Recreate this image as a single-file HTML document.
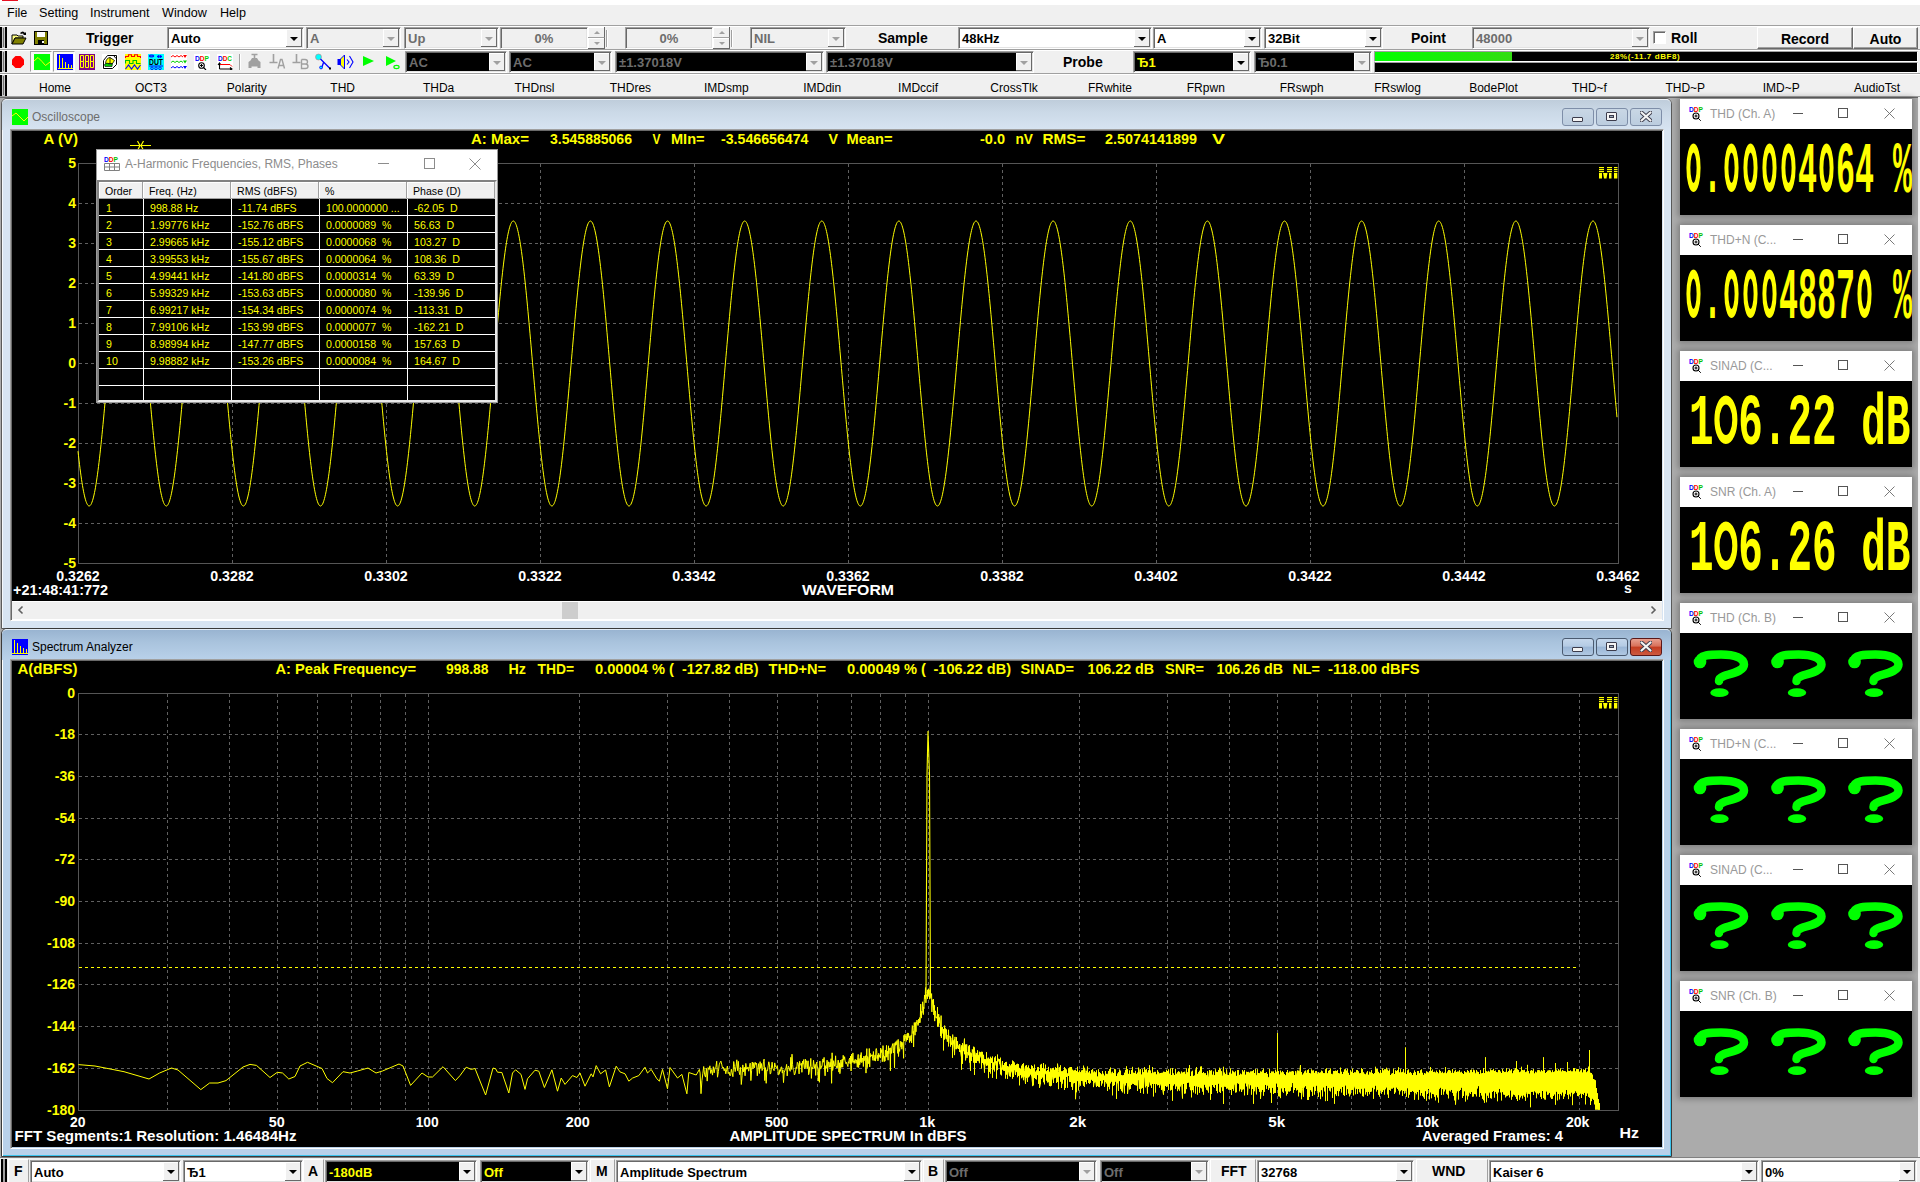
<!DOCTYPE html>
<html><head><meta charset="utf-8">
<style>
*{margin:0;padding:0;box-sizing:border-box}
html,body{width:1920px;height:1182px;overflow:hidden;background:#ababab;font-family:"Liberation Sans",sans-serif;}
.a{position:absolute}
.t{position:absolute;white-space:nowrap;line-height:1}
.tb{background:#f0f0f0}
.cb{position:absolute;background:#fff;border-top:1px solid #a0a0a0;border-left:1px solid #a0a0a0;border-right:1px solid #fff;border-bottom:1px solid #fff;box-shadow:inset 1px 1px 0 #696969, inset -1px -1px 0 #e3e3e3}
.cb .v{position:absolute;left:3px;top:3px;font-size:13px;font-weight:bold;color:#000;white-space:nowrap;line-height:1}
.cb .ar{position:absolute;top:1px;right:1px;bottom:1px;width:16px;background:#f0f0f0;border-right:1px solid #696969;border-bottom:1px solid #696969;box-shadow:inset 1px 1px 0 #fff}
.cb .ar:after{content:"";position:absolute;left:4px;top:8px;border-left:4px solid transparent;border-right:4px solid transparent;border-top:4px solid #000}
.cb.dis{background:#f0f0f0}
.cb.dis .v{color:#6d6d6d}
.cb.dis .ar:after{border-top-color:#a0a0a0}
.cb.blk{background:#000}
.cb.blk .v{color:#6d6d6d}
.cb.yel .v{color:#ffff00}
.cb.blk .ar:after{border-top-color:#a0a0a0}
.cb.blk.en .ar:after{border-top-color:#000}
.lbl{position:absolute;font-size:14px;font-weight:bold;color:#000;white-space:nowrap;line-height:1}
.tab{position:absolute;top:82px;font-size:12px;color:#000;white-space:nowrap;line-height:1;transform:translateX(-50%)}
.grip{position:absolute;left:1px;width:5px;border-left:2px solid #000;border-right:2px solid #000;background:#a0a0a0}
</style></head><body>
<div class="a" style="left:0;top:0;width:1920px;height:5px;background:#fff"></div>
<div class="a" style="left:2px;top:0;width:16px;height:1px;background:#e81123"></div>
<div class="a tb" style="left:0;top:5px;width:1920px;height:92px"></div>
<div class="t" style="left:7px;top:7px;font-size:12.6px;color:#000">File</div>
<div class="t" style="left:39px;top:7px;font-size:12.6px;color:#000">Setting</div>
<div class="t" style="left:90px;top:7px;font-size:12.6px;color:#000">Instrument</div>
<div class="t" style="left:162px;top:7px;font-size:12.6px;color:#000">Window</div>
<div class="t" style="left:220px;top:7px;font-size:12.6px;color:#000">Help</div>
<div class="a" style="left:0;top:25px;width:1920px;height:1px;background:#a0a0a0"></div>
<div class="a" style="left:0;top:26px;width:1920px;height:1px;background:#fff"></div>
<div class="a" style="left:0;top:49px;width:1920px;height:1px;background:#a0a0a0"></div>
<div class="a" style="left:0;top:50px;width:1920px;height:1px;background:#fff"></div>
<div class="a" style="left:0;top:73px;width:1920px;height:1px;background:#a0a0a0"></div>
<div class="a" style="left:0;top:74px;width:1920px;height:1px;background:#fff"></div>
<div class="a" style="left:0;top:96px;width:1920px;height:1px;background:#a0a0a0"></div>
<div class="a" style="left:0;top:97px;width:1920px;height:1px;background:#696969"></div>
<div class="a" style="left:0;top:27px;width:2px;height:21px;background:#000"></div>
<div class="a" style="left:2px;top:27px;width:3px;height:21px;background:#c8c8c8"></div>
<div class="a" style="left:3px;top:28px;width:1px;height:19px;background:#707070"></div>
<div class="a" style="left:5px;top:27px;width:2px;height:21px;background:#000"></div>
<div class="a" style="left:0;top:51px;width:2px;height:21px;background:#000"></div>
<div class="a" style="left:2px;top:51px;width:3px;height:21px;background:#c8c8c8"></div>
<div class="a" style="left:3px;top:52px;width:1px;height:19px;background:#707070"></div>
<div class="a" style="left:5px;top:51px;width:2px;height:21px;background:#000"></div>
<div class="a" style="left:0;top:75px;width:2px;height:21px;background:#000"></div>
<div class="a" style="left:2px;top:75px;width:3px;height:21px;background:#c8c8c8"></div>
<div class="a" style="left:3px;top:76px;width:1px;height:19px;background:#707070"></div>
<div class="a" style="left:5px;top:75px;width:2px;height:21px;background:#000"></div><svg class="a" style="left:11px;top:30px" width="16" height="16" viewBox="0 0 16 16"><path d="M1 5h5l1 1h5v2H4L1 14z" fill="#ffff80" stroke="#000" stroke-width="1"/><path d="M1 14l3-6h11l-3 6z" fill="#808000" stroke="#000"/><path d="M9 3q3-3 5 0l1-1v3h-3l1-1q-2-1-3 0" fill="#000"/></svg>
<svg class="a" style="left:34px;top:31px" width="15" height="15" viewBox="0 0 15 15"><rect x="0.5" y="0.5" width="13" height="13" fill="#808000" stroke="#000"/><rect x="3" y="1" width="8" height="5" fill="#fff"/><rect x="4" y="9" width="6" height="4" fill="#000"/><rect x="8" y="10" width="2" height="2" fill="#fff"/></svg>
<svg class="a" style="left:12px;top:56px" width="12" height="12" viewBox="0 0 12 12"><polygon points="3.5,0 8.5,0 12,3.5 12,8.5 8.5,12 3.5,12 0,8.5 0,3.5" fill="#ff0000"/></svg>
<div class="a" style="left:30px;top:51px;width:22px;height:21px;border-left:1px solid #a0a0a0;border-top:1px solid #a0a0a0;border-right:1px solid #fff;border-bottom:1px solid #fff;background:#f8f8f8"></div>
<div class="a" style="left:53px;top:51px;width:22px;height:21px;border-left:1px solid #a0a0a0;border-top:1px solid #a0a0a0;border-right:1px solid #fff;border-bottom:1px solid #fff;background:#f8f8f8"></div>
<svg class="a" style="left:34px;top:54px" width="16" height="16" viewBox="0 0 16 16"><rect width="16" height="16" fill="#00ff00"/><path d="M0 7L4 3.5L8 7.5L11.5 11.5L16 8" fill="none" stroke="#ffff00" stroke-width="1"/></svg>
<svg class="a" style="left:57px;top:54px" width="16" height="16" viewBox="0 0 16 16"><rect width="16" height="16" fill="#0000ff"/><path d="M1 14.5h15M2.5 1v14M5.5 4v11M8.5 8v7M11.5 10v5M14.5 11v4" stroke="#ffff00" stroke-width="1"/></svg>
<svg class="a" style="left:79px;top:54px" width="16" height="16" viewBox="0 0 16 16"><rect width="16" height="16" fill="#800080"/><path d="M1.5 1.5h3v6h-3zM1.5 7.5h3v6h-3z" fill="none" stroke="#ffff00" stroke-width="1"/><path d="M6.5 1.5h3v6h-3zM6.5 7.5h3v6h-3z" fill="none" stroke="#ffff00" stroke-width="1"/><path d="M11.5 1.5h3v6h-3zM11.5 7.5h3v6h-3z" fill="none" stroke="#ffff00" stroke-width="1"/></svg>
<svg class="a" style="left:102px;top:54px" width="16" height="16" viewBox="0 0 16 16"><rect width="16" height="16" fill="#fff"/><path d="M1.5 6.5L5.5 1.5H14.5V10.5L10.5 14.5H1.5z" fill="#fff" stroke="#000"/><path d="M12 2l2 2.5" stroke="#000"/><path d="M3.5 9.5Q4 4 8 3.5L12.5 6.5L10.5 9.5z" fill="#ffff00" stroke="#000" stroke-width="0.8"/><path d="M2.5 10.5L5 9L8 10.5L10.5 9.5L10 12.5H3z" fill="#00d000" stroke="#000" stroke-width="0.6"/><path d="M8 3.5V9.5" stroke="#000" stroke-width="0.8"/></svg>
<svg class="a" style="left:125px;top:54px" width="16" height="16" viewBox="0 0 16 16"><rect width="16" height="16" fill="#ffff00"/><path d="M0.5 4V2.5H3.5V0.8H6.5V2.5H9.5V0.8H12.5V2.5H15.5V4" stroke="#ff0000" fill="none" stroke-width="1.1"/><path d="M0.5 9.5V6.5H4.5V9.5H8V6.5H11.5V9.5H15.5" stroke="#00c000" fill="none" stroke-width="1.1"/><path d="M0.5 15L3.5 11L6.5 15L9.5 11L12.5 15L15.5 11" stroke="#0000ff" fill="none" stroke-width="1.1"/></svg>
<svg class="a" style="left:148px;top:54px" width="16" height="16" viewBox="0 0 16 16"><rect width="16" height="16" fill="#00ffff"/><path d="M1 2h5M11 1.5l-2 1 2 1zM12 1.5l2 1-2 1z" stroke="#0000ff" fill="#0000ff" stroke-width="1"/><ellipse cx="3.5" cy="2" rx="2.5" ry="1" fill="none" stroke="#0000ff"/><text x="1" y="10.5" font-family="Liberation Sans" font-weight="bold" font-size="8.5" fill="#000" textLength="14" lengthAdjust="spacingAndGlyphs">DUT</text><path d="M1 12h14" stroke="#0000ff"/><circle cx="4" cy="14.3" r="1.3" fill="none" stroke="#0000ff" stroke-width="0.9"/><circle cx="8" cy="14.3" r="1.3" fill="none" stroke="#0000ff" stroke-width="0.9"/><circle cx="12" cy="14.3" r="1.3" fill="none" stroke="#0000ff" stroke-width="0.9"/></svg>
<svg class="a" style="left:171px;top:54px" width="16" height="16" viewBox="0 0 16 16"><rect width="16" height="16" fill="#fff"/><path d="M0 3l2-1.5 2 1.5 2-1.5 2 1.5 2-1.5 2 1.5" stroke="#ff0000" fill="none"/><path d="M12 1h4l-2 3z" fill="#ff0000"/><path d="M0 8.5l2-1.5 2 1.5 2-1.5 2 1.5 2-1.5 2 1.5" stroke="#00d000" fill="none"/><path d="M12 6.5h4l-2 3z" fill="#00d000"/><path d="M0 14l2-1.5 2 1.5 2-1.5 2 1.5 2-1.5 2 1.5" stroke="#0000ff" fill="none"/><path d="M12 12h4l-2 3z" fill="#0000ff"/></svg>
<svg class="a" style="left:194px;top:54px" width="16" height="16" viewBox="0 0 16 16"><rect width="16" height="16" fill="#fff"/><text x="1" y="7" font-family="Liberation Sans" font-weight="bold" font-size="7.5" textLength="14" lengthAdjust="spacingAndGlyphs"><tspan fill="#0000ff">D</tspan><tspan fill="#ff0000">D</tspan><tspan fill="#00d000">P</tspan></text><circle cx="7.5" cy="11.5" r="2.8" fill="none" stroke="#000" stroke-width="1.1"/><path d="M6 11.5h3M7.5 10v3M9.5 13.5l2.5 2.5" stroke="#000" stroke-width="1.1"/></svg>
<svg class="a" style="left:217px;top:54px" width="16" height="16" viewBox="0 0 16 16"><rect width="16" height="16" fill="#fff"/><text x="1" y="7" font-family="Liberation Sans" font-weight="bold" font-size="7.5" textLength="14" lengthAdjust="spacingAndGlyphs"><tspan fill="#0000ff">D</tspan><tspan fill="#ff0000">D</tspan><tspan fill="#00d000">C</tspan></text><path d="M2.5 15V9.5M1 11l1.5-2 1.5 2M2.5 15H15M13 13.5l2 1.5-2 1.5" stroke="#000" fill="none" stroke-width="1.1"/><path d="M3 10.5H13L15 12.5" stroke="#ff0000" fill="none"/></svg>
<div class="a" style="left:239px;top:54px;width:1px;height:16px;background:#a0a0a0"></div><div class="a" style="left:240px;top:54px;width:1px;height:16px;background:#fff"></div>
<svg class="a" style="left:247px;top:53px" width="16" height="17" viewBox="0 0 16 17"><path d="M4.5 1.5h6M7.5 1.5v3.5" stroke="#a0a0a0" stroke-width="1.6" fill="none"/><path d="M5 5h5l1.5 2.5L13.5 9V15H10.5V13.5H4.5V15H1.5V9L3.5 7.5z" fill="#a0a0a0"/></svg>
<svg class="a" style="left:269px;top:53px" width="17" height="17" viewBox="0 0 17 17"><path d="M4.5 1v8.5M0.5 9.5h8" stroke="#a0a0a0" stroke-width="1.6"/><path d="M9 15.5L11.5 6.5h1.5L15.5 15.5M10 12.5h4.5" stroke="#a0a0a0" stroke-width="1.4" fill="none"/></svg>
<svg class="a" style="left:292px;top:53px" width="17" height="17" viewBox="0 0 17 17"><path d="M4.5 1v8.5M0.5 9.5h8" stroke="#a0a0a0" stroke-width="1.6"/><path d="M9.5 6.5h3.5q2.5 0 2.5 2.3t-2.5 2.2h-3.5M9.5 11h3.8q2.7 0 2.7 2.2t-2.7 2.3h-3.8zM9.5 6.5v9" stroke="#a0a0a0" stroke-width="1.4" fill="none"/></svg>
<svg class="a" style="left:315px;top:53px" width="17" height="17" viewBox="0 0 17 17"><circle cx="3.5" cy="4" r="3" fill="#00ffff" stroke="#c08080" stroke-width="0.6"/><path d="M5.5 6l9.5 9.5M8.5 9.5l-2 6" stroke="#0000ff" stroke-width="1.3" fill="none"/><circle cx="6" cy="14.5" r="1.4" fill="#00ffff" stroke="#0000ff" stroke-width="0.8"/><rect x="14" y="14.5" width="2" height="2" fill="#000"/></svg>
<svg class="a" style="left:337px;top:53px" width="17" height="17" viewBox="0 0 17 17"><rect x="0.5" y="6" width="3" height="6" fill="#0000ff"/><path d="M3.5 6L7.5 2V16L3.5 12z" fill="#ffff00" stroke="#0000ff" stroke-width="1"/><path d="M10 6.5l2 2.5-2 2.5M12.5 3l3.5 6-3.5 6" stroke="#0000ff" stroke-width="1.1" fill="none"/></svg>
<svg class="a" style="left:363px;top:54px" width="13" height="14" viewBox="0 0 13 14"><polygon points="0,2 11,7 0,12" fill="#00ff00"/></svg>
<svg class="a" style="left:386px;top:54px" width="14" height="16" viewBox="0 0 14 16"><polygon points="0,2 10,7 0,12" fill="#00ff00"/><ellipse cx="10.5" cy="13" rx="2.6" ry="1.6" fill="none" stroke="#00ff00" stroke-width="1.2"/></svg>
<div class="lbl" style="left:86px;top:31px">Trigger</div>
<div class="cb " style="left:167px;top:27px;width:137px;height:22px"><div class="v" style="left:3px;top:4px;font-size:13px;font-weight:bold">Auto</div><div class="ar"></div></div>

<div class="cb dis" style="left:306px;top:27px;width:95px;height:22px"><div class="v" style="left:3px;top:4px;font-size:13px;font-weight:bold">A</div><div class="ar"></div></div>

<div class="cb dis" style="left:404px;top:27px;width:95px;height:22px"><div class="v" style="left:3px;top:4px;font-size:13px;font-weight:bold">Up</div><div class="ar"></div></div>

<div class="cb dis" style="left:500px;top:27px;width:88px;height:22px"><div class="v" style="left:0;right:0;text-align:center;top:4px">0%</div></div>
<div class="a" style="left:588px;top:27px;width:17px;height:11px;background:#f0f0f0;border-right:1px solid #696969;border-bottom:1px solid #a0a0a0;box-shadow:inset 1px 1px 0 #fff"><div class="a" style="left:6px;top:4px;border-left:3px solid transparent;border-right:3px solid transparent;border-bottom:3px solid #a0a0a0"></div></div>
<div class="a" style="left:588px;top:38px;width:17px;height:11px;background:#f0f0f0;border-right:1px solid #696969;border-bottom:1px solid #696969;box-shadow:inset 1px 1px 0 #fff"><div class="a" style="left:6px;top:4px;border-left:3px solid transparent;border-right:3px solid transparent;border-top:3px solid #a0a0a0"></div></div>

<div class="a" style="left:606px;top:30px;width:1px;height:17px;background:#a0a0a0"></div><div class="a" style="left:607px;top:30px;width:1px;height:17px;background:#fff"></div>
<div class="cb dis" style="left:625px;top:27px;width:88px;height:22px"><div class="v" style="left:0;right:0;text-align:center;top:4px">0%</div></div>
<div class="a" style="left:713px;top:27px;width:17px;height:11px;background:#f0f0f0;border-right:1px solid #696969;border-bottom:1px solid #a0a0a0;box-shadow:inset 1px 1px 0 #fff"><div class="a" style="left:6px;top:4px;border-left:3px solid transparent;border-right:3px solid transparent;border-bottom:3px solid #a0a0a0"></div></div>
<div class="a" style="left:713px;top:38px;width:17px;height:11px;background:#f0f0f0;border-right:1px solid #696969;border-bottom:1px solid #696969;box-shadow:inset 1px 1px 0 #fff"><div class="a" style="left:6px;top:4px;border-left:3px solid transparent;border-right:3px solid transparent;border-top:3px solid #a0a0a0"></div></div>

<div class="a" style="left:731px;top:30px;width:1px;height:17px;background:#a0a0a0"></div><div class="a" style="left:732px;top:30px;width:1px;height:17px;background:#fff"></div>
<div class="cb dis" style="left:750px;top:27px;width:96px;height:22px"><div class="v" style="left:3px;top:4px;font-size:13px;font-weight:bold">NIL</div><div class="ar"></div></div>

<div class="lbl" style="left:878px;top:31px">Sample</div>
<div class="cb " style="left:958px;top:27px;width:194px;height:22px"><div class="v" style="left:3px;top:4px;font-size:13px;font-weight:bold">48kHz</div><div class="ar"></div></div>

<div class="cb " style="left:1153px;top:27px;width:109px;height:22px"><div class="v" style="left:3px;top:4px;font-size:13px;font-weight:bold">A</div><div class="ar"></div></div>

<div class="cb " style="left:1264px;top:27px;width:119px;height:22px"><div class="v" style="left:3px;top:4px;font-size:13px;font-weight:bold">32Bit</div><div class="ar"></div></div>

<div class="lbl" style="left:1411px;top:31px">Point</div>
<div class="cb dis" style="left:1472px;top:27px;width:178px;height:22px"><div class="v" style="left:3px;top:4px;font-size:13px;font-weight:bold">48000</div><div class="ar"></div></div>

<div class="a" style="left:1653px;top:31px;width:13px;height:13px;background:#fff;border-top:1px solid #a0a0a0;border-left:1px solid #a0a0a0;border-right:1px solid #fff;border-bottom:1px solid #fff;box-shadow:inset 1px 1px 0 #696969"></div>
<div class="lbl" style="left:1671px;top:31px">Roll</div>
<div class="a" style="left:1757px;top:27px;width:96px;height:22px;background:#f0f0f0;border-top:1px solid #fff;border-left:1px solid #fff;border-right:1px solid #696969;border-bottom:1px solid #696969;box-shadow:inset -1px -1px 0 #a0a0a0"><div class="t" style="left:0;right:0;top:4px;text-align:center;font-size:14px;font-weight:bold;color:#000">Record</div></div>
<div class="a" style="left:1853px;top:27px;width:65px;height:22px;background:#f0f0f0;border-top:1px solid #fff;border-left:1px solid #fff;border-right:1px solid #696969;border-bottom:1px solid #696969;box-shadow:inset -1px -1px 0 #a0a0a0"><div class="t" style="left:0;right:0;top:4px;text-align:center;font-size:14px;font-weight:bold;color:#000">Auto</div></div>
<div class="cb blk" style="left:405px;top:51px;width:102px;height:22px"><div class="v" style="left:3px;top:4px;font-size:13px;font-weight:bold">AC</div><div class="ar"></div></div>

<div class="cb blk" style="left:509px;top:51px;width:103px;height:22px"><div class="v" style="left:3px;top:4px;font-size:13px;font-weight:bold">AC</div><div class="ar"></div></div>

<div class="cb blk" style="left:615px;top:51px;width:209px;height:22px"><div class="v" style="left:3px;top:4px;font-size:13px;font-weight:bold">&plusmn;1.37018V</div><div class="ar"></div></div>

<div class="cb blk" style="left:826px;top:51px;width:208px;height:22px"><div class="v" style="left:3px;top:4px;font-size:13px;font-weight:bold">&plusmn;1.37018V</div><div class="ar"></div></div>

<div class="lbl" style="left:1063px;top:55px">Probe</div>
<div class="cb blk yel en" style="left:1133px;top:51px;width:118px;height:22px"><div class="v" style="left:3px;top:4px;font-size:13px;font-weight:bold">&#x402;1</div><div class="ar"></div></div>

<div class="cb blk" style="left:1254px;top:51px;width:118px;height:22px"><div class="v" style="left:3px;top:4px;font-size:13px;font-weight:bold">&#x402;0.1</div><div class="ar"></div></div>

<div class="a" style="left:1374px;top:51px;width:544px;height:11px;background:#000;border:1px solid #fff;border-top-color:#a0a0a0;border-left-color:#a0a0a0"></div>
<div class="a" style="left:1375px;top:52px;width:137px;height:9px;background:linear-gradient(90deg,#00ff00,#33dd11)"></div>
<div class="t" style="left:1610px;top:53px;font-size:8px;font-weight:bold;color:#ffff00;letter-spacing:0.6px">28%(-11.7 dBF8)</div>
<div class="a" style="left:1374px;top:62px;width:544px;height:11px;background:#000;border:1px solid #fff;border-top-color:#a0a0a0;border-left-color:#a0a0a0"></div>
<div class="tab" style="left:55.0px">Home</div>
<div class="tab" style="left:150.9px">OCT3</div>
<div class="tab" style="left:246.8px">Polarity</div>
<div class="tab" style="left:342.7px">THD</div>
<div class="tab" style="left:438.6px">THDa</div>
<div class="tab" style="left:534.5px">THDnsl</div>
<div class="tab" style="left:630.4px">THDres</div>
<div class="tab" style="left:726.3px">IMDsmp</div>
<div class="tab" style="left:822.2px">IMDdin</div>
<div class="tab" style="left:918.1px">IMDccif</div>
<div class="tab" style="left:1014.0px">CrossTlk</div>
<div class="tab" style="left:1109.9px">FRwhite</div>
<div class="tab" style="left:1205.8px">FRpwn</div>
<div class="tab" style="left:1301.7px">FRswph</div>
<div class="tab" style="left:1397.6px">FRswlog</div>
<div class="tab" style="left:1493.5px">BodePlot</div>
<div class="tab" style="left:1589.4px">THD~f</div>
<div class="tab" style="left:1685.3px">THD~P</div>
<div class="tab" style="left:1781.2px">IMD~P</div>
<div class="tab" style="left:1877.1px">AudioTst</div><div class="a" style="left:1px;top:98px;width:1671px;height:531px;background:#d7e4f2;border:1px solid #5a5a5a;border-radius:6px 6px 0 0;box-shadow:inset 1px 1px 0 #f4f8fc"></div>
<div class="a" style="left:2px;top:99px;width:1669px;height:31px;background:linear-gradient(#bfcddb 0%, #cbd9e7 40%, #d7e4f2 100%);border-radius:5px 5px 0 0;border-top:1px solid rgba(255,255,255,0.6)"></div>
<svg class="a" style="left:12px;top:109px" width="16" height="16" viewBox="0 0 16 16"><rect width="16" height="16" fill="#00ff00"/><path d="M0 7 L4 4 L8 8 L12 12 L16 8" fill="none" stroke="#ffff00" stroke-width="1"/></svg>
<div class="t" style="left:32px;top:111px;font-size:12px;color:#6d6d6d">Oscilloscope</div>
<div class="a" style="left:1562px;top:108px;width:32px;height:18px;background:linear-gradient(#c9d7e5 0%, #c2d2e2 50%, #bccddf 100%);border:1px solid #7e8ea8;border-radius:3px"></div>
<div class="a" style="left:1596px;top:108px;width:32px;height:18px;background:linear-gradient(#c9d7e5 0%, #c2d2e2 50%, #bccddf 100%);border:1px solid #7e8ea8;border-radius:3px"></div>
<div class="a" style="left:1630px;top:108px;width:32px;height:18px;background:linear-gradient(#c9d7e5 0%, #c2d2e2 50%, #bccddf 100%);border:1px solid #7e8ea8;border-radius:3px"></div>
<div class="a" style="left:1572px;top:117px;width:11px;height:5px;background:#f4f4f4;border:1px solid #3c3c4c;border-radius:1px"></div>
<div class="a" style="left:1606px;top:112px;width:11px;height:9px;background:#f4f4f4;border:1px solid #3c3c4c;border-radius:1px"><div class="a" style="left:2px;top:2px;width:5px;height:3px;border:1px solid #3c3c4c;background:#9ab"></div></div>
<svg class="a" style="left:1640px;top:111px" width="12" height="11" viewBox="0 0 12 11"><path d="M1.5 1.5l9 8M10.5 1.5l-9 8" stroke="#3c3c4c" stroke-width="4" stroke-linecap="round"/><path d="M1.5 1.5l9 8M10.5 1.5l-9 8" stroke="#f4f4f4" stroke-width="2.2" stroke-linecap="round"/></svg>
<div class="a" style="left:10px;top:129px;width:1654px;height:492px;border-top:1px solid #a0a0a0;border-left:1px solid #a0a0a0;border-right:1px solid #fff;border-bottom:1px solid #fff;box-shadow:inset 1px 1px 0 #696969"></div>
<svg class="a" style="left:12px;top:131px" width="1650" height="470" viewBox="12 131 1650 470"><rect x="12" y="131" width="1650" height="470" fill="#000"/><line x1="232.5" y1="164" x2="232.5" y2="563" stroke="#606060" stroke-dasharray="3 3"/><line x1="386.5" y1="164" x2="386.5" y2="563" stroke="#606060" stroke-dasharray="3 3"/><line x1="540.5" y1="164" x2="540.5" y2="563" stroke="#606060" stroke-dasharray="3 3"/><line x1="694.5" y1="164" x2="694.5" y2="563" stroke="#606060" stroke-dasharray="3 3"/><line x1="848.5" y1="164" x2="848.5" y2="563" stroke="#606060" stroke-dasharray="3 3"/><line x1="1002.5" y1="164" x2="1002.5" y2="563" stroke="#606060" stroke-dasharray="3 3"/><line x1="1156.5" y1="164" x2="1156.5" y2="563" stroke="#606060" stroke-dasharray="3 3"/><line x1="1310.5" y1="164" x2="1310.5" y2="563" stroke="#606060" stroke-dasharray="3 3"/><line x1="1464.5" y1="164" x2="1464.5" y2="563" stroke="#606060" stroke-dasharray="3 3"/><line x1="79" y1="203.5" x2="1618" y2="203.5" stroke="#606060" stroke-dasharray="3 3"/><line x1="79" y1="243.5" x2="1618" y2="243.5" stroke="#606060" stroke-dasharray="3 3"/><line x1="79" y1="283.5" x2="1618" y2="283.5" stroke="#606060" stroke-dasharray="3 3"/><line x1="79" y1="323.5" x2="1618" y2="323.5" stroke="#606060" stroke-dasharray="3 3"/><line x1="79" y1="363.5" x2="1618" y2="363.5" stroke="#606060" stroke-dasharray="3 3"/><line x1="79" y1="403.5" x2="1618" y2="403.5" stroke="#606060" stroke-dasharray="3 3"/><line x1="79" y1="443.5" x2="1618" y2="443.5" stroke="#606060" stroke-dasharray="3 3"/><line x1="79" y1="483.5" x2="1618" y2="483.5" stroke="#606060" stroke-dasharray="3 3"/><line x1="79" y1="523.5" x2="1618" y2="523.5" stroke="#606060" stroke-dasharray="3 3"/><rect x="78.5" y="163.5" width="1540" height="400" fill="none" stroke="#555555"/><polyline points="78.0,451.2 78.5,455.7 79.0,460.1 79.5,464.3 80.0,468.3 80.5,472.1 81.0,475.8 81.5,479.3 82.0,482.6 82.5,485.7 83.0,488.5 83.5,491.2 84.0,493.7 84.5,495.9 85.0,498.0 85.5,499.8 86.0,501.4 86.5,502.7 87.0,503.8 87.5,504.7 88.0,505.4 88.5,505.8 89.0,506.0 89.5,505.9 90.0,505.7 90.5,505.1 91.0,504.4 91.5,503.4 92.0,502.1 92.5,500.7 93.0,499.0 93.5,497.1 94.0,495.0 94.5,492.6 95.0,490.1 95.5,487.3 96.0,484.3 96.5,481.1 97.0,477.8 97.5,474.2 98.0,470.5 98.5,466.5 99.0,462.4 99.5,458.2 100.0,453.8 100.5,449.2 101.0,444.5 101.5,439.7 102.0,434.7 102.5,429.6 103.0,424.4 103.5,419.1 104.0,413.7 104.5,408.2 105.0,402.7 105.5,397.1 106.0,391.4 106.5,385.7 107.0,379.9 107.5,374.2 108.0,368.4 108.5,362.6 109.0,356.8 109.5,351.0 110.0,345.2 110.5,339.5 111.0,333.8 111.5,328.1 112.0,322.5 112.5,317.0 113.0,311.6 113.5,306.2 114.0,300.9 114.5,295.8 115.0,290.7 115.5,285.8 116.0,281.0 116.5,276.3 117.0,271.8 117.5,267.4 118.0,263.2 118.5,259.2 119.0,255.3 119.5,251.6 120.0,248.1 120.5,244.8 121.0,241.7 121.5,238.8 122.0,236.1 122.5,233.6 123.0,231.3 123.5,229.3 124.0,227.4 124.5,225.8 125.0,224.4 125.5,223.3 126.0,222.4 126.5,221.7 127.0,221.2 127.5,221.0 128.0,221.0 128.5,221.3 129.0,221.8 129.5,222.5 130.0,223.5 130.5,224.7 131.0,226.1 131.5,227.8 132.0,229.7 132.5,231.8 133.0,234.1 133.5,236.6 134.0,239.4 134.5,242.3 135.0,245.5 135.5,248.8 136.0,252.4 136.5,256.1 137.0,260.0 137.5,264.1 138.0,268.3 138.5,272.7 139.0,277.2 139.5,281.9 140.0,286.8 140.5,291.7 141.0,296.8 141.5,302.0 142.0,307.3 142.5,312.6 143.0,318.1 143.5,323.6 144.0,329.2 144.5,334.9 145.0,340.6 145.5,346.4 146.0,352.1 146.5,357.9 147.0,363.7 147.5,369.5 148.0,375.3 148.5,381.1 149.0,386.8 149.5,392.6 150.0,398.2 150.5,403.8 151.0,409.3 151.5,414.8 152.0,420.2 152.5,425.4 153.0,430.6 153.5,435.7 154.0,440.6 154.5,445.4 155.0,450.1 155.5,454.7 156.0,459.0 156.5,463.3 157.0,467.3 157.5,471.2 158.0,474.9 158.5,478.5 159.0,481.8 159.5,484.9 160.0,487.9 160.5,490.6 161.0,493.1 161.5,495.4 162.0,497.5 162.5,499.4 163.0,501.0 163.5,502.4 164.0,503.6 164.5,504.5 165.0,505.2 165.5,505.7 166.0,506.0 166.5,506.0 167.0,505.7 167.5,505.3 168.0,504.6 168.5,503.6 169.0,502.5 169.5,501.1 170.0,499.4 170.5,497.6 171.0,495.5 171.5,493.2 172.0,490.7 172.5,488.0 173.0,485.0 173.5,481.9 174.0,478.6 174.5,475.1 175.0,471.4 175.5,467.5 176.0,463.4 176.5,459.2 177.0,454.8 177.5,450.3 178.0,445.6 178.5,440.8 179.0,435.9 179.5,430.8 180.0,425.7 180.5,420.4 181.0,415.0 181.5,409.6 182.0,404.0 182.5,398.4 183.0,392.8 183.5,387.1 184.0,381.3 184.5,375.6 185.0,369.8 185.5,364.0 186.0,358.2 186.5,352.4 187.0,346.6 187.5,340.8 188.0,335.1 188.5,329.5 189.0,323.9 189.5,318.3 190.0,312.9 190.5,307.5 191.0,302.2 191.5,297.0 192.0,291.9 192.5,287.0 193.0,282.1 193.5,277.4 194.0,272.9 194.5,268.5 195.0,264.2 195.5,260.1 196.0,256.2 196.5,252.5 197.0,249.0 197.5,245.6 198.0,242.4 198.5,239.5 199.0,236.7 199.5,234.2 200.0,231.8 200.5,229.7 201.0,227.8 201.5,226.2 202.0,224.7 202.5,223.5 203.0,222.6 203.5,221.8 204.0,221.3 204.5,221.0 205.0,221.0 205.5,221.2 206.0,221.7 206.5,222.3 207.0,223.2 207.5,224.4 208.0,225.8 208.5,227.4 209.0,229.2 209.5,231.2 210.0,233.5 210.5,236.0 211.0,238.7 211.5,241.6 212.0,244.7 212.5,248.0 213.0,251.5 213.5,255.2 214.0,259.0 214.5,263.1 215.0,267.3 215.5,271.6 216.0,276.1 216.5,280.8 217.0,285.6 217.5,290.5 218.0,295.6 218.5,300.7 219.0,306.0 219.5,311.3 220.0,316.8 220.5,322.3 221.0,327.9 221.5,333.5 222.0,339.2 222.5,345.0 223.0,350.7 223.5,356.5 224.0,362.3 224.5,368.1 225.0,373.9 225.5,379.7 226.0,385.5 226.5,391.2 227.0,396.9 227.5,402.5 228.0,408.0 228.5,413.5 229.0,418.9 229.5,424.2 230.0,429.4 230.5,434.5 231.0,439.5 231.5,444.3 232.0,449.0 232.5,453.6 233.0,458.0 233.5,462.3 234.0,466.4 234.5,470.3 235.0,474.1 235.5,477.6 236.0,481.0 236.5,484.2 237.0,487.2 237.5,490.0 238.0,492.5 238.5,494.9 239.0,497.0 239.5,498.9 240.0,500.6 240.5,502.1 241.0,503.3 241.5,504.3 242.0,505.1 242.5,505.6 243.0,505.9 243.5,506.0 244.0,505.8 244.5,505.4 245.0,504.8 245.5,503.9 246.0,502.8 246.5,501.4 247.0,499.8 247.5,498.0 248.0,496.0 248.5,493.8 249.0,491.3 249.5,488.7 250.0,485.8 250.5,482.7 251.0,479.4 251.5,475.9 252.0,472.3 252.5,468.4 253.0,464.4 253.5,460.2 254.0,455.9 254.5,451.4 255.0,446.8 255.5,442.0 256.0,437.1 256.5,432.1 257.0,426.9 257.5,421.7 258.0,416.3 258.5,410.9 259.0,405.4 259.5,399.8 260.0,394.1 260.5,388.4 261.0,382.7 261.5,376.9 262.0,371.2 262.5,365.4 263.0,359.6 263.5,353.8 264.0,348.0 264.5,342.2 265.0,336.5 265.5,330.8 266.0,325.2 266.5,319.6 267.0,314.2 267.5,308.8 268.0,303.4 268.5,298.2 269.0,293.1 269.5,288.1 270.0,283.3 270.5,278.5 271.0,274.0 271.5,269.5 272.0,265.2 272.5,261.1 273.0,257.2 273.5,253.4 274.0,249.8 274.5,246.4 275.0,243.2 275.5,240.2 276.0,237.4 276.5,234.8 277.0,232.4 277.5,230.2 278.0,228.3 278.5,226.6 279.0,225.1 279.5,223.8 280.0,222.8 280.5,222.0 281.0,221.4 281.5,221.1 282.0,221.0 282.5,221.1 283.0,221.5 283.5,222.1 284.0,223.0 284.5,224.1 285.0,225.4 285.5,227.0 286.0,228.7 286.5,230.7 287.0,232.9 287.5,235.4 288.0,238.0 288.5,240.9 289.0,243.9 289.5,247.2 290.0,250.6 290.5,254.3 291.0,258.1 291.5,262.1 292.0,266.2 292.5,270.6 293.0,275.0 293.5,279.7 294.0,284.4 294.5,289.3 295.0,294.3 295.5,299.5 296.0,304.7 296.5,310.0 297.0,315.5 297.5,321.0 298.0,326.5 298.5,332.2 299.0,337.9 299.5,343.6 300.0,349.4 300.5,355.1 301.0,360.9 301.5,366.8 302.0,372.5 302.5,378.3 303.0,384.1 303.5,389.8 304.0,395.5 304.5,401.1 305.0,406.7 305.5,412.2 306.0,417.6 306.5,422.9 307.0,428.2 307.5,433.3 308.0,438.3 308.5,443.2 309.0,447.9 309.5,452.5 310.0,457.0 310.5,461.3 311.0,465.4 311.5,469.4 312.0,473.2 312.5,476.8 313.0,480.2 313.5,483.4 314.0,486.5 314.5,489.3 315.0,491.9 315.5,494.3 316.0,496.5 316.5,498.5 317.0,500.2 317.5,501.8 318.0,503.1 318.5,504.1 319.0,504.9 319.5,505.5 320.0,505.9 320.5,506.0 321.0,505.9 321.5,505.5 322.0,504.9 322.5,504.1 323.0,503.1 323.5,501.8 324.0,500.2 324.5,498.5 325.0,496.5 325.5,494.3 326.0,491.9 326.5,489.3 327.0,486.5 327.5,483.4 328.0,480.2 328.5,476.8 329.0,473.2 329.5,469.4 330.0,465.4 330.5,461.3 331.0,457.0 331.5,452.5 332.0,447.9 332.5,443.2 333.0,438.3 333.5,433.3 334.0,428.2 334.5,422.9 335.0,417.6 335.5,412.2 336.0,406.7 336.5,401.1 337.0,395.5 337.5,389.8 338.0,384.1 338.5,378.3 339.0,372.5 339.5,366.8 340.0,360.9 340.5,355.1 341.0,349.4 341.5,343.6 342.0,337.9 342.5,332.2 343.0,326.5 343.5,321.0 344.0,315.5 344.5,310.0 345.0,304.7 345.5,299.5 346.0,294.3 346.5,289.3 347.0,284.4 347.5,279.7 348.0,275.0 348.5,270.6 349.0,266.2 349.5,262.1 350.0,258.1 350.5,254.3 351.0,250.6 351.5,247.2 352.0,243.9 352.5,240.9 353.0,238.0 353.5,235.4 354.0,232.9 354.5,230.7 355.0,228.7 355.5,227.0 356.0,225.4 356.5,224.1 357.0,223.0 357.5,222.1 358.0,221.5 358.5,221.1 359.0,221.0 359.5,221.1 360.0,221.4 360.5,222.0 361.0,222.8 361.5,223.8 362.0,225.1 362.5,226.6 363.0,228.3 363.5,230.2 364.0,232.4 364.5,234.8 365.0,237.4 365.5,240.2 366.0,243.2 366.5,246.4 367.0,249.8 367.5,253.4 368.0,257.2 368.5,261.1 369.0,265.2 369.5,269.5 370.0,274.0 370.5,278.5 371.0,283.3 371.5,288.1 372.0,293.1 372.5,298.2 373.0,303.4 373.5,308.8 374.0,314.2 374.5,319.6 375.0,325.2 375.5,330.8 376.0,336.5 376.5,342.2 377.0,348.0 377.5,353.8 378.0,359.6 378.5,365.4 379.0,371.2 379.5,376.9 380.0,382.7 380.5,388.4 381.0,394.1 381.5,399.8 382.0,405.4 382.5,410.9 383.0,416.3 383.5,421.7 384.0,426.9 384.5,432.1 385.0,437.1 385.5,442.0 386.0,446.8 386.5,451.4 387.0,455.9 387.5,460.2 388.0,464.4 388.5,468.4 389.0,472.3 389.5,475.9 390.0,479.4 390.5,482.7 391.0,485.8 391.5,488.7 392.0,491.3 392.5,493.8 393.0,496.0 393.5,498.0 394.0,499.8 394.5,501.4 395.0,502.8 395.5,503.9 396.0,504.8 396.5,505.4 397.0,505.8 397.5,506.0 398.0,505.9 398.5,505.6 399.0,505.1 399.5,504.3 400.0,503.3 400.5,502.1 401.0,500.6 401.5,498.9 402.0,497.0 402.5,494.9 403.0,492.5 403.5,490.0 404.0,487.2 404.5,484.2 405.0,481.0 405.5,477.6 406.0,474.1 406.5,470.3 407.0,466.4 407.5,462.3 408.0,458.0 408.5,453.6 409.0,449.0 409.5,444.3 410.0,439.5 410.5,434.5 411.0,429.4 411.5,424.2 412.0,418.9 412.5,413.5 413.0,408.0 413.5,402.5 414.0,396.9 414.5,391.2 415.0,385.5 415.5,379.7 416.0,373.9 416.5,368.1 417.0,362.3 417.5,356.5 418.0,350.7 418.5,345.0 419.0,339.2 419.5,333.5 420.0,327.9 420.5,322.3 421.0,316.8 421.5,311.3 422.0,306.0 422.5,300.7 423.0,295.6 423.5,290.5 424.0,285.6 424.5,280.8 425.0,276.1 425.5,271.6 426.0,267.3 426.5,263.1 427.0,259.0 427.5,255.2 428.0,251.5 428.5,248.0 429.0,244.7 429.5,241.6 430.0,238.7 430.5,236.0 431.0,233.5 431.5,231.2 432.0,229.2 432.5,227.4 433.0,225.8 433.5,224.4 434.0,223.2 434.5,222.3 435.0,221.7 435.5,221.2 436.0,221.0 436.5,221.0 437.0,221.3 437.5,221.8 438.0,222.6 438.5,223.5 439.0,224.7 439.5,226.2 440.0,227.8 440.5,229.7 441.0,231.8 441.5,234.2 442.0,236.7 442.5,239.5 443.0,242.4 443.5,245.6 444.0,249.0 444.5,252.5 445.0,256.2 445.5,260.1 446.0,264.2 446.5,268.5 447.0,272.9 447.5,277.4 448.0,282.1 448.5,287.0 449.0,291.9 449.5,297.0 450.0,302.2 450.5,307.5 451.0,312.9 451.5,318.3 452.0,323.9 452.5,329.5 453.0,335.1 453.5,340.8 454.0,346.6 454.5,352.4 455.0,358.2 455.5,364.0 456.0,369.8 456.5,375.6 457.0,381.3 457.5,387.1 458.0,392.8 458.5,398.4 459.0,404.0 459.5,409.6 460.0,415.0 460.5,420.4 461.0,425.7 461.5,430.8 462.0,435.9 462.5,440.8 463.0,445.6 463.5,450.3 464.0,454.8 464.5,459.2 465.0,463.4 465.5,467.5 466.0,471.4 466.5,475.1 467.0,478.6 467.5,481.9 468.0,485.0 468.5,488.0 469.0,490.7 469.5,493.2 470.0,495.5 470.5,497.6 471.0,499.4 471.5,501.1 472.0,502.5 472.5,503.6 473.0,504.6 473.5,505.3 474.0,505.7 474.5,506.0 475.0,506.0 475.5,505.7 476.0,505.2 476.5,504.5 477.0,503.6 477.5,502.4 478.0,501.0 478.5,499.4 479.0,497.5 479.5,495.4 480.0,493.1 480.5,490.6 481.0,487.9 481.5,484.9 482.0,481.8 482.5,478.5 483.0,474.9 483.5,471.2 484.0,467.3 484.5,463.3 485.0,459.0 485.5,454.7 486.0,450.1 486.5,445.4 487.0,440.6 487.5,435.7 488.0,430.6 488.5,425.4 489.0,420.2 489.5,414.8 490.0,409.3 490.5,403.8 491.0,398.2 491.5,392.6 492.0,386.8 492.5,381.1 493.0,375.3 493.5,369.5 494.0,363.7 494.5,357.9 495.0,352.1 495.5,346.4 496.0,340.6 496.5,334.9 497.0,329.2 497.5,323.6 498.0,318.1 498.5,312.6 499.0,307.3 499.5,302.0 500.0,296.8 500.5,291.7 501.0,286.8 501.5,281.9 502.0,277.2 502.5,272.7 503.0,268.3 503.5,264.1 504.0,260.0 504.5,256.1 505.0,252.4 505.5,248.8 506.0,245.5 506.5,242.3 507.0,239.4 507.5,236.6 508.0,234.1 508.5,231.8 509.0,229.7 509.5,227.8 510.0,226.1 510.5,224.7 511.0,223.5 511.5,222.5 512.0,221.8 512.5,221.3 513.0,221.0 513.5,221.0 514.0,221.2 514.5,221.7 515.0,222.4 515.5,223.3 516.0,224.4 516.5,225.8 517.0,227.4 517.5,229.3 518.0,231.3 518.5,233.6 519.0,236.1 519.5,238.8 520.0,241.7 520.5,244.8 521.0,248.1 521.5,251.6 522.0,255.3 522.5,259.2 523.0,263.2 523.5,267.4 524.0,271.8 524.5,276.3 525.0,281.0 525.5,285.8 526.0,290.7 526.5,295.8 527.0,300.9 527.5,306.2 528.0,311.6 528.5,317.0 529.0,322.5 529.5,328.1 530.0,333.8 530.5,339.5 531.0,345.2 531.5,351.0 532.0,356.8 532.5,362.6 533.0,368.4 533.5,374.2 534.0,379.9 534.5,385.7 535.0,391.4 535.5,397.1 536.0,402.7 536.5,408.2 537.0,413.7 537.5,419.1 538.0,424.4 538.5,429.6 539.0,434.7 539.5,439.7 540.0,444.5 540.5,449.2 541.0,453.8 541.5,458.2 542.0,462.4 542.5,466.5 543.0,470.5 543.5,474.2 544.0,477.8 544.5,481.1 545.0,484.3 545.5,487.3 546.0,490.1 546.5,492.6 547.0,495.0 547.5,497.1 548.0,499.0 548.5,500.7 549.0,502.1 549.5,503.4 550.0,504.4 550.5,505.1 551.0,505.7 551.5,505.9 552.0,506.0 552.5,505.8 553.0,505.4 553.5,504.7 554.0,503.8 554.5,502.7 555.0,501.4 555.5,499.8 556.0,498.0 556.5,495.9 557.0,493.7 557.5,491.2 558.0,488.5 558.5,485.7 559.0,482.6 559.5,479.3 560.0,475.8 560.5,472.1 561.0,468.3 561.5,464.3 562.0,460.1 562.5,455.7 563.0,451.2 563.5,446.6 564.0,441.8 564.5,436.9 565.0,431.8 565.5,426.7 566.0,421.4 566.5,416.1 567.0,410.7 567.5,405.1 568.0,399.6 568.5,393.9 569.0,388.2 569.5,382.5 570.0,376.7 570.5,370.9 571.0,365.1 571.5,359.3 572.0,353.5 572.5,347.7 573.0,342.0 573.5,336.3 574.0,330.6 574.5,325.0 575.0,319.4 575.5,313.9 576.0,308.5 576.5,303.2 577.0,298.0 577.5,292.9 578.0,287.9 578.5,283.1 579.0,278.4 579.5,273.8 580.0,269.3 580.5,265.1 581.0,260.9 581.5,257.0 582.0,253.2 582.5,249.7 583.0,246.3 583.5,243.1 584.0,240.1 584.5,237.3 585.0,234.7 585.5,232.3 586.0,230.1 586.5,228.2 587.0,226.5 587.5,225.0 588.0,223.8 588.5,222.7 589.0,222.0 589.5,221.4 590.0,221.1 590.5,221.0 591.0,221.2 591.5,221.6 592.0,222.2 592.5,223.0 593.0,224.1 593.5,225.5 594.0,227.0 594.5,228.8 595.0,230.8 595.5,233.0 596.0,235.5 596.5,238.1 597.0,241.0 597.5,244.1 598.0,247.3 598.5,250.8 599.0,254.4 599.5,258.2 600.0,262.2 600.5,266.4 601.0,270.7 601.5,275.2 602.0,279.9 602.5,284.6 603.0,289.5 603.5,294.5 604.0,299.7 604.5,304.9 605.0,310.3 605.5,315.7 606.0,321.2 606.5,326.8 607.0,332.4 607.5,338.1 608.0,343.8 608.5,349.6 609.0,355.4 609.5,361.2 610.0,367.0 610.5,372.8 611.0,378.6 611.5,384.3 612.0,390.0 612.5,395.7 613.0,401.4 613.5,406.9 614.0,412.4 614.5,417.8 615.0,423.1 615.5,428.4 616.0,433.5 616.5,438.5 617.0,443.3 617.5,448.1 618.0,452.7 618.5,457.1 619.0,461.4 619.5,465.6 620.0,469.5 620.5,473.3 621.0,476.9 621.5,480.3 622.0,483.6 622.5,486.6 623.0,489.4 623.5,492.0 624.0,494.4 624.5,496.6 625.0,498.6 625.5,500.3 626.0,501.8 626.5,503.1 627.0,504.1 627.5,505.0 628.0,505.5 628.5,505.9 629.0,506.0 629.5,505.9 630.0,505.5 630.5,504.9 631.0,504.1 631.5,503.0 632.0,501.7 632.5,500.2 633.0,498.4 633.5,496.4 634.0,494.2 634.5,491.8 635.0,489.2 635.5,486.4 636.0,483.3 636.5,480.1 637.0,476.6 637.5,473.0 638.0,469.2 638.5,465.2 639.0,461.1 639.5,456.8 640.0,452.3 640.5,447.7 641.0,443.0 641.5,438.1 642.0,433.1 642.5,427.9 643.0,422.7 643.5,417.4 644.0,412.0 644.5,406.5 645.0,400.9 645.5,395.3 646.0,389.6 646.5,383.9 647.0,378.1 647.5,372.3 648.0,366.5 648.5,360.7 649.0,354.9 649.5,349.1 650.0,343.4 650.5,337.6 651.0,332.0 651.5,326.3 652.0,320.7 652.5,315.2 653.0,309.8 653.5,304.5 654.0,299.3 654.5,294.1 655.0,289.1 655.5,284.2 656.0,279.5 656.5,274.9 657.0,270.4 657.5,266.1 658.0,261.9 658.5,257.9 659.0,254.1 659.5,250.5 660.0,247.1 660.5,243.8 661.0,240.8 661.5,237.9 662.0,235.3 662.5,232.8 663.0,230.6 663.5,228.6 664.0,226.9 664.5,225.3 665.0,224.0 665.5,223.0 666.0,222.1 666.5,221.5 667.0,221.1 667.5,221.0 668.0,221.1 668.5,221.4 669.0,222.0 669.5,222.8 670.0,223.9 670.5,225.1 671.0,226.6 671.5,228.4 672.0,230.3 672.5,232.5 673.0,234.9 673.5,237.5 674.0,240.3 674.5,243.3 675.0,246.5 675.5,249.9 676.0,253.5 676.5,257.3 677.0,261.3 677.5,265.4 678.0,269.7 678.5,274.1 679.0,278.7 679.5,283.5 680.0,288.3 680.5,293.3 681.0,298.4 681.5,303.7 682.0,309.0 682.5,314.4 683.0,319.9 683.5,325.4 684.0,331.0 684.5,336.7 685.0,342.4 685.5,348.2 686.0,354.0 686.5,359.8 687.0,365.6 687.5,371.4 688.0,377.2 688.5,382.9 689.0,388.7 689.5,394.4 690.0,400.0 690.5,405.6 691.0,411.1 691.5,416.5 692.0,421.9 692.5,427.1 693.0,432.3 693.5,437.3 694.0,442.2 694.5,447.0 695.0,451.6 695.5,456.1 696.0,460.4 696.5,464.6 697.0,468.6 697.5,472.4 698.0,476.1 698.5,479.5 699.0,482.8 699.5,485.9 700.0,488.8 700.5,491.4 701.0,493.9 701.5,496.1 702.0,498.1 702.5,499.9 703.0,501.5 703.5,502.8 704.0,503.9 704.5,504.8 705.0,505.4 705.5,505.8 706.0,506.0 706.5,505.9 707.0,505.6 707.5,505.1 708.0,504.3 708.5,503.3 709.0,502.0 709.5,500.6 710.0,498.9 710.5,496.9 711.0,494.8 711.5,492.4 712.0,489.9 712.5,487.1 713.0,484.1 713.5,480.9 714.0,477.5 714.5,473.9 715.0,470.2 715.5,466.2 716.0,462.1 716.5,457.8 717.0,453.4 717.5,448.8 718.0,444.1 718.5,439.3 719.0,434.3 719.5,429.2 720.0,424.0 720.5,418.7 721.0,413.3 721.5,407.8 722.0,402.2 722.5,396.6 723.0,391.0 723.5,385.2 724.0,379.5 724.5,373.7 725.0,367.9 725.5,362.1 726.0,356.3 726.5,350.5 727.0,344.7 727.5,339.0 728.0,333.3 728.5,327.7 729.0,322.1 729.5,316.6 730.0,311.1 730.5,305.8 731.0,300.5 731.5,295.4 732.0,290.3 732.5,285.4 733.0,280.6 733.5,276.0 734.0,271.4 734.5,267.1 735.0,262.9 735.5,258.9 736.0,255.0 736.5,251.3 737.0,247.9 737.5,244.6 738.0,241.5 738.5,238.6 739.0,235.9 739.5,233.4 740.0,231.1 740.5,229.1 741.0,227.3 741.5,225.7 742.0,224.3 742.5,223.2 743.0,222.3 743.5,221.6 744.0,221.2 744.5,221.0 745.0,221.1 745.5,221.3 746.0,221.8 746.5,222.6 747.0,223.6 747.5,224.8 748.0,226.2 748.5,227.9 749.0,229.8 749.5,231.9 750.0,234.3 750.5,236.8 751.0,239.6 751.5,242.6 752.0,245.7 752.5,249.1 753.0,252.6 753.5,256.4 754.0,260.3 754.5,264.4 755.0,268.6 755.5,273.1 756.0,277.6 756.5,282.3 757.0,287.2 757.5,292.1 758.0,297.2 758.5,302.4 759.0,307.7 759.5,313.1 760.0,318.5 760.5,324.1 761.0,329.7 761.5,335.4 762.0,341.1 762.5,346.8 763.0,352.6 763.5,358.4 764.0,364.2 764.5,370.0 765.0,375.8 765.5,381.6 766.0,387.3 766.5,393.0 767.0,398.7 767.5,404.3 768.0,409.8 768.5,415.2 769.0,420.6 769.5,425.9 770.0,431.0 770.5,436.1 771.0,441.0 771.5,445.8 772.0,450.5 772.5,455.0 773.0,459.4 773.5,463.6 774.0,467.7 774.5,471.5 775.0,475.2 775.5,478.7 776.0,482.0 776.5,485.2 777.0,488.1 777.5,490.8 778.0,493.3 778.5,495.6 779.0,497.7 779.5,499.5 780.0,501.1 780.5,502.5 781.0,503.7 781.5,504.6 782.0,505.3 782.5,505.8 783.0,506.0 783.5,506.0 784.0,505.7 784.5,505.2 785.0,504.5 785.5,503.5 786.0,502.4 786.5,500.9 787.0,499.3 787.5,497.4 788.0,495.3 788.5,493.0 789.0,490.5 789.5,487.8 790.0,484.8 790.5,481.7 791.0,478.3 791.5,474.8 792.0,471.1 792.5,467.2 793.0,463.1 793.5,458.9 794.0,454.5 794.5,449.9 795.0,445.3 795.5,440.4 796.0,435.5 796.5,430.4 797.0,425.2 797.5,420.0 798.0,414.6 798.5,409.1 799.0,403.6 799.5,398.0 800.0,392.3 800.5,386.6 801.0,380.9 801.5,375.1 802.0,369.3 802.5,363.5 803.0,357.7 803.5,351.9 804.0,346.1 804.5,340.4 805.0,334.7 805.5,329.0 806.0,323.4 806.5,317.9 807.0,312.4 807.5,307.0 808.0,301.8 808.5,296.6 809.0,291.5 809.5,286.6 810.0,281.7 810.5,277.1 811.0,272.5 811.5,268.1 812.0,263.9 812.5,259.8 813.0,255.9 813.5,252.2 814.0,248.7 814.5,245.3 815.0,242.2 815.5,239.2 816.0,236.5 816.5,234.0 817.0,231.7 817.5,229.6 818.0,227.7 818.5,226.1 819.0,224.6 819.5,223.5 820.0,222.5 820.5,221.8 821.0,221.3 821.5,221.0 822.0,221.0 822.5,221.2 823.0,221.7 823.5,222.4 824.0,223.3 824.5,224.5 825.0,225.9 825.5,227.5 826.0,229.3 826.5,231.4 827.0,233.7 827.5,236.2 828.0,238.9 828.5,241.8 829.0,245.0 829.5,248.3 830.0,251.8 830.5,255.5 831.0,259.3 831.5,263.4 832.0,267.6 832.5,272.0 833.0,276.5 833.5,281.2 834.0,286.0 834.5,290.9 835.0,296.0 835.5,301.1 836.0,306.4 836.5,311.8 837.0,317.2 837.5,322.7 838.0,328.3 838.5,334.0 839.0,339.7 839.5,345.4 840.0,351.2 840.5,357.0 841.0,362.8 841.5,368.6 842.0,374.4 842.5,380.2 843.0,385.9 843.5,391.6 844.0,397.3 844.5,402.9 845.0,408.5 845.5,413.9 846.0,419.3 846.5,424.6 847.0,429.8 847.5,434.9 848.0,439.8 848.5,444.7 849.0,449.4 849.5,453.9 850.0,458.4 850.5,462.6 851.0,466.7 851.5,470.6 852.0,474.4 852.5,477.9 853.0,481.3 853.5,484.4 854.0,487.4 854.5,490.2 855.0,492.7 855.5,495.1 856.0,497.2 856.5,499.1 857.0,500.8 857.5,502.2 858.0,503.4 858.5,504.4 859.0,505.2 859.5,505.7 860.0,505.9 860.5,506.0 861.0,505.8 861.5,505.4 862.0,504.7 862.5,503.8 863.0,502.7 863.5,501.3 864.0,499.7 864.5,497.9 865.0,495.9 865.5,493.6 866.0,491.1 866.5,488.4 867.0,485.5 867.5,482.4 868.0,479.1 868.5,475.7 869.0,472.0 869.5,468.1 870.0,464.1 870.5,459.9 871.0,455.6 871.5,451.0 872.0,446.4 872.5,441.6 873.0,436.7 873.5,431.6 874.0,426.5 874.5,421.2 875.0,415.9 875.5,410.4 876.0,404.9 876.5,399.3 877.0,393.7 877.5,388.0 878.0,382.3 878.5,376.5 879.0,370.7 879.5,364.9 880.0,359.1 880.5,353.3 881.0,347.5 881.5,341.8 882.0,336.0 882.5,330.4 883.0,324.8 883.5,319.2 884.0,313.7 884.5,308.3 885.0,303.0 885.5,297.8 886.0,292.7 886.5,287.7 887.0,282.9 887.5,278.2 888.0,273.6 888.5,269.2 889.0,264.9 889.5,260.8 890.0,256.8 890.5,253.1 891.0,249.5 891.5,246.1 892.0,242.9 892.5,239.9 893.0,237.1 893.5,234.6 894.0,232.2 894.5,230.1 895.0,228.1 895.5,226.4 896.0,225.0 896.5,223.7 897.0,222.7 897.5,221.9 898.0,221.4 898.5,221.1 899.0,221.0 899.5,221.2 900.0,221.6 900.5,222.2 901.0,223.1 901.5,224.2 902.0,225.5 902.5,227.1 903.0,228.9 903.5,230.9 904.0,233.1 904.5,235.6 905.0,238.2 905.5,241.1 906.0,244.2 906.5,247.5 907.0,250.9 907.5,254.6 908.0,258.4 908.5,262.4 909.0,266.6 909.5,270.9 910.0,275.4 910.5,280.0 911.0,284.8 911.5,289.7 912.0,294.7 912.5,299.9 913.0,305.1 913.5,310.5 914.0,315.9 914.5,321.4 915.0,327.0 915.5,332.6 916.0,338.3 916.5,344.1 917.0,349.8 917.5,355.6 918.0,361.4 918.5,367.2 919.0,373.0 919.5,378.8 920.0,384.6 920.5,390.3 921.0,396.0 921.5,401.6 922.0,407.1 922.5,412.6 923.0,418.0 923.5,423.3 924.0,428.6 924.5,433.7 925.0,438.7 925.5,443.5 926.0,448.3 926.5,452.9 927.0,457.3 927.5,461.6 928.0,465.7 928.5,469.7 929.0,473.5 929.5,477.1 930.0,480.5 930.5,483.7 931.0,486.7 931.5,489.5 932.0,492.1 932.5,494.5 933.0,496.7 933.5,498.6 934.0,500.4 934.5,501.9 935.0,503.1 935.5,504.2 936.0,505.0 936.5,505.6 937.0,505.9 937.5,506.0 938.0,505.9 938.5,505.5 939.0,504.9 939.5,504.0 940.0,503.0 940.5,501.7 941.0,500.1 941.5,498.4 942.0,496.4 942.5,494.2 943.0,491.7 943.5,489.1 944.0,486.2 944.5,483.2 945.0,479.9 945.5,476.5 946.0,472.9 946.5,469.1 947.0,465.1 947.5,460.9 948.0,456.6 948.5,452.1 949.0,447.5 949.5,442.8 950.0,437.9 950.5,432.9 951.0,427.7 951.5,422.5 952.0,417.2 952.5,411.8 953.0,406.3 953.5,400.7 954.0,395.0 954.5,389.4 955.0,383.6 955.5,377.9 956.0,372.1 956.5,366.3 957.0,360.5 957.5,354.7 958.0,348.9 958.5,343.1 959.0,337.4 959.5,331.7 960.0,326.1 960.5,320.5 961.0,315.0 961.5,309.6 962.0,304.3 962.5,299.1 963.0,293.9 963.5,288.9 964.0,284.0 964.5,279.3 965.0,274.7 965.5,270.2 966.0,265.9 966.5,261.8 967.0,257.8 967.5,254.0 968.0,250.4 968.5,246.9 969.0,243.7 969.5,240.6 970.0,237.8 970.5,235.2 971.0,232.8 971.5,230.6 972.0,228.6 972.5,226.8 973.0,225.3 973.5,224.0 974.0,222.9 974.5,222.1 975.0,221.5 975.5,221.1 976.0,221.0 976.5,221.1 977.0,221.5 977.5,222.0 978.0,222.9 978.5,223.9 979.0,225.2 979.5,226.7 980.0,228.4 980.5,230.4 981.0,232.6 981.5,235.0 982.0,237.6 982.5,240.4 983.0,243.4 983.5,246.7 984.0,250.1 984.5,253.7 985.0,257.5 985.5,261.4 986.0,265.6 986.5,269.9 987.0,274.3 987.5,278.9 988.0,283.7 988.5,288.5 989.0,293.5 989.5,298.6 990.0,303.9 990.5,309.2 991.0,314.6 991.5,320.1 992.0,325.6 992.5,331.3 993.0,337.0 993.5,342.7 994.0,348.4 994.5,354.2 995.0,360.0 995.5,365.8 996.0,371.6 996.5,377.4 997.0,383.2 997.5,388.9 998.0,394.6 998.5,400.2 999.0,405.8 999.5,411.3 1000.0,416.7 1000.5,422.1 1001.0,427.3 1001.5,432.5 1002.0,437.5 1002.5,442.4 1003.0,447.1 1003.5,451.8 1004.0,456.3 1004.5,460.6 1005.0,464.8 1005.5,468.8 1006.0,472.6 1006.5,476.2 1007.0,479.7 1007.5,482.9 1008.0,486.0 1008.5,488.9 1009.0,491.5 1009.5,494.0 1010.0,496.2 1010.5,498.2 1011.0,500.0 1011.5,501.5 1012.0,502.9 1012.5,504.0 1013.0,504.8 1013.5,505.4 1014.0,505.8 1014.5,506.0 1015.0,505.9 1015.5,505.6 1016.0,505.0 1016.5,504.3 1017.0,503.2 1017.5,502.0 1018.0,500.5 1018.5,498.8 1019.0,496.9 1019.5,494.7 1020.0,492.3 1020.5,489.7 1021.0,486.9 1021.5,483.9 1022.0,480.7 1022.5,477.3 1023.0,473.8 1023.5,470.0 1024.0,466.1 1024.5,461.9 1025.0,457.7 1025.5,453.2 1026.0,448.6 1026.5,443.9 1027.0,439.1 1027.5,434.1 1028.0,429.0 1028.5,423.8 1029.0,418.5 1029.5,413.1 1030.0,407.6 1030.5,402.0 1031.0,396.4 1031.5,390.7 1032.0,385.0 1032.5,379.3 1033.0,373.5 1033.5,367.7 1034.0,361.9 1034.5,356.1 1035.0,350.3 1035.5,344.5 1036.0,338.8 1036.5,333.1 1037.0,327.4 1037.5,321.9 1038.0,316.3 1038.5,310.9 1039.0,305.6 1039.5,300.3 1040.0,295.2 1040.5,290.1 1041.0,285.2 1041.5,280.4 1042.0,275.8 1042.5,271.3 1043.0,266.9 1043.5,262.7 1044.0,258.7 1044.5,254.9 1045.0,251.2 1045.5,247.7 1046.0,244.4 1046.5,241.3 1047.0,238.5 1047.5,235.8 1048.0,233.3 1048.5,231.1 1049.0,229.0 1049.5,227.2 1050.0,225.6 1050.5,224.3 1051.0,223.2 1051.5,222.3 1052.0,221.6 1052.5,221.2 1053.0,221.0 1053.5,221.1 1054.0,221.3 1054.5,221.9 1055.0,222.6 1055.5,223.6 1056.0,224.9 1056.5,226.3 1057.0,228.0 1057.5,229.9 1058.0,232.0 1058.5,234.4 1059.0,236.9 1059.5,239.7 1060.0,242.7 1060.5,245.9 1061.0,249.2 1061.5,252.8 1062.0,256.5 1062.5,260.5 1063.0,264.6 1063.5,268.8 1064.0,273.2 1064.5,277.8 1065.0,282.5 1065.5,287.3 1066.0,292.3 1066.5,297.4 1067.0,302.6 1067.5,307.9 1068.0,313.3 1068.5,318.8 1069.0,324.3 1069.5,329.9 1070.0,335.6 1070.5,341.3 1071.0,347.1 1071.5,352.8 1072.0,358.6 1072.5,364.4 1073.0,370.2 1073.5,376.0 1074.0,381.8 1074.5,387.5 1075.0,393.2 1075.5,398.9 1076.0,404.5 1076.5,410.0 1077.0,415.4 1077.5,420.8 1078.0,426.1 1078.5,431.2 1079.0,436.3 1079.5,441.2 1080.0,446.0 1080.5,450.7 1081.0,455.2 1081.5,459.6 1082.0,463.8 1082.5,467.8 1083.0,471.7 1083.5,475.4 1084.0,478.9 1084.5,482.2 1085.0,485.3 1085.5,488.2 1086.0,490.9 1086.5,493.4 1087.0,495.7 1087.5,497.7 1088.0,499.6 1088.5,501.2 1089.0,502.6 1089.5,503.7 1090.0,504.6 1090.5,505.3 1091.0,505.8 1091.5,506.0 1092.0,506.0 1092.5,505.7 1093.0,505.2 1093.5,504.5 1094.0,503.5 1094.5,502.3 1095.0,500.9 1095.5,499.2 1096.0,497.3 1096.5,495.2 1097.0,492.9 1097.5,490.4 1098.0,487.6 1098.5,484.7 1099.0,481.5 1099.5,478.2 1100.0,474.6 1100.5,470.9 1101.0,467.0 1101.5,462.9 1102.0,458.7 1102.5,454.3 1103.0,449.8 1103.5,445.1 1104.0,440.2 1104.5,435.3 1105.0,430.2 1105.5,425.0 1106.0,419.7 1106.5,414.4 1107.0,408.9 1107.5,403.4 1108.0,397.8 1108.5,392.1 1109.0,386.4 1109.5,380.6 1110.0,374.9 1110.5,369.1 1111.0,363.3 1111.5,357.5 1112.0,351.7 1112.5,345.9 1113.0,340.2 1113.5,334.4 1114.0,328.8 1114.5,323.2 1115.0,317.7 1115.5,312.2 1116.0,306.8 1116.5,301.6 1117.0,296.4 1117.5,291.3 1118.0,286.4 1118.5,281.6 1119.0,276.9 1119.5,272.3 1120.0,268.0 1120.5,263.7 1121.0,259.7 1121.5,255.8 1122.0,252.1 1122.5,248.5 1123.0,245.2 1123.5,242.1 1124.0,239.1 1124.5,236.4 1125.0,233.9 1125.5,231.6 1126.0,229.5 1126.5,227.6 1127.0,226.0 1127.5,224.6 1128.0,223.4 1128.5,222.5 1129.0,221.8 1129.5,221.3 1130.0,221.0 1130.5,221.0 1131.0,221.3 1131.5,221.7 1132.0,222.4 1132.5,223.4 1133.0,224.5 1133.5,225.9 1134.0,227.6 1134.5,229.4 1135.0,231.5 1135.5,233.8 1136.0,236.3 1136.5,239.0 1137.0,242.0 1137.5,245.1 1138.0,248.4 1138.5,251.9 1139.0,255.6 1139.5,259.5 1140.0,263.6 1140.5,267.8 1141.0,272.2 1141.5,276.7 1142.0,281.4 1142.5,286.2 1143.0,291.1 1143.5,296.2 1144.0,301.3 1144.5,306.6 1145.0,312.0 1145.5,317.4 1146.0,323.0 1146.5,328.6 1147.0,334.2 1147.5,339.9 1148.0,345.7 1148.5,351.4 1149.0,357.2 1149.5,363.0 1150.0,368.8 1150.5,374.6 1151.0,380.4 1151.5,386.2 1152.0,391.9 1152.5,397.5 1153.0,403.1 1153.5,408.7 1154.0,414.1 1154.5,419.5 1155.0,424.8 1155.5,430.0 1156.0,435.1 1156.5,440.0 1157.0,444.9 1157.5,449.6 1158.0,454.1 1158.5,458.5 1159.0,462.8 1159.5,466.9 1160.0,470.8 1160.5,474.5 1161.0,478.0 1161.5,481.4 1162.0,484.6 1162.5,487.5 1163.0,490.3 1163.5,492.8 1164.0,495.2 1164.5,497.3 1165.0,499.2 1165.5,500.8 1166.0,502.3 1166.5,503.5 1167.0,504.4 1167.5,505.2 1168.0,505.7 1168.5,506.0 1169.0,506.0 1169.5,505.8 1170.0,505.3 1170.5,504.7 1171.0,503.8 1171.5,502.6 1172.0,501.2 1172.5,499.6 1173.0,497.8 1173.5,495.8 1174.0,493.5 1174.5,491.0 1175.0,488.3 1175.5,485.4 1176.0,482.3 1176.5,479.0 1177.0,475.5 1177.5,471.8 1178.0,468.0 1178.5,463.9 1179.0,459.7 1179.5,455.4 1180.0,450.9 1180.5,446.2 1181.0,441.4 1181.5,436.5 1182.0,431.4 1182.5,426.3 1183.0,421.0 1183.5,415.7 1184.0,410.2 1184.5,404.7 1185.0,399.1 1185.5,393.5 1186.0,387.8 1186.5,382.0 1187.0,376.3 1187.5,370.5 1188.0,364.7 1188.5,358.9 1189.0,353.1 1189.5,347.3 1190.0,341.5 1190.5,335.8 1191.0,330.1 1191.5,324.5 1192.0,319.0 1192.5,313.5 1193.0,308.1 1193.5,302.8 1194.0,297.6 1194.5,292.5 1195.0,287.5 1195.5,282.7 1196.0,278.0 1196.5,273.4 1197.0,269.0 1197.5,264.7 1198.0,260.6 1198.5,256.7 1199.0,252.9 1199.5,249.4 1200.0,246.0 1200.5,242.8 1201.0,239.8 1201.5,237.0 1202.0,234.5 1202.5,232.1 1203.0,230.0 1203.5,228.1 1204.0,226.4 1204.5,224.9 1205.0,223.7 1205.5,222.7 1206.0,221.9 1206.5,221.4 1207.0,221.1 1207.5,221.0 1208.0,221.2 1208.5,221.6 1209.0,222.2 1209.5,223.1 1210.0,224.2 1210.5,225.6 1211.0,227.2 1211.5,229.0 1212.0,231.0 1212.5,233.2 1213.0,235.7 1213.5,238.3 1214.0,241.2 1214.5,244.3 1215.0,247.6 1215.5,251.1 1216.0,254.7 1216.5,258.6 1217.0,262.6 1217.5,266.8 1218.0,271.1 1218.5,275.6 1219.0,280.2 1219.5,285.0 1220.0,289.9 1220.5,294.9 1221.0,300.1 1221.5,305.3 1222.0,310.7 1222.5,316.1 1223.0,321.6 1223.5,327.2 1224.0,332.9 1224.5,338.6 1225.0,344.3 1225.5,350.1 1226.0,355.8 1226.5,361.6 1227.0,367.4 1227.5,373.2 1228.0,379.0 1228.5,384.8 1229.0,390.5 1229.5,396.2 1230.0,401.8 1230.5,407.4 1231.0,412.8 1231.5,418.2 1232.0,423.6 1232.5,428.8 1233.0,433.9 1233.5,438.9 1234.0,443.7 1234.5,448.5 1235.0,453.0 1235.5,457.5 1236.0,461.8 1236.5,465.9 1237.0,469.8 1237.5,473.6 1238.0,477.2 1238.5,480.6 1239.0,483.8 1239.5,486.8 1240.0,489.6 1240.5,492.2 1241.0,494.6 1241.5,496.8 1242.0,498.7 1242.5,500.4 1243.0,501.9 1243.5,503.2 1244.0,504.2 1244.5,505.0 1245.0,505.6 1245.5,505.9 1246.0,506.0 1246.5,505.9 1247.0,505.5 1247.5,504.9 1248.0,504.0 1248.5,502.9 1249.0,501.6 1249.5,500.0 1250.0,498.3 1250.5,496.3 1251.0,494.1 1251.5,491.6 1252.0,489.0 1252.5,486.1 1253.0,483.1 1253.5,479.8 1254.0,476.4 1254.5,472.7 1255.0,468.9 1255.5,464.9 1256.0,460.8 1256.5,456.4 1257.0,452.0 1257.5,447.3 1258.0,442.6 1258.5,437.7 1259.0,432.7 1259.5,427.5 1260.0,422.3 1260.5,417.0 1261.0,411.5 1261.5,406.0 1262.0,400.5 1262.5,394.8 1263.0,389.1 1263.5,383.4 1264.0,377.6 1264.5,371.9 1265.0,366.1 1265.5,360.2 1266.0,354.5 1266.5,348.7 1267.0,342.9 1267.5,337.2 1268.0,331.5 1268.5,325.9 1269.0,320.3 1269.5,314.8 1270.0,309.4 1270.5,304.1 1271.0,298.8 1271.5,293.7 1272.0,288.7 1272.5,283.8 1273.0,279.1 1273.5,274.5 1274.0,270.0 1274.5,265.7 1275.0,261.6 1275.5,257.6 1276.0,253.8 1276.5,250.2 1277.0,246.8 1277.5,243.6 1278.0,240.5 1278.5,237.7 1279.0,235.1 1279.5,232.7 1280.0,230.5 1280.5,228.5 1281.0,226.8 1281.5,225.2 1282.0,223.9 1282.5,222.9 1283.0,222.1 1283.5,221.5 1284.0,221.1 1284.5,221.0 1285.0,221.1 1285.5,221.5 1286.0,222.1 1286.5,222.9 1287.0,223.9 1287.5,225.2 1288.0,226.8 1288.5,228.5 1289.0,230.5 1289.5,232.7 1290.0,235.1 1290.5,237.7 1291.0,240.5 1291.5,243.6 1292.0,246.8 1292.5,250.2 1293.0,253.8 1293.5,257.6 1294.0,261.6 1294.5,265.7 1295.0,270.0 1295.5,274.5 1296.0,279.1 1296.5,283.8 1297.0,288.7 1297.5,293.7 1298.0,298.8 1298.5,304.1 1299.0,309.4 1299.5,314.8 1300.0,320.3 1300.5,325.9 1301.0,331.5 1301.5,337.2 1302.0,342.9 1302.5,348.7 1303.0,354.5 1303.5,360.2 1304.0,366.1 1304.5,371.9 1305.0,377.6 1305.5,383.4 1306.0,389.1 1306.5,394.8 1307.0,400.5 1307.5,406.0 1308.0,411.5 1308.5,417.0 1309.0,422.3 1309.5,427.5 1310.0,432.7 1310.5,437.7 1311.0,442.6 1311.5,447.3 1312.0,452.0 1312.5,456.4 1313.0,460.8 1313.5,464.9 1314.0,468.9 1314.5,472.7 1315.0,476.4 1315.5,479.8 1316.0,483.1 1316.5,486.1 1317.0,489.0 1317.5,491.6 1318.0,494.1 1318.5,496.3 1319.0,498.3 1319.5,500.0 1320.0,501.6 1320.5,502.9 1321.0,504.0 1321.5,504.9 1322.0,505.5 1322.5,505.9 1323.0,506.0 1323.5,505.9 1324.0,505.6 1324.5,505.0 1325.0,504.2 1325.5,503.2 1326.0,501.9 1326.5,500.4 1327.0,498.7 1327.5,496.8 1328.0,494.6 1328.5,492.2 1329.0,489.6 1329.5,486.8 1330.0,483.8 1330.5,480.6 1331.0,477.2 1331.5,473.6 1332.0,469.8 1332.5,465.9 1333.0,461.8 1333.5,457.5 1334.0,453.0 1334.5,448.5 1335.0,443.7 1335.5,438.9 1336.0,433.9 1336.5,428.8 1337.0,423.6 1337.5,418.2 1338.0,412.8 1338.5,407.4 1339.0,401.8 1339.5,396.2 1340.0,390.5 1340.5,384.8 1341.0,379.0 1341.5,373.2 1342.0,367.4 1342.5,361.6 1343.0,355.8 1343.5,350.1 1344.0,344.3 1344.5,338.6 1345.0,332.9 1345.5,327.2 1346.0,321.6 1346.5,316.1 1347.0,310.7 1347.5,305.3 1348.0,300.1 1348.5,294.9 1349.0,289.9 1349.5,285.0 1350.0,280.2 1350.5,275.6 1351.0,271.1 1351.5,266.8 1352.0,262.6 1352.5,258.6 1353.0,254.7 1353.5,251.1 1354.0,247.6 1354.5,244.3 1355.0,241.2 1355.5,238.3 1356.0,235.7 1356.5,233.2 1357.0,231.0 1357.5,229.0 1358.0,227.2 1358.5,225.6 1359.0,224.2 1359.5,223.1 1360.0,222.2 1360.5,221.6 1361.0,221.2 1361.5,221.0 1362.0,221.1 1362.5,221.4 1363.0,221.9 1363.5,222.7 1364.0,223.7 1364.5,224.9 1365.0,226.4 1365.5,228.1 1366.0,230.0 1366.5,232.1 1367.0,234.5 1367.5,237.0 1368.0,239.8 1368.5,242.8 1369.0,246.0 1369.5,249.4 1370.0,252.9 1370.5,256.7 1371.0,260.6 1371.5,264.7 1372.0,269.0 1372.5,273.4 1373.0,278.0 1373.5,282.7 1374.0,287.5 1374.5,292.5 1375.0,297.6 1375.5,302.8 1376.0,308.1 1376.5,313.5 1377.0,319.0 1377.5,324.5 1378.0,330.1 1378.5,335.8 1379.0,341.5 1379.5,347.3 1380.0,353.1 1380.5,358.9 1381.0,364.7 1381.5,370.5 1382.0,376.3 1382.5,382.0 1383.0,387.8 1383.5,393.5 1384.0,399.1 1384.5,404.7 1385.0,410.2 1385.5,415.7 1386.0,421.0 1386.5,426.3 1387.0,431.4 1387.5,436.5 1388.0,441.4 1388.5,446.2 1389.0,450.9 1389.5,455.4 1390.0,459.7 1390.5,463.9 1391.0,468.0 1391.5,471.8 1392.0,475.5 1392.5,479.0 1393.0,482.3 1393.5,485.4 1394.0,488.3 1394.5,491.0 1395.0,493.5 1395.5,495.8 1396.0,497.8 1396.5,499.6 1397.0,501.2 1397.5,502.6 1398.0,503.8 1398.5,504.7 1399.0,505.3 1399.5,505.8 1400.0,506.0 1400.5,506.0 1401.0,505.7 1401.5,505.2 1402.0,504.4 1402.5,503.5 1403.0,502.3 1403.5,500.8 1404.0,499.2 1404.5,497.3 1405.0,495.2 1405.5,492.8 1406.0,490.3 1406.5,487.5 1407.0,484.6 1407.5,481.4 1408.0,478.0 1408.5,474.5 1409.0,470.8 1409.5,466.9 1410.0,462.8 1410.5,458.5 1411.0,454.1 1411.5,449.6 1412.0,444.9 1412.5,440.0 1413.0,435.1 1413.5,430.0 1414.0,424.8 1414.5,419.5 1415.0,414.1 1415.5,408.7 1416.0,403.1 1416.5,397.5 1417.0,391.9 1417.5,386.2 1418.0,380.4 1418.5,374.6 1419.0,368.8 1419.5,363.0 1420.0,357.2 1420.5,351.4 1421.0,345.7 1421.5,339.9 1422.0,334.2 1422.5,328.6 1423.0,323.0 1423.5,317.4 1424.0,312.0 1424.5,306.6 1425.0,301.3 1425.5,296.2 1426.0,291.1 1426.5,286.2 1427.0,281.4 1427.5,276.7 1428.0,272.2 1428.5,267.8 1429.0,263.6 1429.5,259.5 1430.0,255.6 1430.5,251.9 1431.0,248.4 1431.5,245.1 1432.0,242.0 1432.5,239.0 1433.0,236.3 1433.5,233.8 1434.0,231.5 1434.5,229.4 1435.0,227.6 1435.5,225.9 1436.0,224.5 1436.5,223.4 1437.0,222.4 1437.5,221.7 1438.0,221.3 1438.5,221.0 1439.0,221.0 1439.5,221.3 1440.0,221.8 1440.5,222.5 1441.0,223.4 1441.5,224.6 1442.0,226.0 1442.5,227.6 1443.0,229.5 1443.5,231.6 1444.0,233.9 1444.5,236.4 1445.0,239.1 1445.5,242.1 1446.0,245.2 1446.5,248.5 1447.0,252.1 1447.5,255.8 1448.0,259.7 1448.5,263.7 1449.0,268.0 1449.5,272.3 1450.0,276.9 1450.5,281.6 1451.0,286.4 1451.5,291.3 1452.0,296.4 1452.5,301.6 1453.0,306.8 1453.5,312.2 1454.0,317.7 1454.5,323.2 1455.0,328.8 1455.5,334.4 1456.0,340.2 1456.5,345.9 1457.0,351.7 1457.5,357.5 1458.0,363.3 1458.5,369.1 1459.0,374.9 1459.5,380.6 1460.0,386.4 1460.5,392.1 1461.0,397.8 1461.5,403.4 1462.0,408.9 1462.5,414.4 1463.0,419.7 1463.5,425.0 1464.0,430.2 1464.5,435.3 1465.0,440.2 1465.5,445.1 1466.0,449.8 1466.5,454.3 1467.0,458.7 1467.5,462.9 1468.0,467.0 1468.5,470.9 1469.0,474.6 1469.5,478.2 1470.0,481.5 1470.5,484.7 1471.0,487.6 1471.5,490.4 1472.0,492.9 1472.5,495.2 1473.0,497.3 1473.5,499.2 1474.0,500.9 1474.5,502.3 1475.0,503.5 1475.5,504.5 1476.0,505.2 1476.5,505.7 1477.0,506.0 1477.5,506.0 1478.0,505.8 1478.5,505.3 1479.0,504.6 1479.5,503.7 1480.0,502.6 1480.5,501.2 1481.0,499.6 1481.5,497.7 1482.0,495.7 1482.5,493.4 1483.0,490.9 1483.5,488.2 1484.0,485.3 1484.5,482.2 1485.0,478.9 1485.5,475.4 1486.0,471.7 1486.5,467.8 1487.0,463.8 1487.5,459.6 1488.0,455.2 1488.5,450.7 1489.0,446.0 1489.5,441.2 1490.0,436.3 1490.5,431.2 1491.0,426.1 1491.5,420.8 1492.0,415.4 1492.5,410.0 1493.0,404.5 1493.5,398.9 1494.0,393.2 1494.5,387.5 1495.0,381.8 1495.5,376.0 1496.0,370.2 1496.5,364.4 1497.0,358.6 1497.5,352.8 1498.0,347.1 1498.5,341.3 1499.0,335.6 1499.5,329.9 1500.0,324.3 1500.5,318.8 1501.0,313.3 1501.5,307.9 1502.0,302.6 1502.5,297.4 1503.0,292.3 1503.5,287.3 1504.0,282.5 1504.5,277.8 1505.0,273.2 1505.5,268.8 1506.0,264.6 1506.5,260.5 1507.0,256.5 1507.5,252.8 1508.0,249.2 1508.5,245.9 1509.0,242.7 1509.5,239.7 1510.0,236.9 1510.5,234.4 1511.0,232.0 1511.5,229.9 1512.0,228.0 1512.5,226.3 1513.0,224.9 1513.5,223.6 1514.0,222.6 1514.5,221.9 1515.0,221.3 1515.5,221.1 1516.0,221.0 1516.5,221.2 1517.0,221.6 1517.5,222.3 1518.0,223.2 1518.5,224.3 1519.0,225.6 1519.5,227.2 1520.0,229.0 1520.5,231.1 1521.0,233.3 1521.5,235.8 1522.0,238.5 1522.5,241.3 1523.0,244.4 1523.5,247.7 1524.0,251.2 1524.5,254.9 1525.0,258.7 1525.5,262.7 1526.0,266.9 1526.5,271.3 1527.0,275.8 1527.5,280.4 1528.0,285.2 1528.5,290.1 1529.0,295.2 1529.5,300.3 1530.0,305.6 1530.5,310.9 1531.0,316.3 1531.5,321.9 1532.0,327.4 1532.5,333.1 1533.0,338.8 1533.5,344.5 1534.0,350.3 1534.5,356.1 1535.0,361.9 1535.5,367.7 1536.0,373.5 1536.5,379.3 1537.0,385.0 1537.5,390.7 1538.0,396.4 1538.5,402.0 1539.0,407.6 1539.5,413.1 1540.0,418.5 1540.5,423.8 1541.0,429.0 1541.5,434.1 1542.0,439.1 1542.5,443.9 1543.0,448.6 1543.5,453.2 1544.0,457.7 1544.5,461.9 1545.0,466.1 1545.5,470.0 1546.0,473.8 1546.5,477.3 1547.0,480.7 1547.5,483.9 1548.0,486.9 1548.5,489.7 1549.0,492.3 1549.5,494.7 1550.0,496.9 1550.5,498.8 1551.0,500.5 1551.5,502.0 1552.0,503.2 1552.5,504.3 1553.0,505.0 1553.5,505.6 1554.0,505.9 1554.5,506.0 1555.0,505.8 1555.5,505.4 1556.0,504.8 1556.5,504.0 1557.0,502.9 1557.5,501.5 1558.0,500.0 1558.5,498.2 1559.0,496.2 1559.5,494.0 1560.0,491.5 1560.5,488.9 1561.0,486.0 1561.5,482.9 1562.0,479.7 1562.5,476.2 1563.0,472.6 1563.5,468.8 1564.0,464.8 1564.5,460.6 1565.0,456.3 1565.5,451.8 1566.0,447.1 1566.5,442.4 1567.0,437.5 1567.5,432.5 1568.0,427.3 1568.5,422.1 1569.0,416.7 1569.5,411.3 1570.0,405.8 1570.5,400.2 1571.0,394.6 1571.5,388.9 1572.0,383.2 1572.5,377.4 1573.0,371.6 1573.5,365.8 1574.0,360.0 1574.5,354.2 1575.0,348.4 1575.5,342.7 1576.0,337.0 1576.5,331.3 1577.0,325.6 1577.5,320.1 1578.0,314.6 1578.5,309.2 1579.0,303.9 1579.5,298.6 1580.0,293.5 1580.5,288.5 1581.0,283.7 1581.5,278.9 1582.0,274.3 1582.5,269.9 1583.0,265.6 1583.5,261.4 1584.0,257.5 1584.5,253.7 1585.0,250.1 1585.5,246.7 1586.0,243.4 1586.5,240.4 1587.0,237.6 1587.5,235.0 1588.0,232.6 1588.5,230.4 1589.0,228.4 1589.5,226.7 1590.0,225.2 1590.5,223.9 1591.0,222.9 1591.5,222.0 1592.0,221.5 1592.5,221.1 1593.0,221.0 1593.5,221.1 1594.0,221.5 1594.5,222.1 1595.0,222.9 1595.5,224.0 1596.0,225.3 1596.5,226.8 1597.0,228.6 1597.5,230.6 1598.0,232.8 1598.5,235.2 1599.0,237.8 1599.5,240.6 1600.0,243.7 1600.5,246.9 1601.0,250.4 1601.5,254.0 1602.0,257.8 1602.5,261.8 1603.0,265.9 1603.5,270.2 1604.0,274.7 1604.5,279.3 1605.0,284.0 1605.5,288.9 1606.0,293.9 1606.5,299.1 1607.0,304.3 1607.5,309.6 1608.0,315.0 1608.5,320.5 1609.0,326.1 1609.5,331.7 1610.0,337.4 1610.5,343.1 1611.0,348.9 1611.5,354.7 1612.0,360.5 1612.5,366.3 1613.0,372.1 1613.5,377.9 1614.0,383.6 1614.5,389.4 1615.0,395.0 1615.5,400.7 1616.0,406.3 1616.5,411.8 1617.0,417.2" fill="none" stroke="#ffff00" stroke-width="1"/><path d="M130 145.5h21M137.5 141l2.5 4.5-2 4M143.5 141l-2.5 4.5 2 4" stroke="#ffff00" stroke-width="1.2" fill="none"/><g fill="#ffff00"><rect x="1599" y="167" width="5" height="1.2"/><rect x="1607" y="167" width="5" height="1.2"/><rect x="1614" y="167" width="3.5" height="1.2"/><rect x="1599" y="169" width="5" height="1.2"/><rect x="1607" y="169" width="5" height="1.2"/><rect x="1614" y="169" width="3.5" height="1.2"/><rect x="1599" y="171" width="5" height="1.2"/><rect x="1607" y="171" width="5" height="1.2"/><rect x="1614" y="171" width="3.5" height="1.2"/><rect x="1599" y="173" width="3" height="5.5"/><path d="M1603 173h4.5l-1 5.5h-2.5z"/><rect x="1609" y="173" width="2.5" height="5.5"/><rect x="1614" y="173" width="3.3" height="5.5"/></g><text x="76" y="168" font-family="Liberation Sans" font-size="14" font-weight="bold" fill="#ffff00" text-anchor="end">5</text><text x="76" y="208" font-family="Liberation Sans" font-size="14" font-weight="bold" fill="#ffff00" text-anchor="end">4</text><text x="76" y="248" font-family="Liberation Sans" font-size="14" font-weight="bold" fill="#ffff00" text-anchor="end">3</text><text x="76" y="288" font-family="Liberation Sans" font-size="14" font-weight="bold" fill="#ffff00" text-anchor="end">2</text><text x="76" y="328" font-family="Liberation Sans" font-size="14" font-weight="bold" fill="#ffff00" text-anchor="end">1</text><text x="76" y="368" font-family="Liberation Sans" font-size="14" font-weight="bold" fill="#ffff00" text-anchor="end">0</text><text x="76" y="408" font-family="Liberation Sans" font-size="14" font-weight="bold" fill="#ffff00" text-anchor="end">-1</text><text x="76" y="448" font-family="Liberation Sans" font-size="14" font-weight="bold" fill="#ffff00" text-anchor="end">-2</text><text x="76" y="488" font-family="Liberation Sans" font-size="14" font-weight="bold" fill="#ffff00" text-anchor="end">-3</text><text x="76" y="528" font-family="Liberation Sans" font-size="14" font-weight="bold" fill="#ffff00" text-anchor="end">-4</text><text x="76" y="568" font-family="Liberation Sans" font-size="14" font-weight="bold" fill="#ffff00" text-anchor="end">-5</text><text x="78" y="581" font-family="Liberation Sans" font-size="14" font-weight="bold" fill="#ffffff" text-anchor="middle" textLength="43.5" lengthAdjust="spacingAndGlyphs">0.3262</text><text x="232" y="581" font-family="Liberation Sans" font-size="14" font-weight="bold" fill="#ffffff" text-anchor="middle" textLength="43.5" lengthAdjust="spacingAndGlyphs">0.3282</text><text x="386" y="581" font-family="Liberation Sans" font-size="14" font-weight="bold" fill="#ffffff" text-anchor="middle" textLength="43.5" lengthAdjust="spacingAndGlyphs">0.3302</text><text x="540" y="581" font-family="Liberation Sans" font-size="14" font-weight="bold" fill="#ffffff" text-anchor="middle" textLength="43.5" lengthAdjust="spacingAndGlyphs">0.3322</text><text x="694" y="581" font-family="Liberation Sans" font-size="14" font-weight="bold" fill="#ffffff" text-anchor="middle" textLength="43.5" lengthAdjust="spacingAndGlyphs">0.3342</text><text x="848" y="581" font-family="Liberation Sans" font-size="14" font-weight="bold" fill="#ffffff" text-anchor="middle" textLength="43.5" lengthAdjust="spacingAndGlyphs">0.3362</text><text x="1002" y="581" font-family="Liberation Sans" font-size="14" font-weight="bold" fill="#ffffff" text-anchor="middle" textLength="43.5" lengthAdjust="spacingAndGlyphs">0.3382</text><text x="1156" y="581" font-family="Liberation Sans" font-size="14" font-weight="bold" fill="#ffffff" text-anchor="middle" textLength="43.5" lengthAdjust="spacingAndGlyphs">0.3402</text><text x="1310" y="581" font-family="Liberation Sans" font-size="14" font-weight="bold" fill="#ffffff" text-anchor="middle" textLength="43.5" lengthAdjust="spacingAndGlyphs">0.3422</text><text x="1464" y="581" font-family="Liberation Sans" font-size="14" font-weight="bold" fill="#ffffff" text-anchor="middle" textLength="43.5" lengthAdjust="spacingAndGlyphs">0.3442</text><text x="1618" y="581" font-family="Liberation Sans" font-size="14" font-weight="bold" fill="#ffffff" text-anchor="middle" textLength="43.5" lengthAdjust="spacingAndGlyphs">0.3462</text><text x="13" y="594.5" font-family="Liberation Sans" font-size="14" font-weight="bold" fill="#ffffff" text-anchor="start" textLength="95" lengthAdjust="spacingAndGlyphs">+21:48:41:772</text><text x="848" y="594.5" font-family="Liberation Sans" font-size="14" font-weight="bold" fill="#ffffff" text-anchor="middle" textLength="92" lengthAdjust="spacingAndGlyphs">WAVEFORM</text><text x="1628" y="593" font-family="Liberation Sans" font-size="14" font-weight="bold" fill="#ffffff" text-anchor="middle">s</text><text x="43.5" y="144" font-family="Liberation Sans" font-size="14" font-weight="bold" fill="#ffff00" text-anchor="start" textLength="34.5" lengthAdjust="spacingAndGlyphs">A (V)</text><text x="471" y="144" font-family="Liberation Sans" font-size="14" font-weight="bold" fill="#ffff00" text-anchor="start" textLength="58" lengthAdjust="spacingAndGlyphs">A: Max=</text><text x="550" y="144" font-family="Liberation Sans" font-size="14" font-weight="bold" fill="#ffff00" text-anchor="start" textLength="82" lengthAdjust="spacingAndGlyphs">3.545885066</text><text x="652.5" y="144" font-family="Liberation Sans" font-size="14" font-weight="bold" fill="#ffff00" text-anchor="start" textLength="8.0" lengthAdjust="spacingAndGlyphs">V</text><text x="671" y="144" font-family="Liberation Sans" font-size="14" font-weight="bold" fill="#ffff00" text-anchor="start" textLength="33.5" lengthAdjust="spacingAndGlyphs">MIn=</text><text x="721" y="144" font-family="Liberation Sans" font-size="14" font-weight="bold" fill="#ffff00" text-anchor="start" textLength="87.5" lengthAdjust="spacingAndGlyphs">-3.546656474</text><text x="828.5" y="144" font-family="Liberation Sans" font-size="14" font-weight="bold" fill="#ffff00" text-anchor="start" textLength="9.5" lengthAdjust="spacingAndGlyphs">V</text><text x="846.5" y="144" font-family="Liberation Sans" font-size="14" font-weight="bold" fill="#ffff00" text-anchor="start" textLength="46.0" lengthAdjust="spacingAndGlyphs">Mean=</text><text x="980" y="144" font-family="Liberation Sans" font-size="14" font-weight="bold" fill="#ffff00" text-anchor="start" textLength="25" lengthAdjust="spacingAndGlyphs">-0.0</text><text x="1015.5" y="144" font-family="Liberation Sans" font-size="14" font-weight="bold" fill="#ffff00" text-anchor="start" textLength="17.5" lengthAdjust="spacingAndGlyphs">nV</text><text x="1042.5" y="144" font-family="Liberation Sans" font-size="14" font-weight="bold" fill="#ffff00" text-anchor="start" textLength="43.0" lengthAdjust="spacingAndGlyphs">RMS=</text><text x="1105" y="144" font-family="Liberation Sans" font-size="14" font-weight="bold" fill="#ffff00" text-anchor="start" textLength="92" lengthAdjust="spacingAndGlyphs">2.5074141899</text><text x="1212" y="144" font-family="Liberation Sans" font-size="14" font-weight="bold" fill="#ffff00" text-anchor="start" textLength="13" lengthAdjust="spacingAndGlyphs">V</text></svg>
<div class="a" style="left:12px;top:601px;width:1650px;height:19px;background:#f0f0f0;border-top:1px solid #fff;border-bottom:1px solid #fff"></div>
<svg class="a" style="left:16px;top:605px" width="10" height="10" viewBox="0 0 10 10"><path d="M6.5 1.5L3 5l3.5 3.5" stroke="#606060" stroke-width="1.6" fill="none"/></svg>
<svg class="a" style="left:1648px;top:605px" width="10" height="10" viewBox="0 0 10 10"><path d="M3.5 1.5L7 5 3.5 8.5" stroke="#606060" stroke-width="1.6" fill="none"/></svg>
<div class="a" style="left:562px;top:602px;width:16px;height:17px;background:#cdcdcd"></div><div class="a" style="left:96px;top:149px;width:402px;height:254px;background:#fff;border:1px solid #9a9a9a"></div>
<svg class="a" style="left:104px;top:155px" width="17" height="17" viewBox="0 0 17 17"><text x="0" y="6.6" font-family="Liberation Sans" font-weight="bold" font-size="7" textLength="14" lengthAdjust="spacingAndGlyphs"><tspan fill="#0000ff">D</tspan><tspan fill="#ff0000">D</tspan><tspan fill="#00c000">P</tspan></text><path d="M0.5 8.5h15v7h-15zM0.5 12h15M5.5 8.5v7M10.5 8.5v7" fill="none" stroke="#808080"/></svg>
<div class="t" style="left:125px;top:158px;font-size:12px;color:#8c8c8c">A-Harmonic Frequencies, RMS, Phases</div>
<div class="a" style="left:378px;top:163px;width:11px;height:1px;background:#8c8c8c"></div>
<div class="a" style="left:424px;top:158px;width:11px;height:11px;border:1px solid #8c8c8c"></div>
<svg class="a" style="left:469px;top:158px" width="12" height="12" viewBox="0 0 12 12"><path d="M0.5 0.5l11 11M11.5 0.5l-11 11" stroke="#8c8c8c"/></svg>
<div class="a" style="left:97px;top:180px;width:400px;height:222px;background:#000;border-top:2px solid #828282;border-left:2px solid #828282;border-right:2px solid #e8e8e8;border-bottom:2px solid #e8e8e8"></div>
<svg class="a" style="left:99px;top:182px" width="396" height="218" viewBox="99 182 396 218"><rect x="99" y="182" width="44" height="17" fill="#f0f0f0"/><path d="M99.5 198V182.5H142" stroke="#fff" fill="none"/><path d="M99 198.5H142.5V182" stroke="#a0a0a0" fill="none"/><text x="105" y="195" font-family="Liberation Sans" font-size="10.6" fill="#000">Order</text><rect x="143" y="182" width="88" height="17" fill="#f0f0f0"/><path d="M143.5 198V182.5H230" stroke="#fff" fill="none"/><path d="M143 198.5H230.5V182" stroke="#a0a0a0" fill="none"/><text x="149" y="195" font-family="Liberation Sans" font-size="10.6" fill="#000">Freq. (Hz)</text><rect x="231" y="182" width="88" height="17" fill="#f0f0f0"/><path d="M231.5 198V182.5H318" stroke="#fff" fill="none"/><path d="M231 198.5H318.5V182" stroke="#a0a0a0" fill="none"/><text x="237" y="195" font-family="Liberation Sans" font-size="10.6" fill="#000">RMS (dBFS)</text><rect x="319" y="182" width="88" height="17" fill="#f0f0f0"/><path d="M319.5 198V182.5H406" stroke="#fff" fill="none"/><path d="M319 198.5H406.5V182" stroke="#a0a0a0" fill="none"/><text x="325" y="195" font-family="Liberation Sans" font-size="10.6" fill="#000">%</text><rect x="407" y="182" width="88" height="17" fill="#f0f0f0"/><path d="M407.5 198V182.5H494" stroke="#fff" fill="none"/><path d="M407 198.5H494.5V182" stroke="#a0a0a0" fill="none"/><text x="413" y="195" font-family="Liberation Sans" font-size="10.6" fill="#000">Phase (D)</text><line x1="99" y1="215.5" x2="495" y2="215.5" stroke="#fff"/><line x1="99" y1="232.5" x2="495" y2="232.5" stroke="#fff"/><line x1="99" y1="249.5" x2="495" y2="249.5" stroke="#fff"/><line x1="99" y1="266.5" x2="495" y2="266.5" stroke="#fff"/><line x1="99" y1="283.5" x2="495" y2="283.5" stroke="#fff"/><line x1="99" y1="300.5" x2="495" y2="300.5" stroke="#fff"/><line x1="99" y1="317.5" x2="495" y2="317.5" stroke="#fff"/><line x1="99" y1="334.5" x2="495" y2="334.5" stroke="#fff"/><line x1="99" y1="351.5" x2="495" y2="351.5" stroke="#fff"/><line x1="99" y1="368.5" x2="495" y2="368.5" stroke="#fff"/><line x1="99" y1="385.5" x2="495" y2="385.5" stroke="#fff"/><line x1="99" y1="402.5" x2="495" y2="402.5" stroke="#fff"/><line x1="143.5" y1="199" x2="143.5" y2="400" stroke="#fff"/><line x1="231.5" y1="199" x2="231.5" y2="400" stroke="#fff"/><line x1="319.5" y1="199" x2="319.5" y2="400" stroke="#fff"/><line x1="407.5" y1="199" x2="407.5" y2="400" stroke="#fff"/><text x="106" y="212" font-family="Liberation Sans" font-size="10.6" fill="#ffff00" xml:space="preserve">1</text><text x="150" y="212" font-family="Liberation Sans" font-size="10.6" fill="#ffff00" xml:space="preserve">998.88 Hz</text><text x="238" y="212" font-family="Liberation Sans" font-size="10.6" fill="#ffff00" xml:space="preserve">-11.74 dBFS</text><text x="326" y="212" font-family="Liberation Sans" font-size="10.6" fill="#ffff00" xml:space="preserve">100.0000000 ...</text><text x="414" y="212" font-family="Liberation Sans" font-size="10.6" fill="#ffff00" xml:space="preserve">-62.05  D</text><text x="106" y="229" font-family="Liberation Sans" font-size="10.6" fill="#ffff00" xml:space="preserve">2</text><text x="150" y="229" font-family="Liberation Sans" font-size="10.6" fill="#ffff00" xml:space="preserve">1.99776 kHz</text><text x="238" y="229" font-family="Liberation Sans" font-size="10.6" fill="#ffff00" xml:space="preserve">-152.76 dBFS</text><text x="326" y="229" font-family="Liberation Sans" font-size="10.6" fill="#ffff00" xml:space="preserve">0.0000089  %</text><text x="414" y="229" font-family="Liberation Sans" font-size="10.6" fill="#ffff00" xml:space="preserve">56.63  D</text><text x="106" y="246" font-family="Liberation Sans" font-size="10.6" fill="#ffff00" xml:space="preserve">3</text><text x="150" y="246" font-family="Liberation Sans" font-size="10.6" fill="#ffff00" xml:space="preserve">2.99665 kHz</text><text x="238" y="246" font-family="Liberation Sans" font-size="10.6" fill="#ffff00" xml:space="preserve">-155.12 dBFS</text><text x="326" y="246" font-family="Liberation Sans" font-size="10.6" fill="#ffff00" xml:space="preserve">0.0000068  %</text><text x="414" y="246" font-family="Liberation Sans" font-size="10.6" fill="#ffff00" xml:space="preserve">103.27  D</text><text x="106" y="263" font-family="Liberation Sans" font-size="10.6" fill="#ffff00" xml:space="preserve">4</text><text x="150" y="263" font-family="Liberation Sans" font-size="10.6" fill="#ffff00" xml:space="preserve">3.99553 kHz</text><text x="238" y="263" font-family="Liberation Sans" font-size="10.6" fill="#ffff00" xml:space="preserve">-155.67 dBFS</text><text x="326" y="263" font-family="Liberation Sans" font-size="10.6" fill="#ffff00" xml:space="preserve">0.0000064  %</text><text x="414" y="263" font-family="Liberation Sans" font-size="10.6" fill="#ffff00" xml:space="preserve">108.36  D</text><text x="106" y="280" font-family="Liberation Sans" font-size="10.6" fill="#ffff00" xml:space="preserve">5</text><text x="150" y="280" font-family="Liberation Sans" font-size="10.6" fill="#ffff00" xml:space="preserve">4.99441 kHz</text><text x="238" y="280" font-family="Liberation Sans" font-size="10.6" fill="#ffff00" xml:space="preserve">-141.80 dBFS</text><text x="326" y="280" font-family="Liberation Sans" font-size="10.6" fill="#ffff00" xml:space="preserve">0.0000314  %</text><text x="414" y="280" font-family="Liberation Sans" font-size="10.6" fill="#ffff00" xml:space="preserve">63.39  D</text><text x="106" y="297" font-family="Liberation Sans" font-size="10.6" fill="#ffff00" xml:space="preserve">6</text><text x="150" y="297" font-family="Liberation Sans" font-size="10.6" fill="#ffff00" xml:space="preserve">5.99329 kHz</text><text x="238" y="297" font-family="Liberation Sans" font-size="10.6" fill="#ffff00" xml:space="preserve">-153.63 dBFS</text><text x="326" y="297" font-family="Liberation Sans" font-size="10.6" fill="#ffff00" xml:space="preserve">0.0000080  %</text><text x="414" y="297" font-family="Liberation Sans" font-size="10.6" fill="#ffff00" xml:space="preserve">-139.96  D</text><text x="106" y="314" font-family="Liberation Sans" font-size="10.6" fill="#ffff00" xml:space="preserve">7</text><text x="150" y="314" font-family="Liberation Sans" font-size="10.6" fill="#ffff00" xml:space="preserve">6.99217 kHz</text><text x="238" y="314" font-family="Liberation Sans" font-size="10.6" fill="#ffff00" xml:space="preserve">-154.34 dBFS</text><text x="326" y="314" font-family="Liberation Sans" font-size="10.6" fill="#ffff00" xml:space="preserve">0.0000074  %</text><text x="414" y="314" font-family="Liberation Sans" font-size="10.6" fill="#ffff00" xml:space="preserve">-113.31  D</text><text x="106" y="331" font-family="Liberation Sans" font-size="10.6" fill="#ffff00" xml:space="preserve">8</text><text x="150" y="331" font-family="Liberation Sans" font-size="10.6" fill="#ffff00" xml:space="preserve">7.99106 kHz</text><text x="238" y="331" font-family="Liberation Sans" font-size="10.6" fill="#ffff00" xml:space="preserve">-153.99 dBFS</text><text x="326" y="331" font-family="Liberation Sans" font-size="10.6" fill="#ffff00" xml:space="preserve">0.0000077  %</text><text x="414" y="331" font-family="Liberation Sans" font-size="10.6" fill="#ffff00" xml:space="preserve">-162.21  D</text><text x="106" y="348" font-family="Liberation Sans" font-size="10.6" fill="#ffff00" xml:space="preserve">9</text><text x="150" y="348" font-family="Liberation Sans" font-size="10.6" fill="#ffff00" xml:space="preserve">8.98994 kHz</text><text x="238" y="348" font-family="Liberation Sans" font-size="10.6" fill="#ffff00" xml:space="preserve">-147.77 dBFS</text><text x="326" y="348" font-family="Liberation Sans" font-size="10.6" fill="#ffff00" xml:space="preserve">0.0000158  %</text><text x="414" y="348" font-family="Liberation Sans" font-size="10.6" fill="#ffff00" xml:space="preserve">157.63  D</text><text x="106" y="365" font-family="Liberation Sans" font-size="10.6" fill="#ffff00" xml:space="preserve">10</text><text x="150" y="365" font-family="Liberation Sans" font-size="10.6" fill="#ffff00" xml:space="preserve">9.98882 kHz</text><text x="238" y="365" font-family="Liberation Sans" font-size="10.6" fill="#ffff00" xml:space="preserve">-153.26 dBFS</text><text x="326" y="365" font-family="Liberation Sans" font-size="10.6" fill="#ffff00" xml:space="preserve">0.0000084  %</text><text x="414" y="365" font-family="Liberation Sans" font-size="10.6" fill="#ffff00" xml:space="preserve">164.67  D</text></svg><div class="a" style="left:1px;top:628px;width:1671px;height:529px;background:#b9d1ea;border:1px solid #3a3a3a;border-radius:6px 6px 0 0;box-shadow:inset 1px 1px 0 #fff, inset -1px -1px 0 #3cc4ee"></div>
<div class="a" style="left:2px;top:629px;width:1669px;height:31px;background:linear-gradient(#99b4d1 0%, #a9c3dd 40%, #b9d1ea 100%);border-radius:5px 5px 0 0;border-top:1px solid rgba(255,255,255,0.6)"></div>
<svg class="a" style="left:12px;top:639px" width="16" height="16" viewBox="0 0 16 16"><rect width="16" height="16" fill="#0000ff"/><path d="M0 14.5h16M2.5 1v14M5.5 4v11M8.5 7v8M11.5 9v6M14.5 10v5" stroke="#ffff00" stroke-width="1"/></svg>
<div class="t" style="left:32px;top:641px;font-size:12px;color:#000">Spectrum Analyzer</div>
<div class="a" style="left:1562px;top:638px;width:32px;height:18px;background:linear-gradient(#c5d7ec 0%, #b4cbe4 45%, #9ab6d6 50%, #b0c8e2 100%);border:1px solid #4a5a70;border-radius:3px"></div>
<div class="a" style="left:1596px;top:638px;width:32px;height:18px;background:linear-gradient(#c5d7ec 0%, #b4cbe4 45%, #9ab6d6 50%, #b0c8e2 100%);border:1px solid #4a5a70;border-radius:3px"></div>
<div class="a" style="left:1630px;top:638px;width:32px;height:18px;background:linear-gradient(#e8a090 0%, #d8705a 45%, #c43c20 50%, #cc5a40 100%);border:1px solid #5a1818;border-radius:3px"></div>
<div class="a" style="left:1572px;top:647px;width:11px;height:5px;background:#f4f4f4;border:1px solid #3c3c4c;border-radius:1px"></div>
<div class="a" style="left:1606px;top:642px;width:11px;height:9px;background:#f4f4f4;border:1px solid #3c3c4c;border-radius:1px"><div class="a" style="left:2px;top:2px;width:5px;height:3px;border:1px solid #3c3c4c;background:#9ab"></div></div>
<svg class="a" style="left:1640px;top:641px" width="12" height="11" viewBox="0 0 12 11"><path d="M1.5 1.5l9 8M10.5 1.5l-9 8" stroke="#3c3c4c" stroke-width="4" stroke-linecap="round"/><path d="M1.5 1.5l9 8M10.5 1.5l-9 8" stroke="#f4f4f4" stroke-width="2.2" stroke-linecap="round"/></svg>
<div class="a" style="left:10px;top:659px;width:1654px;height:490px;border-top:1px solid #a0a0a0;border-left:1px solid #a0a0a0;border-right:1px solid #fff;border-bottom:1px solid #fff;box-shadow:inset 1px 1px 0 #696969"></div>
<svg class="a" style="left:12px;top:661px" width="1650" height="486" viewBox="12 661 1650 486"><rect x="12" y="661" width="1650" height="486" fill="#000"/><line x1="167.5" y1="694" x2="167.5" y2="1110" stroke="#606060" stroke-dasharray="3 3"/><line x1="229.5" y1="694" x2="229.5" y2="1110" stroke="#606060" stroke-dasharray="3 3"/><line x1="277.5" y1="694" x2="277.5" y2="1110" stroke="#606060" stroke-dasharray="3 3"/><line x1="317.5" y1="694" x2="317.5" y2="1110" stroke="#606060" stroke-dasharray="3 3"/><line x1="351.5" y1="694" x2="351.5" y2="1110" stroke="#606060" stroke-dasharray="3 3"/><line x1="380.5" y1="694" x2="380.5" y2="1110" stroke="#606060" stroke-dasharray="3 3"/><line x1="405.5" y1="694" x2="405.5" y2="1110" stroke="#606060" stroke-dasharray="3 3"/><line x1="428.5" y1="694" x2="428.5" y2="1110" stroke="#606060" stroke-dasharray="3 3"/><line x1="579.5" y1="694" x2="579.5" y2="1110" stroke="#606060" stroke-dasharray="3 3"/><line x1="667.5" y1="694" x2="667.5" y2="1110" stroke="#606060" stroke-dasharray="3 3"/><line x1="729.5" y1="694" x2="729.5" y2="1110" stroke="#606060" stroke-dasharray="3 3"/><line x1="777.5" y1="694" x2="777.5" y2="1110" stroke="#606060" stroke-dasharray="3 3"/><line x1="817.5" y1="694" x2="817.5" y2="1110" stroke="#606060" stroke-dasharray="3 3"/><line x1="851.5" y1="694" x2="851.5" y2="1110" stroke="#606060" stroke-dasharray="3 3"/><line x1="880.5" y1="694" x2="880.5" y2="1110" stroke="#606060" stroke-dasharray="3 3"/><line x1="905.5" y1="694" x2="905.5" y2="1110" stroke="#606060" stroke-dasharray="3 3"/><line x1="928.5" y1="694" x2="928.5" y2="1110" stroke="#606060" stroke-dasharray="3 3"/><line x1="1079.5" y1="694" x2="1079.5" y2="1110" stroke="#606060" stroke-dasharray="3 3"/><line x1="1167.5" y1="694" x2="1167.5" y2="1110" stroke="#606060" stroke-dasharray="3 3"/><line x1="1229.5" y1="694" x2="1229.5" y2="1110" stroke="#606060" stroke-dasharray="3 3"/><line x1="1277.5" y1="694" x2="1277.5" y2="1110" stroke="#606060" stroke-dasharray="3 3"/><line x1="1317.5" y1="694" x2="1317.5" y2="1110" stroke="#606060" stroke-dasharray="3 3"/><line x1="1351.5" y1="694" x2="1351.5" y2="1110" stroke="#606060" stroke-dasharray="3 3"/><line x1="1380.5" y1="694" x2="1380.5" y2="1110" stroke="#606060" stroke-dasharray="3 3"/><line x1="1405.5" y1="694" x2="1405.5" y2="1110" stroke="#606060" stroke-dasharray="3 3"/><line x1="1428.5" y1="694" x2="1428.5" y2="1110" stroke="#606060" stroke-dasharray="3 3"/><line x1="1579.5" y1="694" x2="1579.5" y2="1110" stroke="#606060" stroke-dasharray="3 3"/><line x1="79" y1="734.5" x2="1618" y2="734.5" stroke="#606060" stroke-dasharray="3 3"/><line x1="79" y1="776.5" x2="1618" y2="776.5" stroke="#606060" stroke-dasharray="3 3"/><line x1="79" y1="818.5" x2="1618" y2="818.5" stroke="#606060" stroke-dasharray="3 3"/><line x1="79" y1="859.5" x2="1618" y2="859.5" stroke="#606060" stroke-dasharray="3 3"/><line x1="79" y1="901.5" x2="1618" y2="901.5" stroke="#606060" stroke-dasharray="3 3"/><line x1="79" y1="943.5" x2="1618" y2="943.5" stroke="#606060" stroke-dasharray="3 3"/><line x1="79" y1="984.5" x2="1618" y2="984.5" stroke="#606060" stroke-dasharray="3 3"/><line x1="79" y1="1026.5" x2="1618" y2="1026.5" stroke="#606060" stroke-dasharray="3 3"/><line x1="79" y1="1068.5" x2="1618" y2="1068.5" stroke="#606060" stroke-dasharray="3 3"/><rect x="78.5" y="693.5" width="1540" height="417" fill="none" stroke="#555555"/><line x1="79" y1="967.5" x2="1579" y2="967.5" stroke="#ffff00" stroke-dasharray="3 3"/><polyline points="78.3,1064.6 95.0,1066.0 124.0,1071.7 149.0,1079.0 159.6,1073.0 171.5,1068.0 178.0,1070.0 200.8,1089.6 209.6,1083.0 218.0,1083.0 226.0,1080.6 243.0,1067.0 250.0,1064.4 256.5,1065.4 270.0,1077.5 277.3,1072.3 282.5,1073.0 288.8,1079.0 295.0,1076.5 300.0,1066.0 307.5,1062.3 322.0,1068.5 327.0,1078.5 332.5,1082.7 343.0,1071.7 350.0,1073.0 357.5,1071.0 368.0,1068.0 376.0,1073.0 382.5,1071.0 399.0,1064.0 403.0,1066.0 410.6,1085.4 422.0,1073.0 428.0,1077.0 432.5,1077.0 443.0,1066.7 455.4,1080.6 460.0,1075.6 466.2,1067.2 471.2,1069.4 475.0,1068.5 485.6,1095.0 493.0,1068.0 495.6,1068.8 497.5,1072.2 501.9,1072.5 508.8,1093.0 512.5,1073.0 515.6,1069.8 521.0,1074.4 525.0,1089.4 527.5,1078.8 535.0,1070.2 538.8,1071.2 544.4,1087.5 551.9,1069.8 557.5,1091.2 561.2,1078.0 565.0,1084.4 572.5,1075.6 576.9,1077.5 580.0,1073.0 585.0,1086.2 591.2,1073.8 593.0,1076.9 596.2,1065.6 600.6,1073.8 605.6,1070.0 609.4,1086.9 616.2,1066.2 620.0,1071.9 625.0,1073.8 628.8,1081.2 632.5,1078.1 638.8,1075.6 645.0,1067.2 647.5,1073.0 651.2,1069.4 656.9,1078.8 659.4,1081.2 662.5,1069.4 667.5,1088.8 670.0,1067.5 677.5,1078.0 681.9,1074.4 686.9,1093.8 688.8,1072.5 696.2,1075.0 699.4,1069.4 700.1,1073.1 701.0,1093.7 701.9,1080.7 702.8,1073.8 703.7,1066.5 704.6,1074.8 705.5,1077.1 706.4,1068.3 707.2,1081.1 708.1,1067.6 709.0,1069.6 709.9,1065.8 710.7,1073.4 711.6,1069.6 712.5,1075.1 713.3,1066.7 714.2,1072.8 715.0,1067.8 715.9,1066.9 716.7,1061.2 717.5,1077.2 718.4,1071.5 719.2,1064.8 720.0,1062.7 720.9,1061.1 721.7,1064.1 722.5,1068.0 723.3,1067.1 724.2,1070.8 725.0,1068.4 725.8,1073.8 726.6,1069.6 727.4,1066.0 728.2,1073.6 729.0,1072.2 729.8,1075.5 730.6,1075.5 731.4,1069.2 732.1,1072.5 732.9,1076.7 733.7,1061.5 734.5,1066.6 735.2,1071.6 736.0,1066.7 736.8,1059.8 737.6,1070.7 738.3,1061.3 739.1,1072.0 739.8,1074.7 740.6,1067.4 741.3,1084.5 742.1,1075.8 742.8,1064.9 743.6,1071.8 744.3,1067.3 745.1,1075.8 745.8,1063.4 746.5,1069.1 747.3,1068.8 748.0,1066.9 748.7,1071.2 749.5,1066.5 750.2,1063.1 750.9,1080.6 751.6,1070.7 752.3,1062.0 753.0,1068.7 753.8,1062.7 754.5,1067.8 755.2,1062.3 755.9,1064.5 756.6,1063.1 757.3,1075.8 758.0,1068.2 758.7,1063.6 759.4,1073.5 760.1,1061.7 760.7,1068.4 761.4,1063.5 762.1,1070.6 762.8,1068.2 763.5,1061.5 764.1,1059.1 764.8,1080.6 765.5,1067.6 766.2,1083.3 766.8,1070.1 767.5,1070.7 768.2,1065.8 768.8,1061.8 769.5,1064.9 770.2,1074.1 770.8,1073.2 771.5,1067.1 772.1,1062.2 772.8,1068.5 773.4,1069.0 774.1,1070.7 774.7,1062.9 775.4,1066.1 776.0,1067.4 776.6,1067.9 777.3,1065.6 777.9,1070.1 778.5,1074.8 779.2,1074.3 779.8,1069.7 780.4,1071.3 781.1,1067.1 781.7,1066.9 782.3,1073.1 782.9,1069.9 783.5,1082.6 784.2,1072.1 784.8,1071.0 785.4,1068.8 786.0,1068.0 786.6,1064.4 787.2,1075.9 787.8,1069.1 788.4,1066.1 789.0,1067.5 789.6,1070.2 790.2,1071.3 790.8,1057.3 791.4,1069.4 792.0,1054.2 792.6,1064.7 793.2,1069.9 793.8,1070.4 794.4,1075.0 795.0,1073.9 795.6,1071.1 796.2,1066.9 796.8,1068.6 797.3,1062.2 797.9,1062.9 798.5,1066.1 799.1,1073.9 799.6,1061.3 800.2,1064.4 800.8,1065.3 801.4,1063.3 801.9,1072.3 802.5,1061.2 803.1,1064.2 803.6,1059.6 804.2,1067.3 804.8,1068.9 805.3,1059.1 805.9,1067.8 806.4,1060.7 807.0,1062.2 807.5,1068.5 808.1,1060.8 808.6,1074.7 809.2,1072.7 809.7,1066.7 810.3,1066.4 810.8,1058.4 811.4,1078.4 811.9,1067.1 812.5,1068.9 813.0,1067.1 813.5,1060.3 814.1,1065.5 814.6,1068.4 815.2,1064.5 815.7,1075.4 816.2,1064.0 816.8,1062.1 817.3,1068.1 817.8,1067.5 818.3,1081.0 818.9,1069.2 819.4,1082.3 819.9,1061.1 820.4,1068.7 821.0,1068.8 821.5,1066.1 822.0,1066.5 822.5,1060.3 823.0,1058.9 823.6,1062.2 824.1,1057.4 824.6,1069.0 825.1,1075.8 825.6,1065.7 826.1,1068.5 826.6,1066.5 827.1,1060.2 827.6,1071.9 828.1,1063.0 828.6,1061.8 829.1,1067.3 829.6,1066.0 830.1,1062.3 830.6,1066.8 831.1,1058.7 831.6,1083.3 832.1,1052.8 832.6,1070.5 833.1,1068.0 833.6,1060.7 834.1,1063.8 834.6,1066.2 835.1,1064.5 835.6,1055.8 836.0,1065.8 836.5,1067.7 837.0,1066.0 837.5,1067.7 838.0,1060.0 838.5,1060.5 838.9,1072.1 839.4,1062.8 839.9,1073.7 840.4,1068.8 840.9,1060.0 841.3,1067.4 841.8,1061.6 842.3,1059.0 842.7,1067.2 843.2,1055.3 843.7,1059.8 844.2,1059.4 844.6,1056.7 845.1,1061.0 845.6,1062.7 846.0,1063.7 846.5,1062.3 846.9,1063.8 847.4,1064.9 847.9,1066.6 848.3,1061.7 848.8,1063.1 849.2,1059.3 849.7,1058.1 850.2,1063.8 850.6,1056.0 851.1,1071.0 851.5,1054.2 852.0,1062.5 852.4,1061.6 852.9,1052.9 853.3,1062.2 853.8,1061.1 854.2,1063.5 854.7,1060.2 855.1,1059.3 855.6,1059.7 856.0,1063.3 856.4,1059.9 856.9,1060.5 857.3,1067.2 857.8,1057.3 858.2,1054.4 858.6,1067.5 859.1,1058.6 859.5,1064.8 859.9,1064.2 860.4,1054.8 860.8,1062.2 861.2,1052.5 861.7,1062.6 862.1,1062.0 862.5,1058.0 863.0,1058.7 863.4,1066.5 863.8,1056.2 864.3,1060.6 864.7,1059.8 865.1,1056.1 865.5,1055.7 866.0,1073.1 866.4,1057.6 866.8,1048.6 867.2,1067.7 867.6,1056.5 868.1,1058.2 868.5,1063.7 868.9,1063.5 869.3,1048.5 869.7,1066.9 870.1,1053.3 870.6,1057.1 871.0,1055.4 871.4,1054.9 871.8,1056.0 872.2,1054.7 872.6,1058.3 873.0,1060.4 873.4,1051.5 873.9,1057.5 874.3,1060.6 874.7,1057.8 875.1,1055.1 875.5,1061.1 875.9,1049.7 876.3,1048.5 876.7,1050.7 877.1,1058.5 877.5,1055.3 877.9,1060.9 878.3,1059.4 878.7,1053.3 879.1,1056.9 879.5,1054.9 879.9,1055.5 880.3,1058.1 880.7,1048.1 881.1,1052.7 881.5,1051.0 881.9,1049.6 882.3,1061.7 882.7,1055.4 883.0,1045.6 883.4,1054.2 883.8,1059.0 884.2,1061.7 884.6,1056.4 885.0,1061.1 885.4,1050.1 885.8,1052.7 886.1,1057.3 886.5,1045.4 886.9,1056.8 887.3,1051.0 887.7,1055.0 888.1,1060.2 888.5,1045.8 888.8,1053.7 889.2,1048.2 889.6,1048.7 890.0,1050.7 890.4,1070.8 890.7,1047.8 891.1,1049.7 891.5,1053.4 891.9,1046.4 892.2,1046.0 892.6,1043.7 893.0,1048.1 893.4,1053.0 893.7,1050.5 894.1,1043.3 894.5,1067.8 894.8,1049.8 895.2,1042.5 895.6,1045.3 896.0,1041.6 896.3,1044.6 896.7,1043.5 897.1,1040.5 897.4,1049.6 897.8,1053.4 898.2,1039.4 898.5,1056.5 898.9,1048.8 899.2,1049.1 899.6,1051.4 900.0,1046.5 900.3,1041.3 900.7,1042.5 901.1,1047.0 901.4,1041.8 901.8,1049.2 902.1,1046.9 902.5,1043.6 902.8,1042.4 903.2,1047.1 903.6,1058.3 903.9,1035.4 904.3,1041.0 904.6,1037.6 905.0,1034.2 905.3,1037.3 905.7,1036.0 906.0,1041.6 906.4,1040.7 906.7,1035.6 907.1,1033.8 907.4,1040.0 907.8,1032.9 908.1,1037.6 908.5,1033.4 908.8,1035.5 909.2,1037.9 909.5,1042.5 909.9,1036.0 910.2,1040.6 910.6,1041.2 910.9,1036.1 911.3,1035.1 911.6,1042.9 911.9,1033.9 912.3,1025.6 912.6,1026.8 913.0,1033.6 913.3,1031.3 913.6,1047.0 914.0,1026.7 914.3,1022.5 914.7,1027.1 915.0,1035.2 915.3,1026.9 915.7,1022.5 916.0,1031.8 916.3,1021.9 916.7,1022.7 917.0,1020.1 917.4,1022.7 917.7,1024.0 918.0,1025.5 918.4,1024.0 918.7,1019.1 919.0,1022.0 919.3,1023.0 919.7,1017.6 920.0,1022.7 920.3,1017.7 920.7,1004.1 921.0,1015.3 921.3,1018.1 921.7,1011.4 922.0,1012.6 922.3,1010.6 922.6,1001.8 923.0,1005.7 923.3,1014.6 923.6,1007.0 923.9,1008.7 924.3,999.9 924.6,995.0 924.9,997.3 925.2,998.9 925.5,987.6 925.9,1002.8 926.2,997.1 927.5,990.9 927.5,990.2 927.5,998.8 927.5,990.2 927.8,989.8 928.1,996.2 928.4,989.0 928.7,994.1 929.1,989.9 929.4,995.5 929.7,999.2 930.0,988.9 930.3,985.3 930.6,997.7 930.9,998.3 931.3,996.7 931.6,993.6 931.9,1011.9 932.2,999.6 933.5,1009.1 933.5,999.3 933.5,1010.0 933.5,999.3 933.8,1014.9 934.1,1009.2 934.4,1005.3 934.7,1021.1 935.0,1013.9 935.3,1010.8 935.6,1012.1 935.9,1017.7 936.2,1016.7 937.5,1019.1 937.5,1007.0 937.5,1026.6 937.5,1023.8 937.7,1022.0 938.0,1018.3 938.4,1026.5 938.7,1014.1 939.0,1023.2 939.3,1017.4 940.5,1026.7 940.5,1026.7 940.5,1036.1 940.5,1030.7 940.8,1026.2 941.1,1015.6 941.4,1037.9 941.7,1027.4 942.0,1033.6 942.3,1027.1 943.5,1033.6 943.5,1029.1 943.5,1050.4 943.5,1032.7 943.7,1033.7 944.0,1031.5 944.3,1039.6 944.6,1025.6 944.9,1038.7 945.2,1028.3 946.5,1038.6 946.5,1029.5 946.5,1038.6 946.5,1030.0 946.7,1039.2 947.0,1035.0 947.3,1041.7 948.5,1036.5 948.5,1029.9 948.5,1046.4 948.5,1029.9 948.7,1043.5 949.0,1039.3 949.3,1036.2 950.5,1036.5 950.5,1036.4 950.5,1046.5 950.5,1039.0 950.7,1037.9 951.0,1037.8 951.3,1044.8 952.5,1039.6 952.5,1039.6 952.5,1057.7 952.5,1047.0 952.7,1034.6 953.0,1043.6 953.3,1040.4 954.5,1053.1 954.5,1039.3 954.5,1055.1 954.5,1055.1 954.7,1050.1 955.0,1036.9 955.3,1048.7 956.5,1049.0 956.5,1037.3 956.5,1049.0 956.5,1044.6 957.5,1044.6 957.5,1041.4 957.5,1045.8 957.5,1041.4 957.8,1048.2 958.1,1045.5 958.3,1049.0 959.5,1044.5 959.5,1044.5 959.5,1051.9 959.5,1050.1 959.7,1044.1 960.0,1046.5 960.3,1049.9 961.5,1057.6 961.5,1045.4 961.5,1069.6 961.5,1058.9 962.5,1061.2 962.5,1043.1 962.5,1063.8 962.5,1063.8 962.7,1044.3 963.0,1045.4 963.3,1051.2 964.5,1038.6 964.5,1038.6 964.5,1054.1 964.5,1054.1 965.5,1054.7 965.5,1044.6 965.5,1060.4 965.5,1060.4 966.5,1052.4 966.5,1048.9 966.5,1053.2 966.5,1052.3 966.7,1044.3 967.0,1058.0 967.3,1052.3 968.5,1055.1 968.5,1046.7 968.5,1055.2 968.5,1046.7 969.5,1045.1 969.5,1045.1 969.5,1062.5 969.5,1048.2 970.5,1070.6 970.5,1052.6 970.5,1070.6 970.5,1054.4 971.5,1060.8 971.5,1053.4 971.5,1060.8 971.5,1055.6 971.7,1054.1 972.0,1056.8 972.3,1049.4 973.5,1055.9 973.5,1046.9 973.5,1062.5 973.5,1046.9 974.5,1047.3 974.5,1047.3 974.5,1074.9 974.5,1050.8 975.5,1054.9 975.5,1054.9 975.5,1062.8 975.5,1057.9 976.5,1063.0 976.5,1053.0 976.5,1063.0 976.5,1053.8 977.5,1054.8 977.5,1050.6 977.5,1060.8 977.5,1050.6 978.5,1060.6 978.5,1055.3 978.5,1060.6 978.5,1058.2 979.5,1063.1 979.5,1051.8 979.5,1063.1 979.5,1056.9 980.5,1053.2 980.5,1052.3 980.5,1056.8 980.5,1056.8 981.5,1058.0 981.5,1051.9 981.5,1068.3 981.5,1051.9 982.5,1062.7 982.5,1051.9 982.5,1062.7 982.5,1055.6 983.5,1064.2 983.5,1054.9 983.5,1064.2 983.5,1054.9 984.5,1072.4 984.5,1059.0 984.5,1072.4 984.5,1069.0 985.5,1059.3 985.5,1059.3 985.5,1063.3 985.5,1061.2 986.5,1065.5 986.5,1052.2 986.5,1065.5 986.5,1056.8 987.5,1063.4 987.5,1058.7 987.5,1065.3 987.5,1065.3 988.5,1057.7 988.5,1057.7 988.5,1078.1 988.5,1058.0 989.5,1063.3 989.5,1058.9 989.5,1071.8 989.5,1062.9 990.5,1068.5 990.5,1056.8 990.5,1073.5 990.5,1060.9 991.5,1060.9 991.5,1058.3 991.5,1063.0 991.5,1063.0 992.5,1056.6 992.5,1056.6 992.5,1077.7 992.5,1067.9 993.5,1062.5 993.5,1062.5 993.5,1069.5 993.5,1065.2 994.5,1062.5 994.5,1057.8 994.5,1071.4 994.5,1057.8 995.5,1063.1 995.5,1056.4 995.5,1063.7 995.5,1063.7 996.5,1066.2 996.5,1061.3 996.5,1078.7 996.5,1070.3 997.5,1069.8 997.5,1054.6 997.5,1069.8 997.5,1063.1 998.5,1058.8 998.5,1058.8 998.5,1061.1 998.5,1060.9 999.5,1061.1 999.5,1059.2 999.5,1063.9 999.5,1062.4 1000.5,1066.5 1000.5,1057.7 1000.5,1074.4 1000.5,1074.4 1001.5,1067.9 1001.5,1067.9 1001.5,1075.3 1001.5,1069.2 1002.5,1061.0 1002.5,1061.0 1002.5,1069.6 1002.5,1067.6 1003.5,1065.1 1003.5,1065.1 1003.5,1070.5 1003.5,1069.5 1004.5,1070.6 1004.5,1063.3 1004.5,1070.6 1004.5,1063.3 1005.5,1067.0 1005.5,1062.0 1005.5,1078.5 1005.5,1072.7 1006.5,1065.4 1006.5,1061.9 1006.5,1074.5 1006.5,1067.8 1007.5,1066.0 1007.5,1066.0 1007.5,1078.8 1007.5,1066.1 1008.5,1071.8 1008.5,1066.7 1008.5,1071.8 1008.5,1071.3 1009.5,1076.1 1009.5,1064.4 1009.5,1076.1 1009.5,1064.4 1010.5,1066.0 1010.5,1066.0 1010.5,1076.7 1010.5,1073.8 1011.5,1070.6 1011.5,1064.0 1011.5,1071.3 1011.5,1071.3 1012.5,1069.9 1012.5,1060.6 1012.5,1078.6 1012.5,1072.3 1013.5,1073.6 1013.5,1061.4 1013.5,1076.8 1013.5,1070.7 1014.5,1067.6 1014.5,1062.6 1014.5,1070.1 1014.5,1066.8 1015.5,1074.8 1015.5,1065.2 1015.5,1074.8 1015.5,1070.4 1016.5,1070.5 1016.5,1064.6 1016.5,1071.7 1016.5,1064.6 1017.5,1073.9 1017.5,1063.8 1017.5,1077.2 1017.5,1067.6 1018.5,1067.5 1018.5,1064.2 1018.5,1075.8 1018.5,1069.6 1019.5,1069.6 1019.5,1067.9 1019.5,1085.3 1019.5,1070.0 1020.5,1072.4 1020.5,1068.7 1020.5,1075.1 1020.5,1071.9 1021.5,1074.8 1021.5,1065.7 1021.5,1078.2 1021.5,1078.2 1022.5,1076.4 1022.5,1064.4 1022.5,1076.4 1022.5,1064.4 1023.5,1080.1 1023.5,1063.3 1023.5,1080.1 1023.5,1066.2 1024.5,1070.6 1024.5,1070.6 1024.5,1076.6 1024.5,1072.5 1025.5,1083.7 1025.5,1065.8 1025.5,1083.7 1025.5,1070.0 1026.5,1066.2 1026.5,1065.2 1026.5,1077.7 1026.5,1071.1 1027.5,1082.0 1027.5,1067.5 1027.5,1082.0 1027.5,1071.5 1028.5,1075.8 1028.5,1065.6 1028.5,1077.3 1028.5,1069.7 1029.5,1072.8 1029.5,1068.6 1029.5,1076.3 1029.5,1068.8 1030.5,1073.5 1030.5,1069.5 1030.5,1074.5 1030.5,1069.5 1031.5,1070.6 1031.5,1065.4 1031.5,1076.1 1031.5,1073.5 1032.5,1083.3 1032.5,1066.4 1032.5,1086.1 1032.5,1066.4 1033.5,1085.2 1033.5,1068.4 1033.5,1085.2 1033.5,1077.6 1034.5,1073.0 1034.5,1064.7 1034.5,1078.0 1034.5,1078.0 1035.5,1071.7 1035.5,1071.7 1035.5,1078.9 1035.5,1074.2 1036.5,1074.7 1036.5,1070.7 1036.5,1079.4 1036.5,1070.7 1037.5,1073.2 1037.5,1067.3 1037.5,1075.1 1037.5,1075.1 1038.5,1072.8 1038.5,1067.2 1038.5,1083.8 1038.5,1083.8 1039.5,1076.9 1039.5,1071.2 1039.5,1087.8 1039.5,1087.8 1040.5,1083.4 1040.5,1065.2 1040.5,1084.0 1040.5,1065.2 1041.5,1063.9 1041.5,1063.9 1041.5,1078.8 1041.5,1072.1 1042.5,1071.2 1042.5,1068.1 1042.5,1077.4 1042.5,1068.1 1043.5,1075.0 1043.5,1063.0 1043.5,1082.2 1043.5,1071.0 1044.5,1068.7 1044.5,1068.7 1044.5,1084.3 1044.5,1071.3 1045.5,1070.7 1045.5,1064.7 1045.5,1073.6 1045.5,1071.5 1046.5,1075.5 1046.5,1071.3 1046.5,1080.5 1046.5,1072.3 1047.5,1078.5 1047.5,1070.0 1047.5,1082.4 1047.5,1082.4 1048.5,1073.4 1048.5,1066.9 1048.5,1082.1 1048.5,1072.0 1049.5,1086.0 1049.5,1071.8 1049.5,1086.0 1049.5,1074.7 1050.5,1075.8 1050.5,1068.4 1050.5,1086.2 1050.5,1072.4 1051.5,1069.5 1051.5,1069.5 1051.5,1085.6 1051.5,1081.7 1052.5,1068.3 1052.5,1068.3 1052.5,1077.7 1052.5,1077.6 1053.5,1080.5 1053.5,1067.9 1053.5,1083.0 1053.5,1075.2 1054.5,1070.1 1054.5,1069.9 1054.5,1078.2 1054.5,1074.7 1055.5,1069.2 1055.5,1067.3 1055.5,1077.6 1055.5,1069.8 1056.5,1071.1 1056.5,1068.0 1056.5,1083.0 1056.5,1076.5 1057.5,1071.3 1057.5,1063.8 1057.5,1082.0 1057.5,1063.8 1058.5,1071.4 1058.5,1071.4 1058.5,1089.1 1058.5,1073.1 1059.5,1072.3 1059.5,1067.6 1059.5,1076.5 1059.5,1067.6 1060.5,1076.7 1060.5,1065.4 1060.5,1081.6 1060.5,1081.6 1061.5,1076.5 1061.5,1071.4 1061.5,1087.9 1061.5,1086.9 1062.5,1071.3 1062.5,1071.3 1062.5,1083.5 1062.5,1074.0 1063.5,1077.1 1063.5,1070.4 1063.5,1079.5 1063.5,1075.3 1064.5,1070.6 1064.5,1067.1 1064.5,1089.8 1064.5,1079.5 1065.5,1074.9 1065.5,1068.8 1065.5,1087.8 1065.5,1068.8 1066.5,1069.8 1066.5,1069.8 1066.5,1076.8 1066.5,1073.5 1067.5,1073.7 1067.5,1073.7 1067.5,1087.7 1067.5,1073.7 1068.5,1075.9 1068.5,1068.4 1068.5,1075.9 1068.5,1074.3 1069.5,1075.9 1069.5,1067.5 1069.5,1081.7 1069.5,1081.7 1070.5,1067.5 1070.5,1067.0 1070.5,1082.0 1070.5,1076.6 1071.5,1072.7 1071.5,1067.1 1071.5,1086.7 1071.5,1067.1 1072.5,1078.2 1072.5,1069.8 1072.5,1089.9 1072.5,1089.9 1073.5,1071.2 1073.5,1070.7 1073.5,1083.3 1073.5,1076.8 1074.5,1082.9 1074.5,1070.4 1074.5,1082.9 1074.5,1078.7 1075.5,1070.3 1075.5,1069.8 1075.5,1099.2 1075.5,1099.2 1076.5,1076.6 1076.5,1071.0 1076.5,1092.2 1076.5,1072.3 1077.5,1070.5 1077.5,1066.8 1077.5,1081.1 1077.5,1078.3 1078.5,1079.8 1078.5,1072.3 1078.5,1090.4 1078.5,1086.9 1079.5,1083.4 1079.5,1070.6 1079.5,1083.4 1079.5,1079.0 1080.5,1083.2 1080.5,1072.5 1080.5,1085.6 1080.5,1072.5 1081.5,1080.6 1081.5,1070.6 1081.5,1080.6 1081.5,1080.4 1082.5,1078.9 1082.5,1070.3 1082.5,1080.7 1082.5,1077.7 1083.5,1085.5 1083.5,1065.7 1083.5,1085.5 1083.5,1074.0 1084.5,1070.1 1084.5,1067.9 1084.5,1086.8 1084.5,1067.9 1085.5,1072.6 1085.5,1072.6 1085.5,1081.9 1085.5,1076.7 1086.5,1080.0 1086.5,1070.9 1086.5,1084.1 1086.5,1080.6 1087.5,1066.6 1087.5,1066.6 1087.5,1080.0 1087.5,1077.2 1088.5,1074.6 1088.5,1072.6 1088.5,1083.0 1088.5,1073.9 1089.5,1074.7 1089.5,1071.0 1089.5,1083.8 1089.5,1075.1 1090.5,1073.7 1090.5,1073.7 1090.5,1082.6 1090.5,1078.7 1091.5,1073.9 1091.5,1070.2 1091.5,1079.6 1091.5,1070.2 1092.5,1080.9 1092.5,1069.0 1092.5,1080.9 1092.5,1069.0 1093.5,1076.2 1093.5,1072.6 1093.5,1087.1 1093.5,1086.6 1094.5,1078.4 1094.5,1071.4 1094.5,1082.5 1094.5,1082.5 1095.5,1077.8 1095.5,1072.4 1095.5,1082.1 1095.5,1080.3 1096.5,1086.8 1096.5,1070.4 1096.5,1086.8 1096.5,1076.9 1097.5,1085.9 1097.5,1076.6 1097.5,1085.9 1097.5,1081.4 1098.5,1086.5 1098.5,1069.4 1098.5,1086.5 1098.5,1077.7 1099.5,1072.3 1099.5,1072.3 1099.5,1087.1 1099.5,1074.6 1100.5,1074.8 1100.5,1073.3 1100.5,1080.9 1100.5,1080.4 1101.5,1074.4 1101.5,1074.4 1101.5,1085.5 1101.5,1081.2 1102.5,1083.2 1102.5,1071.1 1102.5,1083.2 1102.5,1073.3 1103.5,1078.6 1103.5,1073.8 1103.5,1080.1 1103.5,1075.9 1104.5,1080.2 1104.5,1075.7 1104.5,1086.8 1104.5,1086.8 1105.5,1075.5 1105.5,1071.2 1105.5,1081.9 1105.5,1081.9 1106.5,1077.5 1106.5,1073.9 1106.5,1083.4 1106.5,1079.1 1107.5,1074.3 1107.5,1074.3 1107.5,1091.0 1107.5,1077.6 1108.5,1072.2 1108.5,1071.2 1108.5,1086.6 1108.5,1085.5 1109.5,1080.8 1109.5,1069.3 1109.5,1089.2 1109.5,1072.2 1110.5,1070.4 1110.5,1067.6 1110.5,1083.3 1110.5,1071.6 1111.5,1073.5 1111.5,1073.5 1111.5,1081.6 1111.5,1075.3 1112.5,1072.7 1112.5,1071.8 1112.5,1095.3 1112.5,1084.0 1113.5,1082.6 1113.5,1073.2 1113.5,1086.0 1113.5,1074.0 1114.5,1072.6 1114.5,1068.9 1114.5,1085.1 1114.5,1073.2 1115.5,1069.5 1115.5,1069.5 1115.5,1081.6 1115.5,1076.6 1116.5,1077.7 1116.5,1076.1 1116.5,1098.8 1116.5,1082.2 1117.5,1078.4 1117.5,1073.8 1117.5,1083.2 1117.5,1073.8 1118.5,1090.9 1118.5,1072.3 1118.5,1090.9 1118.5,1081.4 1119.5,1079.6 1119.5,1069.6 1119.5,1081.1 1119.5,1081.1 1120.5,1073.8 1120.5,1070.7 1120.5,1089.1 1120.5,1077.1 1121.5,1088.7 1121.5,1075.1 1121.5,1091.1 1121.5,1081.3 1122.5,1078.6 1122.5,1075.5 1122.5,1092.3 1122.5,1077.9 1123.5,1076.2 1123.5,1075.2 1123.5,1083.5 1123.5,1081.3 1124.5,1093.3 1124.5,1072.8 1124.5,1093.3 1124.5,1082.8 1125.5,1085.2 1125.5,1069.9 1125.5,1085.2 1125.5,1075.5 1126.5,1071.2 1126.5,1066.4 1126.5,1083.1 1126.5,1076.8 1127.5,1080.1 1127.5,1069.2 1127.5,1094.0 1127.5,1094.0 1128.5,1085.0 1128.5,1073.9 1128.5,1086.2 1128.5,1075.4 1129.5,1081.4 1129.5,1070.5 1129.5,1089.4 1129.5,1081.2 1130.5,1089.0 1130.5,1074.2 1130.5,1089.0 1130.5,1082.9 1131.5,1078.7 1131.5,1070.2 1131.5,1084.8 1131.5,1079.9 1132.5,1079.7 1132.5,1066.9 1132.5,1083.6 1132.5,1074.4 1133.5,1081.4 1133.5,1072.9 1133.5,1083.9 1133.5,1072.9 1134.5,1083.2 1134.5,1073.0 1134.5,1084.9 1134.5,1084.9 1135.5,1070.9 1135.5,1070.9 1135.5,1085.2 1135.5,1078.0 1136.5,1081.4 1136.5,1073.9 1136.5,1085.4 1136.5,1083.9 1137.5,1080.0 1137.5,1072.7 1137.5,1090.9 1137.5,1090.9 1138.5,1073.5 1138.5,1067.8 1138.5,1080.1 1138.5,1067.8 1139.5,1071.8 1139.5,1071.8 1139.5,1088.7 1139.5,1084.3 1140.5,1078.3 1140.5,1069.3 1140.5,1092.9 1140.5,1079.4 1141.5,1074.6 1141.5,1074.6 1141.5,1088.5 1141.5,1080.3 1142.5,1087.5 1142.5,1069.4 1142.5,1087.5 1142.5,1081.9 1143.5,1074.7 1143.5,1072.3 1143.5,1093.6 1143.5,1087.8 1144.5,1075.5 1144.5,1067.5 1144.5,1077.3 1144.5,1067.5 1145.5,1072.7 1145.5,1070.0 1145.5,1087.3 1145.5,1085.5 1146.5,1080.6 1146.5,1069.5 1146.5,1085.9 1146.5,1069.5 1147.5,1093.3 1147.5,1072.8 1147.5,1093.3 1147.5,1072.8 1148.5,1073.8 1148.5,1070.4 1148.5,1086.9 1148.5,1086.9 1149.5,1077.3 1149.5,1065.4 1149.5,1082.2 1149.5,1074.1 1150.5,1085.1 1150.5,1070.6 1150.5,1085.2 1150.5,1085.2 1151.5,1080.6 1151.5,1073.4 1151.5,1087.9 1151.5,1079.4 1152.5,1079.6 1152.5,1067.1 1152.5,1083.9 1152.5,1083.9 1153.5,1072.6 1153.5,1072.6 1153.5,1096.4 1153.5,1076.7 1154.5,1080.2 1154.5,1071.9 1154.5,1084.0 1154.5,1084.0 1155.5,1077.6 1155.5,1071.9 1155.5,1092.5 1155.5,1075.6 1156.5,1078.2 1156.5,1074.5 1156.5,1084.1 1156.5,1076.1 1157.5,1080.4 1157.5,1070.3 1157.5,1085.3 1157.5,1077.8 1158.5,1075.9 1158.5,1071.9 1158.5,1085.0 1158.5,1078.3 1159.5,1079.1 1159.5,1073.5 1159.5,1087.5 1159.5,1081.8 1160.5,1074.7 1160.5,1073.0 1160.5,1084.0 1160.5,1084.0 1161.5,1086.4 1161.5,1072.9 1161.5,1089.9 1161.5,1073.6 1162.5,1072.9 1162.5,1072.9 1162.5,1089.0 1162.5,1088.8 1163.5,1094.4 1163.5,1071.7 1163.5,1094.4 1163.5,1078.6 1164.5,1074.8 1164.5,1071.9 1164.5,1090.8 1164.5,1080.5 1165.5,1076.4 1165.5,1072.3 1165.5,1086.0 1165.5,1072.3 1166.5,1076.5 1166.5,1069.8 1166.5,1086.9 1166.5,1076.2 1167.5,1078.5 1167.5,1071.1 1167.5,1085.6 1167.5,1073.3 1168.5,1081.6 1168.5,1069.7 1168.5,1089.9 1168.5,1069.7 1169.5,1083.8 1169.5,1073.8 1169.5,1083.8 1169.5,1074.8 1170.5,1082.2 1170.5,1068.5 1170.5,1090.4 1170.5,1080.6 1171.5,1082.1 1171.5,1075.3 1171.5,1089.7 1171.5,1075.3 1172.5,1079.0 1172.5,1068.1 1172.5,1100.7 1172.5,1079.6 1173.5,1082.5 1173.5,1073.5 1173.5,1085.5 1173.5,1085.5 1174.5,1078.1 1174.5,1075.0 1174.5,1084.1 1174.5,1075.0 1175.5,1079.9 1175.5,1068.9 1175.5,1088.8 1175.5,1074.5 1176.5,1082.3 1176.5,1073.8 1176.5,1086.3 1176.5,1079.2 1177.5,1073.6 1177.5,1072.5 1177.5,1091.1 1177.5,1075.3 1178.5,1071.3 1178.5,1071.3 1178.5,1089.2 1178.5,1077.3 1179.5,1071.9 1179.5,1071.9 1179.5,1090.6 1179.5,1078.0 1180.5,1078.9 1180.5,1073.8 1180.5,1086.4 1180.5,1081.8 1181.5,1071.6 1181.5,1071.6 1181.5,1084.5 1181.5,1082.1 1182.5,1098.3 1182.5,1072.7 1182.5,1098.3 1182.5,1077.2 1183.5,1079.0 1183.5,1072.2 1183.5,1083.8 1183.5,1074.9 1184.5,1075.7 1184.5,1071.8 1184.5,1093.6 1184.5,1080.9 1185.5,1078.6 1185.5,1074.3 1185.5,1093.3 1185.5,1078.4 1186.5,1069.9 1186.5,1068.5 1186.5,1089.1 1186.5,1073.4 1187.5,1082.4 1187.5,1072.4 1187.5,1082.7 1187.5,1074.5 1188.5,1082.3 1188.5,1068.5 1188.5,1082.3 1188.5,1073.1 1189.5,1080.1 1189.5,1065.2 1189.5,1086.7 1189.5,1078.1 1190.5,1090.1 1190.5,1076.2 1190.5,1090.1 1190.5,1078.5 1191.5,1082.8 1191.5,1071.7 1191.5,1097.3 1191.5,1085.4 1192.5,1070.8 1192.5,1070.8 1192.5,1090.1 1192.5,1074.8 1193.5,1081.6 1193.5,1076.1 1193.5,1092.3 1193.5,1079.8 1194.5,1085.6 1194.5,1075.6 1194.5,1085.6 1194.5,1081.9 1195.5,1083.5 1195.5,1069.6 1195.5,1093.5 1195.5,1073.5 1196.5,1071.9 1196.5,1067.1 1196.5,1086.3 1196.5,1074.7 1197.5,1078.2 1197.5,1073.9 1197.5,1094.6 1197.5,1084.3 1198.5,1077.4 1198.5,1072.3 1198.5,1086.8 1198.5,1074.7 1199.5,1085.1 1199.5,1070.8 1199.5,1092.7 1199.5,1077.6 1200.5,1076.6 1200.5,1066.7 1200.5,1087.6 1200.5,1079.9 1201.5,1066.5 1201.5,1066.5 1201.5,1088.3 1201.5,1077.8 1202.5,1081.3 1202.5,1073.0 1202.5,1091.5 1202.5,1091.5 1203.5,1083.7 1203.5,1072.1 1203.5,1094.6 1203.5,1077.1 1204.5,1080.4 1204.5,1073.4 1204.5,1084.6 1204.5,1084.1 1205.5,1083.3 1205.5,1073.3 1205.5,1087.3 1205.5,1076.3 1206.5,1080.9 1206.5,1075.3 1206.5,1089.6 1206.5,1082.3 1207.5,1079.4 1207.5,1071.5 1207.5,1090.3 1207.5,1071.5 1208.5,1079.3 1208.5,1076.9 1208.5,1092.5 1208.5,1081.3 1209.5,1072.3 1209.5,1070.0 1209.5,1086.4 1209.5,1072.4 1210.5,1077.4 1210.5,1070.8 1210.5,1099.7 1210.5,1078.8 1211.5,1070.4 1211.5,1070.4 1211.5,1093.9 1211.5,1079.9 1212.5,1079.7 1212.5,1074.8 1212.5,1085.0 1212.5,1076.2 1213.5,1078.7 1213.5,1071.6 1213.5,1086.7 1213.5,1078.0 1214.5,1081.9 1214.5,1075.5 1214.5,1087.9 1214.5,1075.5 1215.5,1078.3 1215.5,1069.4 1215.5,1084.8 1215.5,1074.0 1216.5,1084.5 1216.5,1071.9 1216.5,1090.8 1216.5,1081.3 1217.5,1075.1 1217.5,1072.2 1217.5,1093.1 1217.5,1079.2 1218.5,1074.0 1218.5,1070.2 1218.5,1083.6 1218.5,1081.5 1219.5,1082.9 1219.5,1067.9 1219.5,1091.7 1219.5,1067.9 1220.5,1093.0 1220.5,1069.2 1220.5,1093.0 1220.5,1080.1 1221.5,1087.1 1221.5,1071.3 1221.5,1087.1 1221.5,1079.5 1222.5,1079.6 1222.5,1075.8 1222.5,1091.1 1222.5,1085.4 1223.5,1066.8 1223.5,1066.8 1223.5,1103.9 1223.5,1074.0 1224.5,1085.2 1224.5,1072.8 1224.5,1086.5 1224.5,1072.8 1225.5,1079.7 1225.5,1074.3 1225.5,1086.7 1225.5,1084.3 1226.5,1077.4 1226.5,1069.7 1226.5,1088.6 1226.5,1069.7 1227.5,1078.5 1227.5,1075.1 1227.5,1088.3 1227.5,1075.1 1228.5,1076.9 1228.5,1075.1 1228.5,1089.5 1228.5,1077.8 1229.5,1080.1 1229.5,1072.9 1229.5,1089.7 1229.5,1084.5 1230.5,1073.4 1230.5,1068.5 1230.5,1090.0 1230.5,1084.7 1231.5,1077.4 1231.5,1073.8 1231.5,1095.0 1231.5,1077.6 1232.5,1083.0 1232.5,1070.7 1232.5,1089.0 1232.5,1083.7 1233.5,1081.2 1233.5,1071.7 1233.5,1090.7 1233.5,1090.7 1234.5,1080.3 1234.5,1072.5 1234.5,1084.4 1234.5,1077.2 1235.5,1077.5 1235.5,1071.4 1235.5,1092.5 1235.5,1084.6 1236.5,1075.9 1236.5,1075.9 1236.5,1092.2 1236.5,1085.4 1237.5,1075.8 1237.5,1070.1 1237.5,1083.1 1237.5,1079.0 1238.5,1070.7 1238.5,1070.1 1238.5,1083.7 1238.5,1080.3 1239.5,1076.0 1239.5,1075.1 1239.5,1091.2 1239.5,1078.6 1240.5,1073.7 1240.5,1073.7 1240.5,1089.2 1240.5,1082.3 1241.5,1077.8 1241.5,1074.5 1241.5,1092.0 1241.5,1092.0 1242.5,1085.7 1242.5,1070.2 1242.5,1089.5 1242.5,1087.2 1243.5,1082.9 1243.5,1071.7 1243.5,1089.2 1243.5,1073.8 1244.5,1079.6 1244.5,1070.0 1244.5,1095.3 1244.5,1081.6 1245.5,1079.5 1245.5,1074.8 1245.5,1083.3 1245.5,1080.5 1246.5,1082.9 1246.5,1071.8 1246.5,1086.3 1246.5,1076.1 1247.5,1075.6 1247.5,1072.0 1247.5,1094.9 1247.5,1094.9 1248.5,1079.3 1248.5,1071.9 1248.5,1084.2 1248.5,1082.8 1249.5,1075.0 1249.5,1072.8 1249.5,1088.5 1249.5,1079.0 1250.5,1071.6 1250.5,1071.6 1250.5,1085.2 1250.5,1074.7 1251.5,1071.5 1251.5,1071.5 1251.5,1094.6 1251.5,1084.5 1252.5,1078.3 1252.5,1071.2 1252.5,1089.0 1252.5,1079.5 1253.5,1085.2 1253.5,1070.0 1253.5,1103.7 1253.5,1078.4 1254.5,1080.4 1254.5,1073.1 1254.5,1091.2 1254.5,1075.3 1255.5,1084.6 1255.5,1069.1 1255.5,1086.7 1255.5,1082.6 1256.5,1094.2 1256.5,1075.4 1256.5,1094.2 1256.5,1085.0 1257.5,1069.4 1257.5,1069.4 1257.5,1086.8 1257.5,1075.4 1258.5,1079.7 1258.5,1073.1 1258.5,1088.7 1258.5,1080.9 1259.5,1080.8 1259.5,1073.3 1259.5,1091.7 1259.5,1078.0 1260.5,1076.7 1260.5,1071.5 1260.5,1098.8 1260.5,1098.8 1261.5,1082.2 1261.5,1071.8 1261.5,1091.6 1261.5,1078.0 1262.5,1081.6 1262.5,1070.4 1262.5,1089.9 1262.5,1089.9 1263.5,1087.2 1263.5,1068.7 1263.5,1095.6 1263.5,1081.1 1264.5,1087.0 1264.5,1073.2 1264.5,1091.7 1264.5,1085.7 1265.5,1075.4 1265.5,1073.0 1265.5,1084.8 1265.5,1076.3 1266.5,1083.4 1266.5,1072.4 1266.5,1088.8 1266.5,1072.4 1267.5,1079.0 1267.5,1074.0 1267.5,1085.5 1267.5,1079.9 1268.5,1077.4 1268.5,1077.4 1268.5,1089.9 1268.5,1083.5 1269.5,1076.0 1269.5,1069.2 1269.5,1088.1 1269.5,1077.8 1270.5,1074.7 1270.5,1073.2 1270.5,1092.6 1270.5,1079.8 1271.5,1074.3 1271.5,1071.6 1271.5,1102.9 1271.5,1076.1 1272.5,1080.6 1272.5,1071.7 1272.5,1087.7 1272.5,1076.9 1273.5,1085.1 1273.5,1071.6 1273.5,1094.0 1273.5,1078.3 1274.5,1092.8 1274.5,1073.5 1274.5,1092.8 1274.5,1073.5 1275.5,1092.6 1275.5,1069.8 1275.5,1092.6 1275.5,1079.3 1276.5,1079.6 1276.5,1071.8 1276.5,1083.4 1276.5,1081.1 1277.5,1073.6 1277.5,1033.0 1277.5,1087.0 1277.5,1074.9 1278.5,1089.5 1278.5,1071.1 1278.5,1096.2 1278.5,1077.0 1279.5,1075.5 1279.5,1074.6 1279.5,1096.4 1279.5,1087.5 1280.5,1087.8 1280.5,1070.7 1280.5,1098.1 1280.5,1085.1 1281.5,1072.5 1281.5,1072.5 1281.5,1088.3 1281.5,1088.3 1282.5,1086.1 1282.5,1071.3 1282.5,1091.5 1282.5,1081.5 1283.5,1074.9 1283.5,1072.4 1283.5,1092.8 1283.5,1079.2 1284.5,1087.8 1284.5,1074.0 1284.5,1087.8 1284.5,1082.0 1285.5,1075.3 1285.5,1075.3 1285.5,1091.2 1285.5,1083.0 1286.5,1081.3 1286.5,1072.4 1286.5,1095.4 1286.5,1072.4 1287.5,1078.3 1287.5,1070.0 1287.5,1093.8 1287.5,1081.2 1288.5,1083.1 1288.5,1072.8 1288.5,1091.3 1288.5,1085.8 1289.5,1077.7 1289.5,1071.7 1289.5,1091.5 1289.5,1080.2 1290.5,1081.3 1290.5,1071.9 1290.5,1090.7 1290.5,1071.9 1291.5,1075.1 1291.5,1071.6 1291.5,1087.1 1291.5,1077.7 1292.5,1082.9 1292.5,1071.3 1292.5,1082.9 1292.5,1071.3 1293.5,1087.1 1293.5,1071.6 1293.5,1092.7 1293.5,1081.8 1294.5,1081.4 1294.5,1075.2 1294.5,1090.0 1294.5,1076.2 1295.5,1076.1 1295.5,1071.1 1295.5,1088.0 1295.5,1079.3 1296.5,1085.9 1296.5,1074.6 1296.5,1090.4 1296.5,1074.6 1297.5,1070.5 1297.5,1070.5 1297.5,1089.7 1297.5,1078.5 1298.5,1085.3 1298.5,1070.8 1298.5,1096.3 1298.5,1077.4 1299.5,1088.2 1299.5,1071.5 1299.5,1092.3 1299.5,1073.7 1300.5,1065.1 1300.5,1065.1 1300.5,1092.7 1300.5,1086.2 1301.5,1074.9 1301.5,1072.2 1301.5,1099.2 1301.5,1074.0 1302.5,1081.3 1302.5,1074.8 1302.5,1088.8 1302.5,1088.8 1303.5,1096.6 1303.5,1073.5 1303.5,1096.6 1303.5,1078.4 1304.5,1087.2 1304.5,1071.6 1304.5,1087.2 1304.5,1077.7 1305.5,1079.9 1305.5,1070.6 1305.5,1086.1 1305.5,1079.6 1306.5,1077.5 1306.5,1073.0 1306.5,1089.0 1306.5,1076.3 1307.5,1070.2 1307.5,1070.2 1307.5,1099.9 1307.5,1080.2 1308.5,1079.9 1308.5,1069.5 1308.5,1100.0 1308.5,1089.1 1309.5,1074.7 1309.5,1073.1 1309.5,1096.7 1309.5,1080.2 1310.5,1082.8 1310.5,1073.6 1310.5,1090.1 1310.5,1079.5 1311.5,1084.3 1311.5,1069.5 1311.5,1091.5 1311.5,1075.4 1312.5,1086.0 1312.5,1070.7 1312.5,1095.9 1312.5,1073.3 1313.5,1070.5 1313.5,1070.5 1313.5,1086.6 1313.5,1075.6 1314.5,1083.4 1314.5,1072.9 1314.5,1094.5 1314.5,1083.5 1315.5,1074.8 1315.5,1071.2 1315.5,1090.9 1315.5,1083.7 1316.5,1075.2 1316.5,1071.0 1316.5,1085.6 1316.5,1073.0 1317.5,1080.1 1317.5,1073.8 1317.5,1091.0 1317.5,1078.6 1318.5,1096.7 1318.5,1072.2 1318.5,1096.7 1318.5,1086.7 1319.5,1077.2 1319.5,1072.9 1319.5,1092.2 1319.5,1092.2 1320.5,1079.2 1320.5,1072.5 1320.5,1099.1 1320.5,1076.1 1321.5,1085.5 1321.5,1070.7 1321.5,1090.1 1321.5,1075.8 1322.5,1088.8 1322.5,1071.5 1322.5,1096.4 1322.5,1083.9 1323.5,1079.8 1323.5,1073.2 1323.5,1087.3 1323.5,1080.1 1324.5,1078.1 1324.5,1073.3 1324.5,1091.3 1324.5,1080.7 1325.5,1082.8 1325.5,1069.4 1325.5,1101.1 1325.5,1074.1 1326.5,1085.6 1326.5,1068.3 1326.5,1085.6 1326.5,1076.3 1327.5,1084.3 1327.5,1073.4 1327.5,1100.9 1327.5,1078.8 1328.5,1083.5 1328.5,1070.9 1328.5,1087.9 1328.5,1080.9 1329.5,1081.3 1329.5,1070.2 1329.5,1090.5 1329.5,1080.3 1330.5,1068.6 1330.5,1068.6 1330.5,1091.4 1330.5,1086.0 1331.5,1081.2 1331.5,1073.9 1331.5,1088.1 1331.5,1080.0 1332.5,1079.1 1332.5,1074.5 1332.5,1097.8 1332.5,1078.5 1333.5,1072.4 1333.5,1071.1 1333.5,1086.7 1333.5,1079.6 1334.5,1072.8 1334.5,1071.2 1334.5,1103.7 1334.5,1082.7 1335.5,1074.6 1335.5,1070.7 1335.5,1094.1 1335.5,1078.5 1336.5,1088.5 1336.5,1071.1 1336.5,1095.7 1336.5,1082.3 1337.5,1076.6 1337.5,1070.2 1337.5,1090.9 1337.5,1075.4 1338.5,1082.9 1338.5,1073.2 1338.5,1096.1 1338.5,1074.8 1339.5,1080.1 1339.5,1073.6 1339.5,1091.1 1339.5,1075.1 1340.5,1077.7 1340.5,1067.7 1340.5,1088.7 1340.5,1081.3 1341.5,1080.2 1341.5,1071.8 1341.5,1092.4 1341.5,1077.9 1342.5,1079.9 1342.5,1074.1 1342.5,1087.0 1342.5,1082.4 1343.5,1076.9 1343.5,1071.9 1343.5,1094.9 1343.5,1085.4 1344.5,1096.0 1344.5,1069.6 1344.5,1096.0 1344.5,1085.1 1345.5,1080.7 1345.5,1069.2 1345.5,1085.4 1345.5,1077.5 1346.5,1085.6 1346.5,1070.7 1346.5,1094.8 1346.5,1075.6 1347.5,1077.4 1347.5,1068.9 1347.5,1089.1 1347.5,1079.0 1348.5,1075.7 1348.5,1072.9 1348.5,1093.4 1348.5,1073.9 1349.5,1080.2 1349.5,1075.0 1349.5,1096.3 1349.5,1096.3 1350.5,1077.9 1350.5,1070.4 1350.5,1094.3 1350.5,1085.4 1351.5,1079.8 1351.5,1071.8 1351.5,1090.0 1351.5,1080.1 1352.5,1089.5 1352.5,1068.7 1352.5,1089.5 1352.5,1089.2 1353.5,1077.5 1353.5,1073.0 1353.5,1095.3 1353.5,1089.0 1354.5,1086.4 1354.5,1072.4 1354.5,1086.4 1354.5,1075.0 1355.5,1079.3 1355.5,1072.5 1355.5,1094.2 1355.5,1075.8 1356.5,1088.5 1356.5,1070.2 1356.5,1088.5 1356.5,1087.1 1357.5,1080.1 1357.5,1070.0 1357.5,1093.8 1357.5,1077.5 1358.5,1074.8 1358.5,1071.5 1358.5,1089.0 1358.5,1073.0 1359.5,1073.5 1359.5,1073.5 1359.5,1092.2 1359.5,1089.5 1360.5,1078.8 1360.5,1073.2 1360.5,1093.4 1360.5,1082.2 1361.5,1084.3 1361.5,1068.2 1361.5,1088.7 1361.5,1076.9 1362.5,1083.0 1362.5,1069.1 1362.5,1096.1 1362.5,1083.9 1363.5,1074.7 1363.5,1072.4 1363.5,1096.5 1363.5,1078.7 1364.5,1085.1 1364.5,1073.8 1364.5,1088.3 1364.5,1086.7 1365.5,1083.6 1365.5,1074.7 1365.5,1094.4 1365.5,1074.7 1366.5,1079.4 1366.5,1072.7 1366.5,1092.1 1366.5,1080.2 1367.5,1086.3 1367.5,1071.1 1367.5,1095.9 1367.5,1077.2 1368.5,1091.5 1368.5,1074.8 1368.5,1091.5 1368.5,1081.8 1369.5,1084.4 1369.5,1071.8 1369.5,1094.2 1369.5,1076.1 1370.5,1078.5 1370.5,1072.5 1370.5,1091.9 1370.5,1085.9 1371.5,1080.4 1371.5,1070.3 1371.5,1091.4 1371.5,1078.9 1372.5,1077.5 1372.5,1073.2 1372.5,1087.6 1372.5,1073.6 1373.5,1082.1 1373.5,1074.1 1373.5,1098.7 1373.5,1083.3 1374.5,1076.5 1374.5,1073.1 1374.5,1089.2 1374.5,1073.8 1375.5,1076.1 1375.5,1066.8 1375.5,1085.6 1375.5,1077.3 1376.5,1075.5 1376.5,1069.2 1376.5,1091.4 1376.5,1082.3 1377.5,1086.8 1377.5,1069.0 1377.5,1089.7 1377.5,1081.1 1378.5,1075.4 1378.5,1071.9 1378.5,1094.7 1378.5,1076.3 1379.5,1088.5 1379.5,1073.4 1379.5,1096.5 1379.5,1081.3 1380.5,1086.2 1380.5,1070.1 1380.5,1090.6 1380.5,1074.4 1381.5,1080.1 1381.5,1072.9 1381.5,1093.7 1381.5,1077.2 1382.5,1091.7 1382.5,1068.6 1382.5,1092.0 1382.5,1074.6 1383.5,1079.4 1383.5,1070.5 1383.5,1090.1 1383.5,1080.3 1384.5,1076.5 1384.5,1069.4 1384.5,1094.5 1384.5,1071.3 1385.5,1089.1 1385.5,1069.4 1385.5,1089.1 1385.5,1072.0 1386.5,1074.3 1386.5,1067.8 1386.5,1087.4 1386.5,1078.5 1387.5,1082.1 1387.5,1069.7 1387.5,1094.3 1387.5,1082.8 1388.5,1087.9 1388.5,1070.9 1388.5,1098.0 1388.5,1082.1 1389.5,1084.4 1389.5,1069.6 1389.5,1089.8 1389.5,1081.4 1390.5,1081.4 1390.5,1075.0 1390.5,1090.6 1390.5,1085.7 1391.5,1078.1 1391.5,1073.8 1391.5,1088.5 1391.5,1087.6 1392.5,1073.3 1392.5,1073.3 1392.5,1088.5 1392.5,1080.6 1393.5,1084.1 1393.5,1068.8 1393.5,1087.5 1393.5,1086.0 1394.5,1083.1 1394.5,1074.1 1394.5,1094.0 1394.5,1079.5 1395.5,1074.2 1395.5,1070.4 1395.5,1092.3 1395.5,1077.9 1396.5,1084.0 1396.5,1071.1 1396.5,1087.4 1396.5,1075.0 1397.5,1085.2 1397.5,1070.2 1397.5,1089.0 1397.5,1081.6 1398.5,1078.7 1398.5,1067.4 1398.5,1090.4 1398.5,1076.5 1399.5,1074.7 1399.5,1072.5 1399.5,1094.4 1399.5,1084.8 1400.5,1084.2 1400.5,1069.3 1400.5,1091.2 1400.5,1084.4 1401.5,1078.4 1401.5,1072.5 1401.5,1090.1 1401.5,1078.3 1402.5,1085.6 1402.5,1071.9 1402.5,1095.9 1402.5,1081.3 1403.5,1080.9 1403.5,1069.1 1403.5,1090.9 1403.5,1075.4 1404.5,1080.0 1404.5,1072.8 1404.5,1093.5 1404.5,1083.1 1405.5,1078.0 1405.5,1047.5 1405.5,1091.1 1405.5,1091.1 1406.5,1078.8 1406.5,1074.2 1406.5,1096.7 1406.5,1081.8 1407.5,1082.0 1407.5,1070.7 1407.5,1088.2 1407.5,1070.7 1408.5,1078.9 1408.5,1069.5 1408.5,1097.7 1408.5,1075.8 1409.5,1094.3 1409.5,1072.8 1409.5,1094.3 1409.5,1083.3 1410.5,1077.8 1410.5,1072.2 1410.5,1091.9 1410.5,1090.3 1411.5,1087.2 1411.5,1073.4 1411.5,1092.0 1411.5,1077.4 1412.5,1077.4 1412.5,1075.0 1412.5,1090.9 1412.5,1086.9 1413.5,1080.7 1413.5,1072.9 1413.5,1091.7 1413.5,1083.8 1414.5,1073.9 1414.5,1070.6 1414.5,1099.7 1414.5,1099.7 1415.5,1079.6 1415.5,1072.2 1415.5,1092.8 1415.5,1092.8 1416.5,1081.5 1416.5,1075.2 1416.5,1094.2 1416.5,1079.2 1417.5,1089.6 1417.5,1071.1 1417.5,1092.0 1417.5,1082.4 1418.5,1072.1 1418.5,1071.1 1418.5,1099.6 1418.5,1075.0 1419.5,1079.3 1419.5,1073.6 1419.5,1089.8 1419.5,1073.6 1420.5,1079.5 1420.5,1070.4 1420.5,1095.4 1420.5,1087.9 1421.5,1076.1 1421.5,1069.5 1421.5,1092.9 1421.5,1084.7 1422.5,1075.7 1422.5,1072.8 1422.5,1095.8 1422.5,1087.9 1423.5,1085.7 1423.5,1074.9 1423.5,1097.2 1423.5,1077.5 1424.5,1077.8 1424.5,1073.0 1424.5,1098.8 1424.5,1088.7 1425.5,1078.4 1425.5,1073.7 1425.5,1091.1 1425.5,1080.8 1426.5,1082.3 1426.5,1071.4 1426.5,1100.6 1426.5,1077.5 1427.5,1081.2 1427.5,1071.9 1427.5,1094.0 1427.5,1074.9 1428.5,1082.9 1428.5,1072.9 1428.5,1088.9 1428.5,1085.7 1429.5,1076.9 1429.5,1071.0 1429.5,1099.3 1429.5,1083.6 1430.5,1079.6 1430.5,1067.0 1430.5,1092.3 1430.5,1084.0 1431.5,1081.0 1431.5,1070.9 1431.5,1098.2 1431.5,1085.8 1432.5,1080.1 1432.5,1069.7 1432.5,1093.8 1432.5,1072.9 1433.5,1073.5 1433.5,1072.1 1433.5,1094.2 1433.5,1073.4 1434.5,1076.8 1434.5,1071.9 1434.5,1096.6 1434.5,1071.9 1435.5,1075.1 1435.5,1072.7 1435.5,1100.3 1435.5,1087.6 1436.5,1078.9 1436.5,1070.7 1436.5,1095.1 1436.5,1081.5 1437.5,1085.9 1437.5,1072.0 1437.5,1097.3 1437.5,1082.1 1438.5,1084.1 1438.5,1073.5 1438.5,1102.5 1438.5,1091.8 1439.5,1076.5 1439.5,1069.9 1439.5,1088.7 1439.5,1085.3 1440.5,1080.1 1440.5,1071.1 1440.5,1087.6 1440.5,1076.8 1441.5,1075.8 1441.5,1072.8 1441.5,1095.0 1441.5,1084.2 1442.5,1081.3 1442.5,1071.8 1442.5,1089.1 1442.5,1077.9 1443.5,1085.8 1443.5,1073.3 1443.5,1094.5 1443.5,1076.6 1444.5,1077.5 1444.5,1072.7 1444.5,1091.3 1444.5,1082.9 1445.5,1082.8 1445.5,1067.2 1445.5,1089.3 1445.5,1079.0 1446.5,1083.2 1446.5,1073.4 1446.5,1093.6 1446.5,1083.5 1447.5,1079.3 1447.5,1071.7 1447.5,1094.6 1447.5,1082.2 1448.5,1088.3 1448.5,1070.2 1448.5,1098.3 1448.5,1071.9 1449.5,1085.0 1449.5,1070.1 1449.5,1090.5 1449.5,1089.6 1450.5,1081.8 1450.5,1070.8 1450.5,1091.4 1450.5,1082.8 1451.5,1073.1 1451.5,1072.9 1451.5,1089.8 1451.5,1080.8 1452.5,1077.5 1452.5,1069.2 1452.5,1092.8 1452.5,1071.4 1453.5,1082.6 1453.5,1073.0 1453.5,1095.7 1453.5,1079.3 1454.5,1078.9 1454.5,1071.5 1454.5,1100.3 1454.5,1083.2 1455.5,1078.7 1455.5,1069.9 1455.5,1104.6 1455.5,1104.6 1456.5,1086.9 1456.5,1072.0 1456.5,1093.0 1456.5,1086.4 1457.5,1088.7 1457.5,1071.6 1457.5,1091.2 1457.5,1082.0 1458.5,1080.0 1458.5,1071.7 1458.5,1099.4 1458.5,1078.0 1459.5,1077.9 1459.5,1070.3 1459.5,1091.0 1459.5,1082.0 1460.5,1082.0 1460.5,1072.6 1460.5,1090.0 1460.5,1072.8 1461.5,1073.8 1461.5,1071.8 1461.5,1087.6 1461.5,1074.9 1462.5,1087.3 1462.5,1073.3 1462.5,1097.8 1462.5,1082.4 1463.5,1080.1 1463.5,1074.0 1463.5,1095.8 1463.5,1089.7 1464.5,1080.0 1464.5,1071.0 1464.5,1091.2 1464.5,1080.8 1465.5,1074.3 1465.5,1072.3 1465.5,1101.4 1465.5,1084.3 1466.5,1082.3 1466.5,1072.6 1466.5,1095.3 1466.5,1080.0 1467.5,1079.0 1467.5,1070.1 1467.5,1099.4 1467.5,1093.2 1468.5,1083.3 1468.5,1071.2 1468.5,1096.2 1468.5,1096.2 1469.5,1084.3 1469.5,1072.8 1469.5,1092.5 1469.5,1084.4 1470.5,1086.0 1470.5,1070.1 1470.5,1094.0 1470.5,1077.9 1471.5,1078.7 1471.5,1069.7 1471.5,1091.8 1471.5,1089.2 1472.5,1076.3 1472.5,1072.3 1472.5,1096.6 1472.5,1079.2 1473.5,1073.7 1473.5,1069.7 1473.5,1096.4 1473.5,1074.0 1474.5,1080.3 1474.5,1070.5 1474.5,1094.0 1474.5,1071.6 1475.5,1076.1 1475.5,1073.6 1475.5,1094.2 1475.5,1077.3 1476.5,1076.8 1476.5,1070.1 1476.5,1096.3 1476.5,1074.1 1477.5,1082.2 1477.5,1071.7 1477.5,1088.4 1477.5,1083.1 1478.5,1080.3 1478.5,1072.1 1478.5,1086.1 1478.5,1077.7 1479.5,1075.9 1479.5,1074.2 1479.5,1096.8 1479.5,1084.1 1480.5,1093.0 1480.5,1070.3 1480.5,1093.0 1480.5,1077.3 1481.5,1080.0 1481.5,1073.5 1481.5,1095.4 1481.5,1081.2 1482.5,1080.2 1482.5,1073.0 1482.5,1098.7 1482.5,1087.5 1483.5,1083.8 1483.5,1068.2 1483.5,1100.2 1483.5,1074.0 1484.5,1077.6 1484.5,1073.2 1484.5,1102.7 1484.5,1082.2 1485.5,1084.5 1485.5,1057.3 1485.5,1093.2 1485.5,1079.4 1486.5,1073.4 1486.5,1071.3 1486.5,1102.2 1486.5,1078.1 1487.5,1078.3 1487.5,1071.8 1487.5,1095.5 1487.5,1077.1 1488.5,1083.9 1488.5,1070.9 1488.5,1097.9 1488.5,1080.5 1489.5,1084.1 1489.5,1071.8 1489.5,1092.0 1489.5,1092.0 1490.5,1093.8 1490.5,1069.5 1490.5,1098.1 1490.5,1072.6 1491.5,1098.3 1491.5,1070.4 1491.5,1098.3 1491.5,1071.5 1492.5,1090.4 1492.5,1070.3 1492.5,1091.9 1492.5,1091.9 1493.5,1074.3 1493.5,1068.9 1493.5,1091.0 1493.5,1081.8 1494.5,1076.3 1494.5,1071.1 1494.5,1097.5 1494.5,1084.1 1495.5,1084.6 1495.5,1070.6 1495.5,1091.7 1495.5,1091.7 1496.5,1079.1 1496.5,1072.2 1496.5,1093.6 1496.5,1080.4 1497.5,1079.9 1497.5,1072.5 1497.5,1101.2 1497.5,1087.7 1498.5,1074.7 1498.5,1070.0 1498.5,1092.3 1498.5,1077.7 1499.5,1078.3 1499.5,1070.1 1499.5,1088.8 1499.5,1082.0 1500.5,1074.0 1500.5,1071.7 1500.5,1092.3 1500.5,1077.6 1501.5,1082.8 1501.5,1073.1 1501.5,1100.4 1501.5,1075.3 1502.5,1077.3 1502.5,1069.2 1502.5,1092.1 1502.5,1081.0 1503.5,1076.5 1503.5,1071.2 1503.5,1094.4 1503.5,1077.5 1504.5,1088.1 1504.5,1072.2 1504.5,1094.7 1504.5,1075.9 1505.5,1083.6 1505.5,1071.9 1505.5,1097.3 1505.5,1078.9 1506.5,1084.2 1506.5,1068.3 1506.5,1096.2 1506.5,1078.5 1507.5,1078.4 1507.5,1072.3 1507.5,1095.7 1507.5,1077.6 1508.5,1091.6 1508.5,1071.0 1508.5,1095.1 1508.5,1086.0 1509.5,1075.5 1509.5,1069.3 1509.5,1097.3 1509.5,1081.3 1510.5,1082.6 1510.5,1070.6 1510.5,1090.4 1510.5,1083.5 1511.5,1073.5 1511.5,1069.3 1511.5,1099.6 1511.5,1077.1 1512.5,1078.5 1512.5,1073.4 1512.5,1096.5 1512.5,1077.7 1513.5,1077.0 1513.5,1070.9 1513.5,1094.4 1513.5,1082.9 1514.5,1081.9 1514.5,1069.7 1514.5,1095.1 1514.5,1079.6 1515.5,1074.8 1515.5,1068.0 1515.5,1096.5 1515.5,1088.8 1516.5,1080.4 1516.5,1061.0 1516.5,1098.8 1516.5,1070.5 1517.5,1086.4 1517.5,1069.4 1517.5,1101.0 1517.5,1082.3 1518.5,1080.2 1518.5,1070.2 1518.5,1095.1 1518.5,1084.0 1519.5,1081.0 1519.5,1072.4 1519.5,1099.6 1519.5,1083.2 1520.5,1080.7 1520.5,1071.7 1520.5,1097.3 1520.5,1076.2 1521.5,1083.9 1521.5,1066.8 1521.5,1095.6 1521.5,1089.4 1522.5,1086.1 1522.5,1070.2 1522.5,1098.4 1522.5,1086.2 1523.5,1070.7 1523.5,1070.4 1523.5,1095.3 1523.5,1076.5 1524.5,1076.6 1524.5,1069.9 1524.5,1096.6 1524.5,1084.0 1525.5,1074.7 1525.5,1072.3 1525.5,1100.7 1525.5,1081.8 1526.5,1079.9 1526.5,1071.7 1526.5,1092.7 1526.5,1092.7 1527.5,1094.5 1527.5,1064.9 1527.5,1097.3 1527.5,1084.5 1528.5,1088.5 1528.5,1071.0 1528.5,1093.7 1528.5,1082.1 1529.5,1082.5 1529.5,1073.6 1529.5,1094.1 1529.5,1093.3 1530.5,1084.4 1530.5,1070.8 1530.5,1107.2 1530.5,1079.7 1531.5,1080.7 1531.5,1070.0 1531.5,1091.8 1531.5,1085.2 1532.5,1073.1 1532.5,1070.8 1532.5,1091.7 1532.5,1081.8 1533.5,1080.1 1533.5,1069.2 1533.5,1094.8 1533.5,1084.3 1534.5,1080.4 1534.5,1073.5 1534.5,1091.2 1534.5,1075.3 1535.5,1082.5 1535.5,1071.8 1535.5,1092.3 1535.5,1075.6 1536.5,1081.0 1536.5,1072.6 1536.5,1098.2 1536.5,1086.3 1537.5,1078.2 1537.5,1070.4 1537.5,1093.3 1537.5,1092.4 1538.5,1072.9 1538.5,1070.1 1538.5,1094.3 1538.5,1075.7 1539.5,1080.4 1539.5,1070.4 1539.5,1092.8 1539.5,1076.3 1540.5,1084.7 1540.5,1071.7 1540.5,1096.7 1540.5,1080.8 1541.5,1083.5 1541.5,1070.1 1541.5,1099.0 1541.5,1083.2 1542.5,1082.1 1542.5,1071.3 1542.5,1091.0 1542.5,1074.9 1543.5,1077.2 1543.5,1057.3 1543.5,1098.1 1543.5,1087.8 1544.5,1077.3 1544.5,1070.1 1544.5,1099.3 1544.5,1076.5 1545.5,1082.4 1545.5,1073.1 1545.5,1099.5 1545.5,1079.6 1546.5,1081.8 1546.5,1072.0 1546.5,1091.4 1546.5,1074.5 1547.5,1084.9 1547.5,1070.8 1547.5,1094.8 1547.5,1082.5 1548.5,1083.4 1548.5,1070.5 1548.5,1094.3 1548.5,1073.1 1549.5,1085.9 1549.5,1070.3 1549.5,1092.8 1549.5,1074.6 1550.5,1083.2 1550.5,1070.6 1550.5,1097.3 1550.5,1079.9 1551.5,1076.9 1551.5,1072.4 1551.5,1098.9 1551.5,1080.5 1552.5,1081.3 1552.5,1070.4 1552.5,1098.7 1552.5,1087.8 1553.5,1074.9 1553.5,1072.2 1553.5,1096.0 1553.5,1080.5 1554.5,1086.3 1554.5,1071.6 1554.5,1094.3 1554.5,1087.9 1555.5,1077.2 1555.5,1063.0 1555.5,1104.6 1555.5,1076.4 1556.5,1086.2 1556.5,1069.7 1556.5,1091.6 1556.5,1078.4 1557.5,1082.4 1557.5,1071.0 1557.5,1100.3 1557.5,1084.0 1558.5,1069.3 1558.5,1069.3 1558.5,1094.0 1558.5,1079.0 1559.5,1082.3 1559.5,1070.6 1559.5,1099.3 1559.5,1090.0 1560.5,1070.6 1560.5,1068.5 1560.5,1093.8 1560.5,1091.2 1561.5,1075.0 1561.5,1071.6 1561.5,1095.3 1561.5,1084.2 1562.5,1075.9 1562.5,1070.2 1562.5,1092.3 1562.5,1089.8 1563.5,1083.1 1563.5,1070.9 1563.5,1099.0 1563.5,1077.6 1564.5,1075.9 1564.5,1071.1 1564.5,1096.4 1564.5,1082.9 1565.5,1083.0 1565.5,1071.6 1565.5,1093.7 1565.5,1071.6 1566.5,1083.5 1566.5,1072.3 1566.5,1089.9 1566.5,1080.5 1567.5,1090.9 1567.5,1062.0 1567.5,1094.8 1567.5,1073.6 1568.5,1077.8 1568.5,1070.9 1568.5,1099.1 1568.5,1076.8 1569.5,1073.3 1569.5,1071.0 1569.5,1094.2 1569.5,1079.9 1570.5,1080.1 1570.5,1070.5 1570.5,1096.3 1570.5,1082.2 1571.5,1080.1 1571.5,1071.5 1571.5,1092.5 1571.5,1083.1 1572.5,1075.8 1572.5,1071.5 1572.5,1105.1 1572.5,1088.4 1573.5,1079.5 1573.5,1068.0 1573.5,1094.1 1573.5,1075.5 1574.5,1086.4 1574.5,1068.2 1574.5,1093.1 1574.5,1087.9 1575.5,1083.9 1575.5,1071.5 1575.5,1091.2 1575.5,1091.2 1576.5,1081.0 1576.5,1068.9 1576.5,1092.6 1576.5,1092.6 1577.5,1085.9 1577.5,1069.2 1577.5,1095.9 1577.5,1075.1 1578.5,1088.0 1578.5,1069.2 1578.5,1096.2 1578.5,1080.7 1579.5,1081.2 1579.5,1071.8 1579.5,1095.1 1579.5,1086.9 1580.5,1079.5 1580.5,1070.5 1580.5,1093.5 1580.5,1080.4 1581.5,1078.3 1581.5,1069.1 1581.5,1097.9 1581.5,1086.4 1582.5,1081.8 1582.5,1072.6 1582.5,1093.9 1582.5,1079.6 1583.5,1088.6 1583.5,1069.5 1583.5,1094.7 1583.5,1091.4 1584.5,1085.5 1584.5,1070.1 1584.5,1092.7 1584.5,1077.1 1585.5,1078.4 1585.5,1068.7 1585.5,1104.3 1585.5,1078.1 1586.5,1082.8 1586.5,1072.4 1586.5,1095.9 1586.5,1083.5 1587.5,1080.6 1587.5,1071.4 1587.5,1093.3 1587.5,1088.5 1588.5,1084.6 1588.5,1066.7 1588.5,1096.7 1588.5,1080.8 1589.5,1087.1 1589.5,1050.0 1589.5,1097.6 1589.5,1077.4 1590.5,1090.7 1590.5,1072.8 1590.5,1105.0 1590.5,1093.5 1591.5,1079.5 1591.5,1073.0 1591.5,1101.1 1591.5,1083.0 1592.5,1087.0 1592.5,1074.7 1592.5,1098.6 1592.5,1091.6 1593.5,1079.4 1593.5,1079.0 1593.5,1099.7 1593.5,1087.9 1594.5,1089.9 1594.5,1079.7 1594.5,1104.3 1594.5,1095.7 1595.5,1085.9 1595.5,1080.4 1595.5,1109.5 1595.5,1093.1 1596.5,1092.8 1596.5,1088.1 1596.5,1109.5 1596.5,1101.2 1597.5,1097.0 1597.5,1093.3 1597.5,1109.5 1597.5,1104.5 1598.5,1109.5 1598.5,1099.2 1598.5,1109.5 1598.5,1109.5 1599.5,1109.5 1599.5,1103.1 1599.5,1109.5 1599.5,1104.2" fill="none" stroke="#ffff00" stroke-width="1"/><path d="M926 993L927 775L928 731L929.5 775L930.5 996" stroke="#ffff00" stroke-width="1.1" fill="none"/><g fill="#ffff00"><rect x="1599" y="697" width="5" height="1.2"/><rect x="1607" y="697" width="5" height="1.2"/><rect x="1614" y="697" width="3.5" height="1.2"/><rect x="1599" y="699" width="5" height="1.2"/><rect x="1607" y="699" width="5" height="1.2"/><rect x="1614" y="699" width="3.5" height="1.2"/><rect x="1599" y="701" width="5" height="1.2"/><rect x="1607" y="701" width="5" height="1.2"/><rect x="1614" y="701" width="3.5" height="1.2"/><rect x="1599" y="703" width="3" height="5.5"/><path d="M1603 703h4.5l-1 5.5h-2.5z"/><rect x="1609" y="703" width="2.5" height="5.5"/><rect x="1614" y="703" width="3.3" height="5.5"/></g><text x="75" y="698" font-family="Liberation Sans" font-size="14" font-weight="bold" fill="#ffff00" text-anchor="end">0</text><text x="75" y="739" font-family="Liberation Sans" font-size="14" font-weight="bold" fill="#ffff00" text-anchor="end">-18</text><text x="75" y="781" font-family="Liberation Sans" font-size="14" font-weight="bold" fill="#ffff00" text-anchor="end">-36</text><text x="75" y="823" font-family="Liberation Sans" font-size="14" font-weight="bold" fill="#ffff00" text-anchor="end">-54</text><text x="75" y="864" font-family="Liberation Sans" font-size="14" font-weight="bold" fill="#ffff00" text-anchor="end">-72</text><text x="75" y="906" font-family="Liberation Sans" font-size="14" font-weight="bold" fill="#ffff00" text-anchor="end">-90</text><text x="75" y="948" font-family="Liberation Sans" font-size="14" font-weight="bold" fill="#ffff00" text-anchor="end">-108</text><text x="75" y="989" font-family="Liberation Sans" font-size="14" font-weight="bold" fill="#ffff00" text-anchor="end">-126</text><text x="75" y="1031" font-family="Liberation Sans" font-size="14" font-weight="bold" fill="#ffff00" text-anchor="end">-144</text><text x="75" y="1073" font-family="Liberation Sans" font-size="14" font-weight="bold" fill="#ffff00" text-anchor="end">-162</text><text x="75" y="1115" font-family="Liberation Sans" font-size="14" font-weight="bold" fill="#ffff00" text-anchor="end">-180</text><text x="77.7" y="1126.5" font-family="Liberation Sans" font-size="14" font-weight="bold" fill="#ffffff" text-anchor="middle" textLength="15.5" lengthAdjust="spacingAndGlyphs">20</text><text x="276.7" y="1126.5" font-family="Liberation Sans" font-size="14" font-weight="bold" fill="#ffffff" text-anchor="middle" textLength="16" lengthAdjust="spacingAndGlyphs">50</text><text x="427.2" y="1126.5" font-family="Liberation Sans" font-size="14" font-weight="bold" fill="#ffffff" text-anchor="middle" textLength="23" lengthAdjust="spacingAndGlyphs">100</text><text x="577.7" y="1126.5" font-family="Liberation Sans" font-size="14" font-weight="bold" fill="#ffffff" text-anchor="middle" textLength="24" lengthAdjust="spacingAndGlyphs">200</text><text x="776.7" y="1126.5" font-family="Liberation Sans" font-size="14" font-weight="bold" fill="#ffffff" text-anchor="middle" textLength="23.5" lengthAdjust="spacingAndGlyphs">500</text><text x="927.2" y="1126.5" font-family="Liberation Sans" font-size="14" font-weight="bold" fill="#ffffff" text-anchor="middle" textLength="16" lengthAdjust="spacingAndGlyphs">1k</text><text x="1077.7" y="1126.5" font-family="Liberation Sans" font-size="14" font-weight="bold" fill="#ffffff" text-anchor="middle" textLength="17" lengthAdjust="spacingAndGlyphs">2k</text><text x="1276.7" y="1126.5" font-family="Liberation Sans" font-size="14" font-weight="bold" fill="#ffffff" text-anchor="middle" textLength="17" lengthAdjust="spacingAndGlyphs">5k</text><text x="1427.2" y="1126.5" font-family="Liberation Sans" font-size="14" font-weight="bold" fill="#ffffff" text-anchor="middle" textLength="23.5" lengthAdjust="spacingAndGlyphs">10k</text><text x="1577.7" y="1126.5" font-family="Liberation Sans" font-size="14" font-weight="bold" fill="#ffffff" text-anchor="middle" textLength="23.5" lengthAdjust="spacingAndGlyphs">20k</text><text x="14.5" y="1141" font-family="Liberation Sans" font-size="14" font-weight="bold" fill="#ffffff" text-anchor="start" textLength="282.0" lengthAdjust="spacingAndGlyphs">FFT Segments:1   Resolution: 1.46484Hz</text><text x="729.5" y="1140.5" font-family="Liberation Sans" font-size="14" font-weight="bold" fill="#ffffff" text-anchor="start" textLength="237.0" lengthAdjust="spacingAndGlyphs">AMPLITUDE SPECTRUM In dBFS</text><text x="1422" y="1140.5" font-family="Liberation Sans" font-size="14" font-weight="bold" fill="#ffffff" text-anchor="start" textLength="141" lengthAdjust="spacingAndGlyphs">Averaged Frames: 4</text><text x="1619.5" y="1138" font-family="Liberation Sans" font-size="14" font-weight="bold" fill="#ffffff" text-anchor="start" textLength="19.5" lengthAdjust="spacingAndGlyphs">Hz</text><text x="17.5" y="674" font-family="Liberation Sans" font-size="14" font-weight="bold" fill="#ffff00" text-anchor="start" textLength="60.0" lengthAdjust="spacingAndGlyphs">A(dBFS)</text><text x="275.5" y="674" font-family="Liberation Sans" font-size="14" font-weight="bold" fill="#ffff00" text-anchor="start" textLength="140.5" lengthAdjust="spacingAndGlyphs">A: Peak Frequency=</text><text x="446" y="674" font-family="Liberation Sans" font-size="14" font-weight="bold" fill="#ffff00" text-anchor="start" textLength="42.5" lengthAdjust="spacingAndGlyphs">998.88</text><text x="508.5" y="674" font-family="Liberation Sans" font-size="14" font-weight="bold" fill="#ffff00" text-anchor="start" textLength="17.5" lengthAdjust="spacingAndGlyphs">Hz</text><text x="537.5" y="674" font-family="Liberation Sans" font-size="14" font-weight="bold" fill="#ffff00" text-anchor="start" textLength="36.5" lengthAdjust="spacingAndGlyphs">THD=</text><text x="595" y="674" font-family="Liberation Sans" font-size="14" font-weight="bold" fill="#ffff00" text-anchor="start" textLength="79" lengthAdjust="spacingAndGlyphs">0.00004 % (</text><text x="682" y="674" font-family="Liberation Sans" font-size="14" font-weight="bold" fill="#ffff00" text-anchor="start" textLength="76.5" lengthAdjust="spacingAndGlyphs">-127.82 dB)</text><text x="768.5" y="674" font-family="Liberation Sans" font-size="14" font-weight="bold" fill="#ffff00" text-anchor="start" textLength="57.5" lengthAdjust="spacingAndGlyphs">THD+N=</text><text x="847" y="674" font-family="Liberation Sans" font-size="14" font-weight="bold" fill="#ffff00" text-anchor="start" textLength="79" lengthAdjust="spacingAndGlyphs">0.00049 % (</text><text x="933.5" y="674" font-family="Liberation Sans" font-size="14" font-weight="bold" fill="#ffff00" text-anchor="start" textLength="77.5" lengthAdjust="spacingAndGlyphs">-106.22 dB)</text><text x="1020.5" y="674" font-family="Liberation Sans" font-size="14" font-weight="bold" fill="#ffff00" text-anchor="start" textLength="53.5" lengthAdjust="spacingAndGlyphs">SINAD=</text><text x="1087.5" y="674" font-family="Liberation Sans" font-size="14" font-weight="bold" fill="#ffff00" text-anchor="start" textLength="66.5" lengthAdjust="spacingAndGlyphs">106.22 dB</text><text x="1165" y="674" font-family="Liberation Sans" font-size="14" font-weight="bold" fill="#ffff00" text-anchor="start" textLength="39" lengthAdjust="spacingAndGlyphs">SNR=</text><text x="1216.5" y="674" font-family="Liberation Sans" font-size="14" font-weight="bold" fill="#ffff00" text-anchor="start" textLength="66.5" lengthAdjust="spacingAndGlyphs">106.26 dB</text><text x="1292.5" y="674" font-family="Liberation Sans" font-size="14" font-weight="bold" fill="#ffff00" text-anchor="start" textLength="27.5" lengthAdjust="spacingAndGlyphs">NL=</text><text x="1328" y="674" font-family="Liberation Sans" font-size="14" font-weight="bold" fill="#ffff00" text-anchor="start" textLength="91.5" lengthAdjust="spacingAndGlyphs">-118.00 dBFS</text></svg><div class="a" style="left:1918px;top:97px;width:2px;height:1060px;background:#f0f0f0"></div>
<div class="a" style="left:1680px;top:99px;width:232px;height:116px;background:#000;box-shadow:0 0 6px 2px rgba(0,0,0,0.28)"></div>
<div class="a" style="left:1680px;top:99px;width:232px;height:30px;background:#fff"></div>
<svg class="a" style="left:1689px;top:105px" width="17" height="17" viewBox="0 0 17 17"><text x="0" y="6.6" font-family="Liberation Sans" font-weight="bold" font-size="7" textLength="14" lengthAdjust="spacingAndGlyphs"><tspan fill="#0000ff">D</tspan><tspan fill="#ff0000">D</tspan><tspan fill="#00c000">P</tspan></text><circle cx="7" cy="11" r="3" fill="none" stroke="#000" stroke-width="1.1"/><path d="M5.5 11h3M7 9.5v3M9.2 13.2l2.6 2.6" stroke="#000" stroke-width="1"/></svg>
<div class="t" style="left:1710px;top:108px;font-size:12px;color:#999">THD (Ch. A)</div>
<div class="a" style="left:1793px;top:113px;width:10px;height:1px;background:#555"></div>
<div class="a" style="left:1838px;top:108px;width:10px;height:10px;border:1px solid #555"></div>
<svg class="a" style="left:1884px;top:108px" width="11" height="11" viewBox="0 0 11 11"><path d="M0.5 0.5l10 10M10.5 0.5l-10 10" stroke="#6a6a6a" stroke-width="0.9"/></svg>
<svg class="a" style="left:1680px;top:129px" width="232" height="86" viewBox="1680 129 232 86"><g transform="translate(1693.5 167.7) scale(0.440 1)"><ellipse cx="0" cy="0" rx="11.6" ry="19.8" fill="none" stroke="#ffff00" stroke-width="9"/></g><text transform="translate(1712.5 192) scale(0.440 1)" text-anchor="middle" font-family="Liberation Mono" font-weight="bold" font-size="72" fill="#ffff00">.</text><g transform="translate(1731.5 167.7) scale(0.440 1)"><ellipse cx="0" cy="0" rx="11.6" ry="19.8" fill="none" stroke="#ffff00" stroke-width="9"/></g><g transform="translate(1750.5 167.7) scale(0.440 1)"><ellipse cx="0" cy="0" rx="11.6" ry="19.8" fill="none" stroke="#ffff00" stroke-width="9"/></g><g transform="translate(1769.5 167.7) scale(0.440 1)"><ellipse cx="0" cy="0" rx="11.6" ry="19.8" fill="none" stroke="#ffff00" stroke-width="9"/></g><g transform="translate(1788.5 167.7) scale(0.440 1)"><ellipse cx="0" cy="0" rx="11.6" ry="19.8" fill="none" stroke="#ffff00" stroke-width="9"/></g><text transform="translate(1807.5 192) scale(0.440 1)" text-anchor="middle" font-family="Liberation Mono" font-weight="bold" font-size="72" fill="#ffff00">4</text><g transform="translate(1826.5 167.7) scale(0.440 1)"><ellipse cx="0" cy="0" rx="11.6" ry="19.8" fill="none" stroke="#ffff00" stroke-width="9"/></g><text transform="translate(1845.5 192) scale(0.440 1)" text-anchor="middle" font-family="Liberation Mono" font-weight="bold" font-size="72" fill="#ffff00">6</text><text transform="translate(1864.5 192) scale(0.440 1)" text-anchor="middle" font-family="Liberation Mono" font-weight="bold" font-size="72" fill="#ffff00">4</text><text transform="translate(1902.5 192) scale(0.440 1)" text-anchor="middle" font-family="Liberation Mono" font-weight="bold" font-size="72" fill="#ffff00">%</text></svg>
<div class="a" style="left:1680px;top:225px;width:232px;height:116px;background:#000;box-shadow:0 0 6px 2px rgba(0,0,0,0.28)"></div>
<div class="a" style="left:1680px;top:225px;width:232px;height:30px;background:#fff"></div>
<svg class="a" style="left:1689px;top:231px" width="17" height="17" viewBox="0 0 17 17"><text x="0" y="6.6" font-family="Liberation Sans" font-weight="bold" font-size="7" textLength="14" lengthAdjust="spacingAndGlyphs"><tspan fill="#0000ff">D</tspan><tspan fill="#ff0000">D</tspan><tspan fill="#00c000">P</tspan></text><circle cx="7" cy="11" r="3" fill="none" stroke="#000" stroke-width="1.1"/><path d="M5.5 11h3M7 9.5v3M9.2 13.2l2.6 2.6" stroke="#000" stroke-width="1"/></svg>
<div class="t" style="left:1710px;top:234px;font-size:12px;color:#999">THD+N (C...</div>
<div class="a" style="left:1793px;top:239px;width:10px;height:1px;background:#555"></div>
<div class="a" style="left:1838px;top:234px;width:10px;height:10px;border:1px solid #555"></div>
<svg class="a" style="left:1884px;top:234px" width="11" height="11" viewBox="0 0 11 11"><path d="M0.5 0.5l10 10M10.5 0.5l-10 10" stroke="#6a6a6a" stroke-width="0.9"/></svg>
<svg class="a" style="left:1680px;top:255px" width="232" height="86" viewBox="1680 255 232 86"><g transform="translate(1693.5 293.7) scale(0.440 1)"><ellipse cx="0" cy="0" rx="11.6" ry="19.8" fill="none" stroke="#ffff00" stroke-width="9"/></g><text transform="translate(1712.5 318) scale(0.440 1)" text-anchor="middle" font-family="Liberation Mono" font-weight="bold" font-size="72" fill="#ffff00">.</text><g transform="translate(1731.5 293.7) scale(0.440 1)"><ellipse cx="0" cy="0" rx="11.6" ry="19.8" fill="none" stroke="#ffff00" stroke-width="9"/></g><g transform="translate(1750.5 293.7) scale(0.440 1)"><ellipse cx="0" cy="0" rx="11.6" ry="19.8" fill="none" stroke="#ffff00" stroke-width="9"/></g><g transform="translate(1769.5 293.7) scale(0.440 1)"><ellipse cx="0" cy="0" rx="11.6" ry="19.8" fill="none" stroke="#ffff00" stroke-width="9"/></g><text transform="translate(1788.5 318) scale(0.440 1)" text-anchor="middle" font-family="Liberation Mono" font-weight="bold" font-size="72" fill="#ffff00">4</text><text transform="translate(1807.5 318) scale(0.440 1)" text-anchor="middle" font-family="Liberation Mono" font-weight="bold" font-size="72" fill="#ffff00">8</text><text transform="translate(1826.5 318) scale(0.440 1)" text-anchor="middle" font-family="Liberation Mono" font-weight="bold" font-size="72" fill="#ffff00">8</text><text transform="translate(1845.5 318) scale(0.440 1)" text-anchor="middle" font-family="Liberation Mono" font-weight="bold" font-size="72" fill="#ffff00">7</text><g transform="translate(1864.5 293.7) scale(0.440 1)"><ellipse cx="0" cy="0" rx="11.6" ry="19.8" fill="none" stroke="#ffff00" stroke-width="9"/></g><text transform="translate(1902.5 318) scale(0.440 1)" text-anchor="middle" font-family="Liberation Mono" font-weight="bold" font-size="72" fill="#ffff00">%</text></svg>
<div class="a" style="left:1680px;top:351px;width:232px;height:116px;background:#000;box-shadow:0 0 6px 2px rgba(0,0,0,0.28)"></div>
<div class="a" style="left:1680px;top:351px;width:232px;height:30px;background:#fff"></div>
<svg class="a" style="left:1689px;top:357px" width="17" height="17" viewBox="0 0 17 17"><text x="0" y="6.6" font-family="Liberation Sans" font-weight="bold" font-size="7" textLength="14" lengthAdjust="spacingAndGlyphs"><tspan fill="#0000ff">D</tspan><tspan fill="#ff0000">D</tspan><tspan fill="#00c000">P</tspan></text><circle cx="7" cy="11" r="3" fill="none" stroke="#000" stroke-width="1.1"/><path d="M5.5 11h3M7 9.5v3M9.2 13.2l2.6 2.6" stroke="#000" stroke-width="1"/></svg>
<div class="t" style="left:1710px;top:360px;font-size:12px;color:#999">SINAD (C...</div>
<div class="a" style="left:1793px;top:365px;width:10px;height:1px;background:#555"></div>
<div class="a" style="left:1838px;top:360px;width:10px;height:10px;border:1px solid #555"></div>
<svg class="a" style="left:1884px;top:360px" width="11" height="11" viewBox="0 0 11 11"><path d="M0.5 0.5l10 10M10.5 0.5l-10 10" stroke="#6a6a6a" stroke-width="0.9"/></svg>
<svg class="a" style="left:1680px;top:381px" width="232" height="86" viewBox="1680 381 232 86"><text transform="translate(1701.3 444) scale(0.569 1)" text-anchor="middle" font-family="Liberation Mono" font-weight="bold" font-size="72" fill="#ffff00">1</text><g transform="translate(1725.9 419.7) scale(0.569 1)"><ellipse cx="0" cy="0" rx="15.7" ry="19.8" fill="none" stroke="#ffff00" stroke-width="9"/></g><text transform="translate(1750.5 444) scale(0.569 1)" text-anchor="middle" font-family="Liberation Mono" font-weight="bold" font-size="72" fill="#ffff00">6</text><text transform="translate(1775.1 444) scale(0.569 1)" text-anchor="middle" font-family="Liberation Mono" font-weight="bold" font-size="72" fill="#ffff00">.</text><text transform="translate(1799.7 444) scale(0.569 1)" text-anchor="middle" font-family="Liberation Mono" font-weight="bold" font-size="72" fill="#ffff00">2</text><text transform="translate(1824.3 444) scale(0.569 1)" text-anchor="middle" font-family="Liberation Mono" font-weight="bold" font-size="72" fill="#ffff00">2</text><text transform="translate(1873.5 444) scale(0.569 1)" text-anchor="middle" font-family="Liberation Mono" font-weight="bold" font-size="72" fill="#ffff00">d</text><text transform="translate(1898.1 444) scale(0.569 1)" text-anchor="middle" font-family="Liberation Mono" font-weight="bold" font-size="72" fill="#ffff00">B</text></svg>
<div class="a" style="left:1680px;top:477px;width:232px;height:116px;background:#000;box-shadow:0 0 6px 2px rgba(0,0,0,0.28)"></div>
<div class="a" style="left:1680px;top:477px;width:232px;height:30px;background:#fff"></div>
<svg class="a" style="left:1689px;top:483px" width="17" height="17" viewBox="0 0 17 17"><text x="0" y="6.6" font-family="Liberation Sans" font-weight="bold" font-size="7" textLength="14" lengthAdjust="spacingAndGlyphs"><tspan fill="#0000ff">D</tspan><tspan fill="#ff0000">D</tspan><tspan fill="#00c000">P</tspan></text><circle cx="7" cy="11" r="3" fill="none" stroke="#000" stroke-width="1.1"/><path d="M5.5 11h3M7 9.5v3M9.2 13.2l2.6 2.6" stroke="#000" stroke-width="1"/></svg>
<div class="t" style="left:1710px;top:486px;font-size:12px;color:#999">SNR (Ch. A)</div>
<div class="a" style="left:1793px;top:491px;width:10px;height:1px;background:#555"></div>
<div class="a" style="left:1838px;top:486px;width:10px;height:10px;border:1px solid #555"></div>
<svg class="a" style="left:1884px;top:486px" width="11" height="11" viewBox="0 0 11 11"><path d="M0.5 0.5l10 10M10.5 0.5l-10 10" stroke="#6a6a6a" stroke-width="0.9"/></svg>
<svg class="a" style="left:1680px;top:507px" width="232" height="86" viewBox="1680 507 232 86"><text transform="translate(1701.3 570) scale(0.569 1)" text-anchor="middle" font-family="Liberation Mono" font-weight="bold" font-size="72" fill="#ffff00">1</text><g transform="translate(1725.9 545.7) scale(0.569 1)"><ellipse cx="0" cy="0" rx="15.7" ry="19.8" fill="none" stroke="#ffff00" stroke-width="9"/></g><text transform="translate(1750.5 570) scale(0.569 1)" text-anchor="middle" font-family="Liberation Mono" font-weight="bold" font-size="72" fill="#ffff00">6</text><text transform="translate(1775.1 570) scale(0.569 1)" text-anchor="middle" font-family="Liberation Mono" font-weight="bold" font-size="72" fill="#ffff00">.</text><text transform="translate(1799.7 570) scale(0.569 1)" text-anchor="middle" font-family="Liberation Mono" font-weight="bold" font-size="72" fill="#ffff00">2</text><text transform="translate(1824.3 570) scale(0.569 1)" text-anchor="middle" font-family="Liberation Mono" font-weight="bold" font-size="72" fill="#ffff00">6</text><text transform="translate(1873.5 570) scale(0.569 1)" text-anchor="middle" font-family="Liberation Mono" font-weight="bold" font-size="72" fill="#ffff00">d</text><text transform="translate(1898.1 570) scale(0.569 1)" text-anchor="middle" font-family="Liberation Mono" font-weight="bold" font-size="72" fill="#ffff00">B</text></svg>
<div class="a" style="left:1680px;top:603px;width:232px;height:116px;background:#000;box-shadow:0 0 6px 2px rgba(0,0,0,0.28)"></div>
<div class="a" style="left:1680px;top:603px;width:232px;height:30px;background:#fff"></div>
<svg class="a" style="left:1689px;top:609px" width="17" height="17" viewBox="0 0 17 17"><text x="0" y="6.6" font-family="Liberation Sans" font-weight="bold" font-size="7" textLength="14" lengthAdjust="spacingAndGlyphs"><tspan fill="#0000ff">D</tspan><tspan fill="#ff0000">D</tspan><tspan fill="#00c000">P</tspan></text><circle cx="7" cy="11" r="3" fill="none" stroke="#000" stroke-width="1.1"/><path d="M5.5 11h3M7 9.5v3M9.2 13.2l2.6 2.6" stroke="#000" stroke-width="1"/></svg>
<div class="t" style="left:1710px;top:612px;font-size:12px;color:#999">THD (Ch. B)</div>
<div class="a" style="left:1793px;top:617px;width:10px;height:1px;background:#555"></div>
<div class="a" style="left:1838px;top:612px;width:10px;height:10px;border:1px solid #555"></div>
<svg class="a" style="left:1884px;top:612px" width="11" height="11" viewBox="0 0 11 11"><path d="M0.5 0.5l10 10M10.5 0.5l-10 10" stroke="#6a6a6a" stroke-width="0.9"/></svg>
<svg class="a" style="left:1680px;top:633px" width="232" height="86" viewBox="1680 633 232 86"><g transform="translate(0 0)"><path d="M1699 662C1699 654.5 1711 654.5 1721 654.5C1735 654.5 1744 658 1744 664.5C1744 671 1733 673 1724 676C1720 677.5 1719 679 1719 681" fill="none" stroke="#00ff00" stroke-width="8.5" stroke-linecap="round"/><circle cx="1700" cy="662" r="6.3" fill="#00ff00"/><ellipse cx="1719.5" cy="692.7" rx="9.2" ry="4.4" fill="#00ff00"/></g><g transform="translate(77.5 0)"><path d="M1699 662C1699 654.5 1711 654.5 1721 654.5C1735 654.5 1744 658 1744 664.5C1744 671 1733 673 1724 676C1720 677.5 1719 679 1719 681" fill="none" stroke="#00ff00" stroke-width="8.5" stroke-linecap="round"/><circle cx="1700" cy="662" r="6.3" fill="#00ff00"/><ellipse cx="1719.5" cy="692.7" rx="9.2" ry="4.4" fill="#00ff00"/></g><g transform="translate(154.5 0)"><path d="M1699 662C1699 654.5 1711 654.5 1721 654.5C1735 654.5 1744 658 1744 664.5C1744 671 1733 673 1724 676C1720 677.5 1719 679 1719 681" fill="none" stroke="#00ff00" stroke-width="8.5" stroke-linecap="round"/><circle cx="1700" cy="662" r="6.3" fill="#00ff00"/><ellipse cx="1719.5" cy="692.7" rx="9.2" ry="4.4" fill="#00ff00"/></g></svg>
<div class="a" style="left:1680px;top:729px;width:232px;height:116px;background:#000;box-shadow:0 0 6px 2px rgba(0,0,0,0.28)"></div>
<div class="a" style="left:1680px;top:729px;width:232px;height:30px;background:#fff"></div>
<svg class="a" style="left:1689px;top:735px" width="17" height="17" viewBox="0 0 17 17"><text x="0" y="6.6" font-family="Liberation Sans" font-weight="bold" font-size="7" textLength="14" lengthAdjust="spacingAndGlyphs"><tspan fill="#0000ff">D</tspan><tspan fill="#ff0000">D</tspan><tspan fill="#00c000">P</tspan></text><circle cx="7" cy="11" r="3" fill="none" stroke="#000" stroke-width="1.1"/><path d="M5.5 11h3M7 9.5v3M9.2 13.2l2.6 2.6" stroke="#000" stroke-width="1"/></svg>
<div class="t" style="left:1710px;top:738px;font-size:12px;color:#999">THD+N (C...</div>
<div class="a" style="left:1793px;top:743px;width:10px;height:1px;background:#555"></div>
<div class="a" style="left:1838px;top:738px;width:10px;height:10px;border:1px solid #555"></div>
<svg class="a" style="left:1884px;top:738px" width="11" height="11" viewBox="0 0 11 11"><path d="M0.5 0.5l10 10M10.5 0.5l-10 10" stroke="#6a6a6a" stroke-width="0.9"/></svg>
<svg class="a" style="left:1680px;top:759px" width="232" height="86" viewBox="1680 759 232 86"><g transform="translate(0 126)"><path d="M1699 662C1699 654.5 1711 654.5 1721 654.5C1735 654.5 1744 658 1744 664.5C1744 671 1733 673 1724 676C1720 677.5 1719 679 1719 681" fill="none" stroke="#00ff00" stroke-width="8.5" stroke-linecap="round"/><circle cx="1700" cy="662" r="6.3" fill="#00ff00"/><ellipse cx="1719.5" cy="692.7" rx="9.2" ry="4.4" fill="#00ff00"/></g><g transform="translate(77.5 126)"><path d="M1699 662C1699 654.5 1711 654.5 1721 654.5C1735 654.5 1744 658 1744 664.5C1744 671 1733 673 1724 676C1720 677.5 1719 679 1719 681" fill="none" stroke="#00ff00" stroke-width="8.5" stroke-linecap="round"/><circle cx="1700" cy="662" r="6.3" fill="#00ff00"/><ellipse cx="1719.5" cy="692.7" rx="9.2" ry="4.4" fill="#00ff00"/></g><g transform="translate(154.5 126)"><path d="M1699 662C1699 654.5 1711 654.5 1721 654.5C1735 654.5 1744 658 1744 664.5C1744 671 1733 673 1724 676C1720 677.5 1719 679 1719 681" fill="none" stroke="#00ff00" stroke-width="8.5" stroke-linecap="round"/><circle cx="1700" cy="662" r="6.3" fill="#00ff00"/><ellipse cx="1719.5" cy="692.7" rx="9.2" ry="4.4" fill="#00ff00"/></g></svg>
<div class="a" style="left:1680px;top:855px;width:232px;height:116px;background:#000;box-shadow:0 0 6px 2px rgba(0,0,0,0.28)"></div>
<div class="a" style="left:1680px;top:855px;width:232px;height:30px;background:#fff"></div>
<svg class="a" style="left:1689px;top:861px" width="17" height="17" viewBox="0 0 17 17"><text x="0" y="6.6" font-family="Liberation Sans" font-weight="bold" font-size="7" textLength="14" lengthAdjust="spacingAndGlyphs"><tspan fill="#0000ff">D</tspan><tspan fill="#ff0000">D</tspan><tspan fill="#00c000">P</tspan></text><circle cx="7" cy="11" r="3" fill="none" stroke="#000" stroke-width="1.1"/><path d="M5.5 11h3M7 9.5v3M9.2 13.2l2.6 2.6" stroke="#000" stroke-width="1"/></svg>
<div class="t" style="left:1710px;top:864px;font-size:12px;color:#999">SINAD (C...</div>
<div class="a" style="left:1793px;top:869px;width:10px;height:1px;background:#555"></div>
<div class="a" style="left:1838px;top:864px;width:10px;height:10px;border:1px solid #555"></div>
<svg class="a" style="left:1884px;top:864px" width="11" height="11" viewBox="0 0 11 11"><path d="M0.5 0.5l10 10M10.5 0.5l-10 10" stroke="#6a6a6a" stroke-width="0.9"/></svg>
<svg class="a" style="left:1680px;top:885px" width="232" height="86" viewBox="1680 885 232 86"><g transform="translate(0 252)"><path d="M1699 662C1699 654.5 1711 654.5 1721 654.5C1735 654.5 1744 658 1744 664.5C1744 671 1733 673 1724 676C1720 677.5 1719 679 1719 681" fill="none" stroke="#00ff00" stroke-width="8.5" stroke-linecap="round"/><circle cx="1700" cy="662" r="6.3" fill="#00ff00"/><ellipse cx="1719.5" cy="692.7" rx="9.2" ry="4.4" fill="#00ff00"/></g><g transform="translate(77.5 252)"><path d="M1699 662C1699 654.5 1711 654.5 1721 654.5C1735 654.5 1744 658 1744 664.5C1744 671 1733 673 1724 676C1720 677.5 1719 679 1719 681" fill="none" stroke="#00ff00" stroke-width="8.5" stroke-linecap="round"/><circle cx="1700" cy="662" r="6.3" fill="#00ff00"/><ellipse cx="1719.5" cy="692.7" rx="9.2" ry="4.4" fill="#00ff00"/></g><g transform="translate(154.5 252)"><path d="M1699 662C1699 654.5 1711 654.5 1721 654.5C1735 654.5 1744 658 1744 664.5C1744 671 1733 673 1724 676C1720 677.5 1719 679 1719 681" fill="none" stroke="#00ff00" stroke-width="8.5" stroke-linecap="round"/><circle cx="1700" cy="662" r="6.3" fill="#00ff00"/><ellipse cx="1719.5" cy="692.7" rx="9.2" ry="4.4" fill="#00ff00"/></g></svg>
<div class="a" style="left:1680px;top:981px;width:232px;height:116px;background:#000;box-shadow:0 0 6px 2px rgba(0,0,0,0.28)"></div>
<div class="a" style="left:1680px;top:981px;width:232px;height:30px;background:#fff"></div>
<svg class="a" style="left:1689px;top:987px" width="17" height="17" viewBox="0 0 17 17"><text x="0" y="6.6" font-family="Liberation Sans" font-weight="bold" font-size="7" textLength="14" lengthAdjust="spacingAndGlyphs"><tspan fill="#0000ff">D</tspan><tspan fill="#ff0000">D</tspan><tspan fill="#00c000">P</tspan></text><circle cx="7" cy="11" r="3" fill="none" stroke="#000" stroke-width="1.1"/><path d="M5.5 11h3M7 9.5v3M9.2 13.2l2.6 2.6" stroke="#000" stroke-width="1"/></svg>
<div class="t" style="left:1710px;top:990px;font-size:12px;color:#999">SNR (Ch. B)</div>
<div class="a" style="left:1793px;top:995px;width:10px;height:1px;background:#555"></div>
<div class="a" style="left:1838px;top:990px;width:10px;height:10px;border:1px solid #555"></div>
<svg class="a" style="left:1884px;top:990px" width="11" height="11" viewBox="0 0 11 11"><path d="M0.5 0.5l10 10M10.5 0.5l-10 10" stroke="#6a6a6a" stroke-width="0.9"/></svg>
<svg class="a" style="left:1680px;top:1011px" width="232" height="86" viewBox="1680 1011 232 86"><g transform="translate(0 378)"><path d="M1699 662C1699 654.5 1711 654.5 1721 654.5C1735 654.5 1744 658 1744 664.5C1744 671 1733 673 1724 676C1720 677.5 1719 679 1719 681" fill="none" stroke="#00ff00" stroke-width="8.5" stroke-linecap="round"/><circle cx="1700" cy="662" r="6.3" fill="#00ff00"/><ellipse cx="1719.5" cy="692.7" rx="9.2" ry="4.4" fill="#00ff00"/></g><g transform="translate(77.5 378)"><path d="M1699 662C1699 654.5 1711 654.5 1721 654.5C1735 654.5 1744 658 1744 664.5C1744 671 1733 673 1724 676C1720 677.5 1719 679 1719 681" fill="none" stroke="#00ff00" stroke-width="8.5" stroke-linecap="round"/><circle cx="1700" cy="662" r="6.3" fill="#00ff00"/><ellipse cx="1719.5" cy="692.7" rx="9.2" ry="4.4" fill="#00ff00"/></g><g transform="translate(154.5 378)"><path d="M1699 662C1699 654.5 1711 654.5 1721 654.5C1735 654.5 1744 658 1744 664.5C1744 671 1733 673 1724 676C1720 677.5 1719 679 1719 681" fill="none" stroke="#00ff00" stroke-width="8.5" stroke-linecap="round"/><circle cx="1700" cy="662" r="6.3" fill="#00ff00"/><ellipse cx="1719.5" cy="692.7" rx="9.2" ry="4.4" fill="#00ff00"/></g></svg><div class="a tb" style="left:0;top:1157px;width:1920px;height:25px"></div>
<div class="a" style="left:0;top:1157px;width:1920px;height:1px;background:#808080"></div>
<div class="a" style="left:1px;top:1159px;width:2px;height:23px;background:#000"></div><div class="a" style="left:3px;top:1159px;width:2px;height:23px;background:#a0a0a0"></div><div class="a" style="left:5px;top:1159px;width:2px;height:23px;background:#000"></div>
<div class="a" style="left:8px;top:1159px;width:21px;height:23px;border-left:1px solid #fff;border-top:1px solid #fff;border-right:1px solid #a0a0a0"></div>
<div class="a" style="left:303px;top:1159px;width:21px;height:23px;border-left:1px solid #fff;border-top:1px solid #fff;border-right:1px solid #a0a0a0"></div>
<div class="a" style="left:590px;top:1159px;width:25px;height:23px;border-left:1px solid #fff;border-top:1px solid #fff;border-right:1px solid #a0a0a0"></div>
<div class="a" style="left:923px;top:1159px;width:21px;height:23px;border-left:1px solid #fff;border-top:1px solid #fff;border-right:1px solid #a0a0a0"></div>
<div class="a" style="left:1210px;top:1159px;width:46px;height:23px;border-left:1px solid #fff;border-top:1px solid #fff;border-right:1px solid #a0a0a0"></div>
<div class="a" style="left:1416px;top:1159px;width:72px;height:23px;border-left:1px solid #fff;border-top:1px solid #fff;border-right:1px solid #a0a0a0"></div>
<div class="lbl" style="left:14px;top:1164px">F</div>
<div class="lbl" style="left:308px;top:1164px">A</div>
<div class="lbl" style="left:596px;top:1164px">M</div>
<div class="lbl" style="left:928px;top:1164px">B</div>
<div class="lbl" style="left:1221px;top:1164px">FFT</div>
<div class="lbl" style="left:1432px;top:1164px">WND</div>
<div class="cb " style="left:30px;top:1160px;width:151px;height:23px"><div class="v" style="left:3px;top:5px;font-size:13px;font-weight:bold">Auto</div><div class="ar"></div></div>

<div class="cb " style="left:183px;top:1160px;width:120px;height:23px"><div class="v" style="left:3px;top:5px;font-size:13px;font-weight:bold">&#x402;1</div><div class="ar"></div></div>

<div class="cb blk yel en" style="left:325px;top:1160px;width:152px;height:23px"><div class="v" style="left:3px;top:5px;font-size:13px;font-weight:bold">-180dB</div><div class="ar"></div></div>

<div class="cb blk yel en" style="left:480px;top:1160px;width:109px;height:23px"><div class="v" style="left:3px;top:5px;font-size:13px;font-weight:bold">Off</div><div class="ar"></div></div>

<div class="cb " style="left:616px;top:1160px;width:306px;height:23px"><div class="v" style="left:3px;top:5px;font-size:13px;font-weight:bold">Amplitude Spectrum</div><div class="ar"></div></div>

<div class="cb blk" style="left:945px;top:1160px;width:152px;height:23px"><div class="v" style="left:3px;top:5px;font-size:13px;font-weight:bold">Off</div><div class="ar"></div></div>

<div class="cb blk" style="left:1100px;top:1160px;width:109px;height:23px"><div class="v" style="left:3px;top:5px;font-size:13px;font-weight:bold">Off</div><div class="ar"></div></div>

<div class="cb " style="left:1257px;top:1160px;width:157px;height:23px"><div class="v" style="left:3px;top:5px;font-size:13px;font-weight:bold">32768</div><div class="ar"></div></div>

<div class="cb " style="left:1489px;top:1160px;width:270px;height:23px"><div class="v" style="left:3px;top:5px;font-size:13px;font-weight:bold">Kaiser 6</div><div class="ar"></div></div>

<div class="cb " style="left:1761px;top:1160px;width:156px;height:23px"><div class="v" style="left:3px;top:5px;font-size:13px;font-weight:bold">0%</div><div class="ar"></div></div>

</body></html>
